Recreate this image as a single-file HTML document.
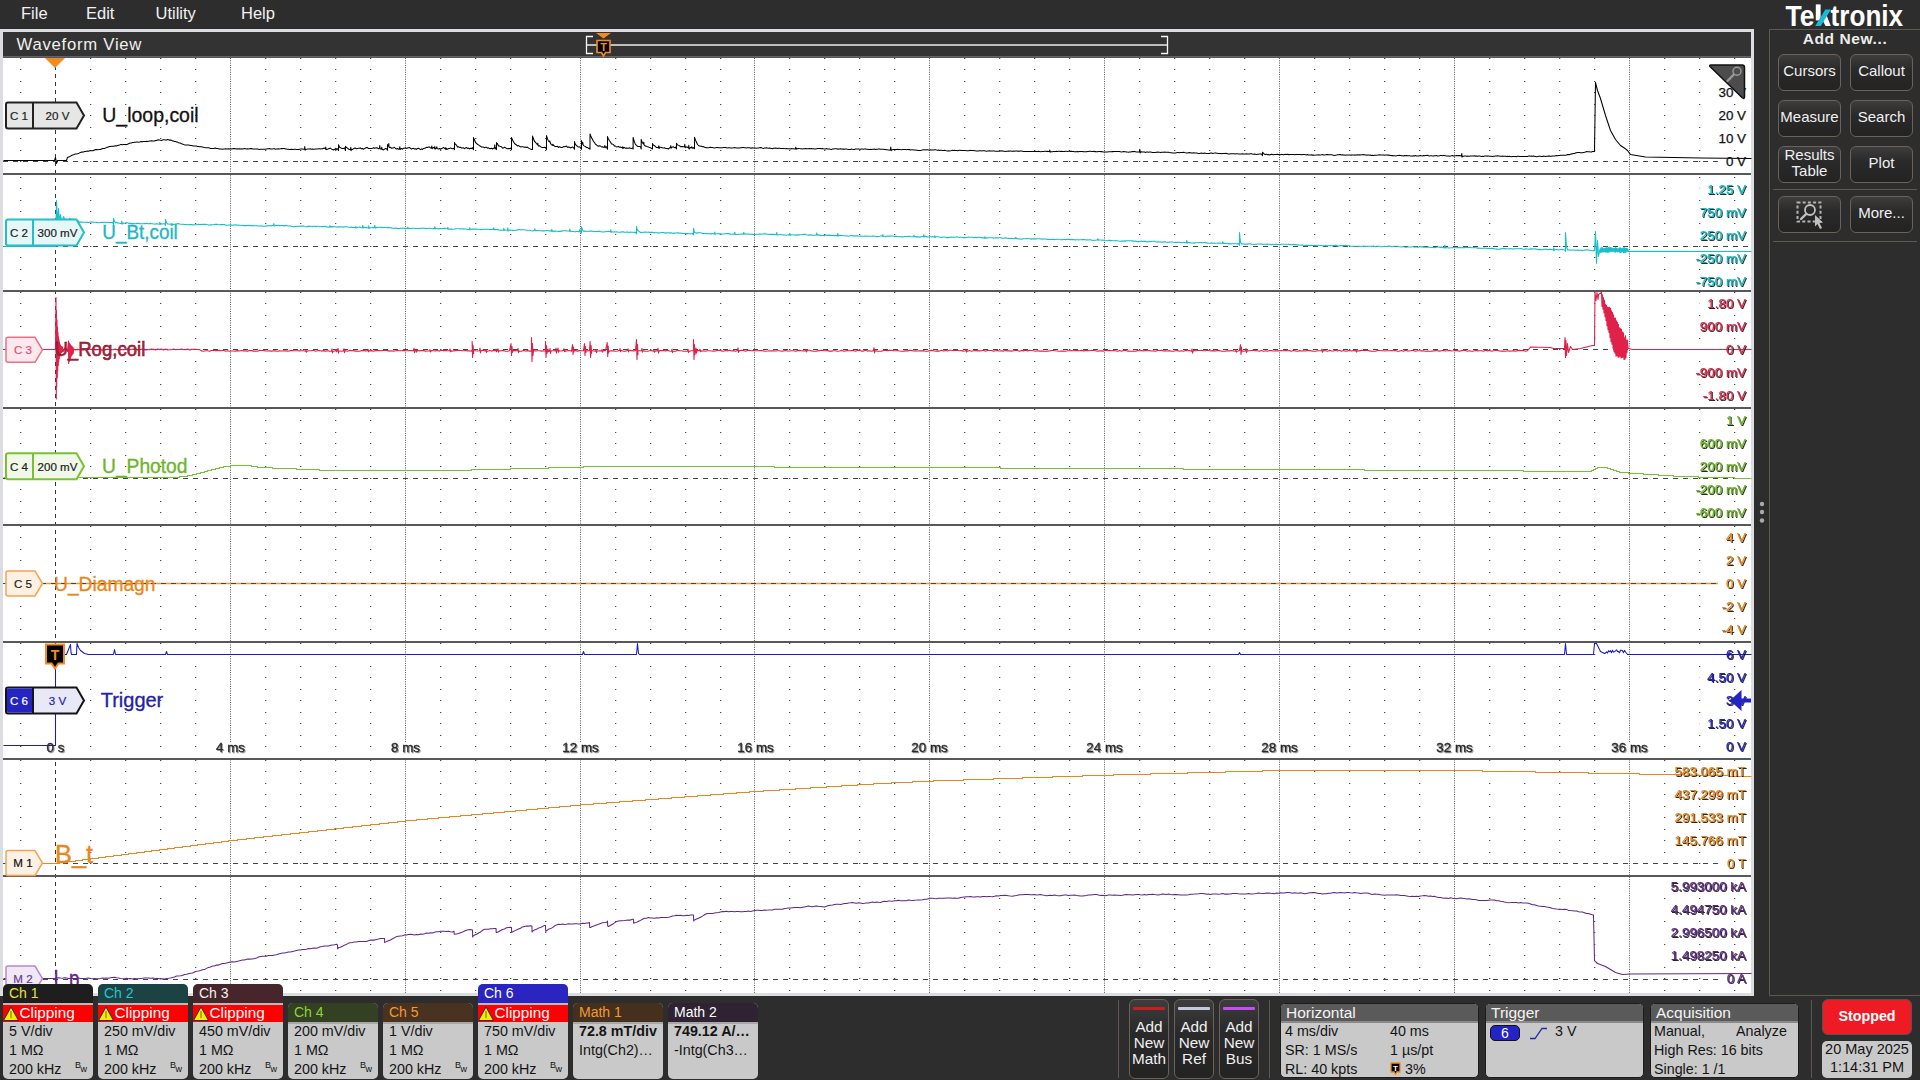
<!DOCTYPE html><html><head><meta charset="utf-8"><style>
*{margin:0;padding:0;box-sizing:border-box}
html,body{width:1920px;height:1080px;overflow:hidden;background:#2d2d2d;font-family:"Liberation Sans", sans-serif}
.a{position:absolute;white-space:pre}
.menu{color:#f2f2f2;font-size:16.5px;top:4px}
.btn{position:absolute;border:1px solid #6c6259;border-radius:6px;background:linear-gradient(#3d3d3d,#2a2a2a 40%,#232323);color:#f0f0f0;font-size:15px;text-align:center;display:flex;align-items:center;justify-content:center;line-height:16px;padding-bottom:3px}
.badge{position:absolute;width:90px;background:#c9c9c9;border-radius:5px 5px 5px 5px;overflow:hidden}
.bh{position:absolute;left:0;width:90px;height:19px;font-size:14px;line-height:19px;padding-left:6px}
.bl{position:absolute;left:6px;font-size:14.3px;color:#141414;line-height:19px}
.panel{position:absolute;background:#c9c9c9;border:1px solid #1c1c1c;border-radius:5px;overflow:hidden}
.ph{position:absolute;left:0;top:0;right:0;height:19px;background:#5a5a5a;border-bottom:2px solid #8a8a8a;color:#f4f4f4;font-size:15.5px;line-height:18px;padding-left:5px}
.pl{position:absolute;font-size:14.3px;color:#141414;line-height:19px}
</style></head><body>

<div class="a" style="left:0;top:0;width:1920px;height:29px;background:#2d2d2d"></div>
<div class="a menu" style="left:21px">File</div>
<div class="a menu" style="left:86px">Edit</div>
<div class="a menu" style="left:155.5px">Utility</div>
<div class="a menu" style="left:241px">Help</div>
<svg class="a" style="left:0;top:0" width="1920" height="30">
<g fill="#fff">
<text x="1785.5" y="26" font-family="Liberation Sans" font-weight="700" font-size="29.5" textLength="29" lengthAdjust="spacingAndGlyphs">Te</text>
<rect x="1815.8" y="4.4" width="4.8" height="16"/>
<polygon points="1822.3,19.5 1826.5,15.3 1830.8,26.1 1825.5,26.1"/>
<text x="1830.6" y="26" font-family="Liberation Sans" font-weight="700" font-size="29.5" textLength="72.5" lengthAdjust="spacingAndGlyphs">tronix</text>
</g>
<polygon points="1815.2,26.1 1820.8,26.1 1830.9,9.5 1825.3,9.5" fill="#1ab8da"/>
</svg>
<div class="a" style="left:0;top:29px;width:1754px;height:967px;background:#dcdde0"></div>
<div class="a" style="left:3px;top:32px;width:1748px;height:24px;background:#333"></div>
<div class="a" style="left:3px;top:56px;width:1748px;height:1px;background:#636467"></div>
<div class="a" style="left:3px;top:57px;width:1748px;height:1px;background:#55565a"></div>
<div class="a" style="left:3px;top:58px;width:1748px;height:935px;background:#fff"></div>
<div class="a" style="left:16.5px;top:35px;color:#f0f0f0;font-size:16.7px;letter-spacing:0.75px">Waveform View</div>
<svg class="a" style="left:0;top:0" width="1760" height="60">
<rect x="586" y="44" width="581" height="2" fill="#bdbdbd"/>
<path d="M593 36.5H586.5V53.5H593" fill="none" stroke="#f4f4f4" stroke-width="1.3"/>
<path d="M1161 36.5H1167.5V53.5H1161" fill="none" stroke="#f4f4f4" stroke-width="1.3"/>
<polygon points="596,33 611,33 603.5,38.5" fill="#f28c22"/>
<path d="M597 40.5H610V52.5H605.5L603.5 56L601.5 52.5H597Z" fill="#000" stroke="#f28c22" stroke-width="1.6"/>
<text x="603.5" y="51" text-anchor="middle" font-family="Liberation Sans" font-weight="700" font-size="11" fill="#f28c22">T</text>
</svg>
<svg class="a" style="left:0;top:0" width="1760" height="1000" font-family="Liberation Sans">
<defs><filter id="sh2" x="-5%" y="-20%" width="110%" height="140%"><feOffset dx="0.6" dy="0.6" in="SourceAlpha" result="o"/><feComponentTransfer in="o" result="o2"><feFuncA type="linear" slope="0.4"/></feComponentTransfer><feMerge><feMergeNode in="o2"/><feMergeNode in="SourceGraphic"/></feMerge></filter></defs>
<defs><filter id="sh" x="-5%" y="-20%" width="110%" height="140%"><feOffset dx="0.8" dy="0.8" in="SourceAlpha" result="o"/><feComponentTransfer in="o" result="o2"><feFuncA type="linear" slope="0.85"/></feComponentTransfer><feMerge><feMergeNode in="o2"/><feMergeNode in="SourceGraphic"/></feMerge></filter></defs>
<path d="M20 58.5h1.3 M90 58.5h1.3 M125 58.5h1.3 M160 58.5h1.3 M195 58.5h1.3 M265 58.5h1.3 M300 58.5h1.3 M335 58.5h1.3 M370 58.5h1.3 M440 58.5h1.3 M475 58.5h1.3 M510 58.5h1.3 M545 58.5h1.3 M615 58.5h1.3 M650 58.5h1.3 M685 58.5h1.3 M720 58.5h1.3 M789 58.5h1.3 M824 58.5h1.3 M859 58.5h1.3 M894 58.5h1.3 M964 58.5h1.3 M999 58.5h1.3 M1034 58.5h1.3 M1069 58.5h1.3 M1139 58.5h1.3 M1174 58.5h1.3 M1209 58.5h1.3 M1244 58.5h1.3 M1314 58.5h1.3 M1349 58.5h1.3 M1384 58.5h1.3 M1419 58.5h1.3 M1489 58.5h1.3 M1524 58.5h1.3 M1559 58.5h1.3 M1594 58.5h1.3 M1664 58.5h1.3 M1699 58.5h1.3 M1734 58.5h1.3 M20 69.5h1.3 M90 69.5h1.3 M125 69.5h1.3 M160 69.5h1.3 M195 69.5h1.3 M265 69.5h1.3 M300 69.5h1.3 M335 69.5h1.3 M370 69.5h1.3 M440 69.5h1.3 M475 69.5h1.3 M510 69.5h1.3 M545 69.5h1.3 M615 69.5h1.3 M650 69.5h1.3 M685 69.5h1.3 M720 69.5h1.3 M789 69.5h1.3 M824 69.5h1.3 M859 69.5h1.3 M894 69.5h1.3 M964 69.5h1.3 M999 69.5h1.3 M1034 69.5h1.3 M1069 69.5h1.3 M1139 69.5h1.3 M1174 69.5h1.3 M1209 69.5h1.3 M1244 69.5h1.3 M1314 69.5h1.3 M1349 69.5h1.3 M1384 69.5h1.3 M1419 69.5h1.3 M1489 69.5h1.3 M1524 69.5h1.3 M1559 69.5h1.3 M1594 69.5h1.3 M1664 69.5h1.3 M1699 69.5h1.3 M1734 69.5h1.3 M20 81.5h1.3 M90 81.5h1.3 M125 81.5h1.3 M160 81.5h1.3 M195 81.5h1.3 M265 81.5h1.3 M300 81.5h1.3 M335 81.5h1.3 M370 81.5h1.3 M440 81.5h1.3 M475 81.5h1.3 M510 81.5h1.3 M545 81.5h1.3 M615 81.5h1.3 M650 81.5h1.3 M685 81.5h1.3 M720 81.5h1.3 M789 81.5h1.3 M824 81.5h1.3 M859 81.5h1.3 M894 81.5h1.3 M964 81.5h1.3 M999 81.5h1.3 M1034 81.5h1.3 M1069 81.5h1.3 M1139 81.5h1.3 M1174 81.5h1.3 M1209 81.5h1.3 M1244 81.5h1.3 M1314 81.5h1.3 M1349 81.5h1.3 M1384 81.5h1.3 M1419 81.5h1.3 M1489 81.5h1.3 M1524 81.5h1.3 M1559 81.5h1.3 M1594 81.5h1.3 M1664 81.5h1.3 M1699 81.5h1.3 M1734 81.5h1.3 M20 92.5h1.3 M90 92.5h1.3 M125 92.5h1.3 M160 92.5h1.3 M195 92.5h1.3 M265 92.5h1.3 M300 92.5h1.3 M335 92.5h1.3 M370 92.5h1.3 M440 92.5h1.3 M475 92.5h1.3 M510 92.5h1.3 M545 92.5h1.3 M615 92.5h1.3 M650 92.5h1.3 M685 92.5h1.3 M720 92.5h1.3 M789 92.5h1.3 M824 92.5h1.3 M859 92.5h1.3 M894 92.5h1.3 M964 92.5h1.3 M999 92.5h1.3 M1034 92.5h1.3 M1069 92.5h1.3 M1139 92.5h1.3 M1174 92.5h1.3 M1209 92.5h1.3 M1244 92.5h1.3 M1314 92.5h1.3 M1349 92.5h1.3 M1384 92.5h1.3 M1419 92.5h1.3 M1489 92.5h1.3 M1524 92.5h1.3 M1559 92.5h1.3 M1594 92.5h1.3 M1664 92.5h1.3 M1699 92.5h1.3 M1734 92.5h1.3 M20 104.5h1.3 M90 104.5h1.3 M125 104.5h1.3 M160 104.5h1.3 M195 104.5h1.3 M265 104.5h1.3 M300 104.5h1.3 M335 104.5h1.3 M370 104.5h1.3 M440 104.5h1.3 M475 104.5h1.3 M510 104.5h1.3 M545 104.5h1.3 M615 104.5h1.3 M650 104.5h1.3 M685 104.5h1.3 M720 104.5h1.3 M789 104.5h1.3 M824 104.5h1.3 M859 104.5h1.3 M894 104.5h1.3 M964 104.5h1.3 M999 104.5h1.3 M1034 104.5h1.3 M1069 104.5h1.3 M1139 104.5h1.3 M1174 104.5h1.3 M1209 104.5h1.3 M1244 104.5h1.3 M1314 104.5h1.3 M1349 104.5h1.3 M1384 104.5h1.3 M1419 104.5h1.3 M1489 104.5h1.3 M1524 104.5h1.3 M1559 104.5h1.3 M1594 104.5h1.3 M1664 104.5h1.3 M1699 104.5h1.3 M1734 104.5h1.3 M20 115.5h1.3 M90 115.5h1.3 M125 115.5h1.3 M160 115.5h1.3 M195 115.5h1.3 M265 115.5h1.3 M300 115.5h1.3 M335 115.5h1.3 M370 115.5h1.3 M440 115.5h1.3 M475 115.5h1.3 M510 115.5h1.3 M545 115.5h1.3 M615 115.5h1.3 M650 115.5h1.3 M685 115.5h1.3 M720 115.5h1.3 M789 115.5h1.3 M824 115.5h1.3 M859 115.5h1.3 M894 115.5h1.3 M964 115.5h1.3 M999 115.5h1.3 M1034 115.5h1.3 M1069 115.5h1.3 M1139 115.5h1.3 M1174 115.5h1.3 M1209 115.5h1.3 M1244 115.5h1.3 M1314 115.5h1.3 M1349 115.5h1.3 M1384 115.5h1.3 M1419 115.5h1.3 M1489 115.5h1.3 M1524 115.5h1.3 M1559 115.5h1.3 M1594 115.5h1.3 M1664 115.5h1.3 M1699 115.5h1.3 M1734 115.5h1.3 M20 127.5h1.3 M90 127.5h1.3 M125 127.5h1.3 M160 127.5h1.3 M195 127.5h1.3 M265 127.5h1.3 M300 127.5h1.3 M335 127.5h1.3 M370 127.5h1.3 M440 127.5h1.3 M475 127.5h1.3 M510 127.5h1.3 M545 127.5h1.3 M615 127.5h1.3 M650 127.5h1.3 M685 127.5h1.3 M720 127.5h1.3 M789 127.5h1.3 M824 127.5h1.3 M859 127.5h1.3 M894 127.5h1.3 M964 127.5h1.3 M999 127.5h1.3 M1034 127.5h1.3 M1069 127.5h1.3 M1139 127.5h1.3 M1174 127.5h1.3 M1209 127.5h1.3 M1244 127.5h1.3 M1314 127.5h1.3 M1349 127.5h1.3 M1384 127.5h1.3 M1419 127.5h1.3 M1489 127.5h1.3 M1524 127.5h1.3 M1559 127.5h1.3 M1594 127.5h1.3 M1664 127.5h1.3 M1699 127.5h1.3 M1734 127.5h1.3 M20 138.5h1.3 M90 138.5h1.3 M125 138.5h1.3 M160 138.5h1.3 M195 138.5h1.3 M265 138.5h1.3 M300 138.5h1.3 M335 138.5h1.3 M370 138.5h1.3 M440 138.5h1.3 M475 138.5h1.3 M510 138.5h1.3 M545 138.5h1.3 M615 138.5h1.3 M650 138.5h1.3 M685 138.5h1.3 M720 138.5h1.3 M789 138.5h1.3 M824 138.5h1.3 M859 138.5h1.3 M894 138.5h1.3 M964 138.5h1.3 M999 138.5h1.3 M1034 138.5h1.3 M1069 138.5h1.3 M1139 138.5h1.3 M1174 138.5h1.3 M1209 138.5h1.3 M1244 138.5h1.3 M1314 138.5h1.3 M1349 138.5h1.3 M1384 138.5h1.3 M1419 138.5h1.3 M1489 138.5h1.3 M1524 138.5h1.3 M1559 138.5h1.3 M1594 138.5h1.3 M1664 138.5h1.3 M1699 138.5h1.3 M1734 138.5h1.3 M20 150.5h1.3 M90 150.5h1.3 M125 150.5h1.3 M160 150.5h1.3 M195 150.5h1.3 M265 150.5h1.3 M300 150.5h1.3 M335 150.5h1.3 M370 150.5h1.3 M440 150.5h1.3 M475 150.5h1.3 M510 150.5h1.3 M545 150.5h1.3 M615 150.5h1.3 M650 150.5h1.3 M685 150.5h1.3 M720 150.5h1.3 M789 150.5h1.3 M824 150.5h1.3 M859 150.5h1.3 M894 150.5h1.3 M964 150.5h1.3 M999 150.5h1.3 M1034 150.5h1.3 M1069 150.5h1.3 M1139 150.5h1.3 M1174 150.5h1.3 M1209 150.5h1.3 M1244 150.5h1.3 M1314 150.5h1.3 M1349 150.5h1.3 M1384 150.5h1.3 M1419 150.5h1.3 M1489 150.5h1.3 M1524 150.5h1.3 M1559 150.5h1.3 M1594 150.5h1.3 M1664 150.5h1.3 M1699 150.5h1.3 M1734 150.5h1.3 M20 161.5h1.3 M90 161.5h1.3 M125 161.5h1.3 M160 161.5h1.3 M195 161.5h1.3 M265 161.5h1.3 M300 161.5h1.3 M335 161.5h1.3 M370 161.5h1.3 M440 161.5h1.3 M475 161.5h1.3 M510 161.5h1.3 M545 161.5h1.3 M615 161.5h1.3 M650 161.5h1.3 M685 161.5h1.3 M720 161.5h1.3 M789 161.5h1.3 M824 161.5h1.3 M859 161.5h1.3 M894 161.5h1.3 M964 161.5h1.3 M999 161.5h1.3 M1034 161.5h1.3 M1069 161.5h1.3 M1139 161.5h1.3 M1174 161.5h1.3 M1209 161.5h1.3 M1244 161.5h1.3 M1314 161.5h1.3 M1349 161.5h1.3 M1384 161.5h1.3 M1419 161.5h1.3 M1489 161.5h1.3 M1524 161.5h1.3 M1559 161.5h1.3 M1594 161.5h1.3 M1664 161.5h1.3 M1699 161.5h1.3 M1734 161.5h1.3 M20 177.5h1.3 M90 177.5h1.3 M125 177.5h1.3 M160 177.5h1.3 M195 177.5h1.3 M265 177.5h1.3 M300 177.5h1.3 M335 177.5h1.3 M370 177.5h1.3 M440 177.5h1.3 M475 177.5h1.3 M510 177.5h1.3 M545 177.5h1.3 M615 177.5h1.3 M650 177.5h1.3 M685 177.5h1.3 M720 177.5h1.3 M789 177.5h1.3 M824 177.5h1.3 M859 177.5h1.3 M894 177.5h1.3 M964 177.5h1.3 M999 177.5h1.3 M1034 177.5h1.3 M1069 177.5h1.3 M1139 177.5h1.3 M1174 177.5h1.3 M1209 177.5h1.3 M1244 177.5h1.3 M1314 177.5h1.3 M1349 177.5h1.3 M1384 177.5h1.3 M1419 177.5h1.3 M1489 177.5h1.3 M1524 177.5h1.3 M1559 177.5h1.3 M1594 177.5h1.3 M1664 177.5h1.3 M1699 177.5h1.3 M1734 177.5h1.3 M20 188.5h1.3 M90 188.5h1.3 M125 188.5h1.3 M160 188.5h1.3 M195 188.5h1.3 M265 188.5h1.3 M300 188.5h1.3 M335 188.5h1.3 M370 188.5h1.3 M440 188.5h1.3 M475 188.5h1.3 M510 188.5h1.3 M545 188.5h1.3 M615 188.5h1.3 M650 188.5h1.3 M685 188.5h1.3 M720 188.5h1.3 M789 188.5h1.3 M824 188.5h1.3 M859 188.5h1.3 M894 188.5h1.3 M964 188.5h1.3 M999 188.5h1.3 M1034 188.5h1.3 M1069 188.5h1.3 M1139 188.5h1.3 M1174 188.5h1.3 M1209 188.5h1.3 M1244 188.5h1.3 M1314 188.5h1.3 M1349 188.5h1.3 M1384 188.5h1.3 M1419 188.5h1.3 M1489 188.5h1.3 M1524 188.5h1.3 M1559 188.5h1.3 M1594 188.5h1.3 M1664 188.5h1.3 M1699 188.5h1.3 M1734 188.5h1.3 M20 200.5h1.3 M90 200.5h1.3 M125 200.5h1.3 M160 200.5h1.3 M195 200.5h1.3 M265 200.5h1.3 M300 200.5h1.3 M335 200.5h1.3 M370 200.5h1.3 M440 200.5h1.3 M475 200.5h1.3 M510 200.5h1.3 M545 200.5h1.3 M615 200.5h1.3 M650 200.5h1.3 M685 200.5h1.3 M720 200.5h1.3 M789 200.5h1.3 M824 200.5h1.3 M859 200.5h1.3 M894 200.5h1.3 M964 200.5h1.3 M999 200.5h1.3 M1034 200.5h1.3 M1069 200.5h1.3 M1139 200.5h1.3 M1174 200.5h1.3 M1209 200.5h1.3 M1244 200.5h1.3 M1314 200.5h1.3 M1349 200.5h1.3 M1384 200.5h1.3 M1419 200.5h1.3 M1489 200.5h1.3 M1524 200.5h1.3 M1559 200.5h1.3 M1594 200.5h1.3 M1664 200.5h1.3 M1699 200.5h1.3 M1734 200.5h1.3 M20 211.5h1.3 M90 211.5h1.3 M125 211.5h1.3 M160 211.5h1.3 M195 211.5h1.3 M265 211.5h1.3 M300 211.5h1.3 M335 211.5h1.3 M370 211.5h1.3 M440 211.5h1.3 M475 211.5h1.3 M510 211.5h1.3 M545 211.5h1.3 M615 211.5h1.3 M650 211.5h1.3 M685 211.5h1.3 M720 211.5h1.3 M789 211.5h1.3 M824 211.5h1.3 M859 211.5h1.3 M894 211.5h1.3 M964 211.5h1.3 M999 211.5h1.3 M1034 211.5h1.3 M1069 211.5h1.3 M1139 211.5h1.3 M1174 211.5h1.3 M1209 211.5h1.3 M1244 211.5h1.3 M1314 211.5h1.3 M1349 211.5h1.3 M1384 211.5h1.3 M1419 211.5h1.3 M1489 211.5h1.3 M1524 211.5h1.3 M1559 211.5h1.3 M1594 211.5h1.3 M1664 211.5h1.3 M1699 211.5h1.3 M1734 211.5h1.3 M20 223.5h1.3 M90 223.5h1.3 M125 223.5h1.3 M160 223.5h1.3 M195 223.5h1.3 M265 223.5h1.3 M300 223.5h1.3 M335 223.5h1.3 M370 223.5h1.3 M440 223.5h1.3 M475 223.5h1.3 M510 223.5h1.3 M545 223.5h1.3 M615 223.5h1.3 M650 223.5h1.3 M685 223.5h1.3 M720 223.5h1.3 M789 223.5h1.3 M824 223.5h1.3 M859 223.5h1.3 M894 223.5h1.3 M964 223.5h1.3 M999 223.5h1.3 M1034 223.5h1.3 M1069 223.5h1.3 M1139 223.5h1.3 M1174 223.5h1.3 M1209 223.5h1.3 M1244 223.5h1.3 M1314 223.5h1.3 M1349 223.5h1.3 M1384 223.5h1.3 M1419 223.5h1.3 M1489 223.5h1.3 M1524 223.5h1.3 M1559 223.5h1.3 M1594 223.5h1.3 M1664 223.5h1.3 M1699 223.5h1.3 M1734 223.5h1.3 M20 234.5h1.3 M90 234.5h1.3 M125 234.5h1.3 M160 234.5h1.3 M195 234.5h1.3 M265 234.5h1.3 M300 234.5h1.3 M335 234.5h1.3 M370 234.5h1.3 M440 234.5h1.3 M475 234.5h1.3 M510 234.5h1.3 M545 234.5h1.3 M615 234.5h1.3 M650 234.5h1.3 M685 234.5h1.3 M720 234.5h1.3 M789 234.5h1.3 M824 234.5h1.3 M859 234.5h1.3 M894 234.5h1.3 M964 234.5h1.3 M999 234.5h1.3 M1034 234.5h1.3 M1069 234.5h1.3 M1139 234.5h1.3 M1174 234.5h1.3 M1209 234.5h1.3 M1244 234.5h1.3 M1314 234.5h1.3 M1349 234.5h1.3 M1384 234.5h1.3 M1419 234.5h1.3 M1489 234.5h1.3 M1524 234.5h1.3 M1559 234.5h1.3 M1594 234.5h1.3 M1664 234.5h1.3 M1699 234.5h1.3 M1734 234.5h1.3 M20 246.5h1.3 M90 246.5h1.3 M125 246.5h1.3 M160 246.5h1.3 M195 246.5h1.3 M265 246.5h1.3 M300 246.5h1.3 M335 246.5h1.3 M370 246.5h1.3 M440 246.5h1.3 M475 246.5h1.3 M510 246.5h1.3 M545 246.5h1.3 M615 246.5h1.3 M650 246.5h1.3 M685 246.5h1.3 M720 246.5h1.3 M789 246.5h1.3 M824 246.5h1.3 M859 246.5h1.3 M894 246.5h1.3 M964 246.5h1.3 M999 246.5h1.3 M1034 246.5h1.3 M1069 246.5h1.3 M1139 246.5h1.3 M1174 246.5h1.3 M1209 246.5h1.3 M1244 246.5h1.3 M1314 246.5h1.3 M1349 246.5h1.3 M1384 246.5h1.3 M1419 246.5h1.3 M1489 246.5h1.3 M1524 246.5h1.3 M1559 246.5h1.3 M1594 246.5h1.3 M1664 246.5h1.3 M1699 246.5h1.3 M1734 246.5h1.3 M20 257.5h1.3 M90 257.5h1.3 M125 257.5h1.3 M160 257.5h1.3 M195 257.5h1.3 M265 257.5h1.3 M300 257.5h1.3 M335 257.5h1.3 M370 257.5h1.3 M440 257.5h1.3 M475 257.5h1.3 M510 257.5h1.3 M545 257.5h1.3 M615 257.5h1.3 M650 257.5h1.3 M685 257.5h1.3 M720 257.5h1.3 M789 257.5h1.3 M824 257.5h1.3 M859 257.5h1.3 M894 257.5h1.3 M964 257.5h1.3 M999 257.5h1.3 M1034 257.5h1.3 M1069 257.5h1.3 M1139 257.5h1.3 M1174 257.5h1.3 M1209 257.5h1.3 M1244 257.5h1.3 M1314 257.5h1.3 M1349 257.5h1.3 M1384 257.5h1.3 M1419 257.5h1.3 M1489 257.5h1.3 M1524 257.5h1.3 M1559 257.5h1.3 M1594 257.5h1.3 M1664 257.5h1.3 M1699 257.5h1.3 M1734 257.5h1.3 M20 269.5h1.3 M90 269.5h1.3 M125 269.5h1.3 M160 269.5h1.3 M195 269.5h1.3 M265 269.5h1.3 M300 269.5h1.3 M335 269.5h1.3 M370 269.5h1.3 M440 269.5h1.3 M475 269.5h1.3 M510 269.5h1.3 M545 269.5h1.3 M615 269.5h1.3 M650 269.5h1.3 M685 269.5h1.3 M720 269.5h1.3 M789 269.5h1.3 M824 269.5h1.3 M859 269.5h1.3 M894 269.5h1.3 M964 269.5h1.3 M999 269.5h1.3 M1034 269.5h1.3 M1069 269.5h1.3 M1139 269.5h1.3 M1174 269.5h1.3 M1209 269.5h1.3 M1244 269.5h1.3 M1314 269.5h1.3 M1349 269.5h1.3 M1384 269.5h1.3 M1419 269.5h1.3 M1489 269.5h1.3 M1524 269.5h1.3 M1559 269.5h1.3 M1594 269.5h1.3 M1664 269.5h1.3 M1699 269.5h1.3 M1734 269.5h1.3 M20 280.5h1.3 M90 280.5h1.3 M125 280.5h1.3 M160 280.5h1.3 M195 280.5h1.3 M265 280.5h1.3 M300 280.5h1.3 M335 280.5h1.3 M370 280.5h1.3 M440 280.5h1.3 M475 280.5h1.3 M510 280.5h1.3 M545 280.5h1.3 M615 280.5h1.3 M650 280.5h1.3 M685 280.5h1.3 M720 280.5h1.3 M789 280.5h1.3 M824 280.5h1.3 M859 280.5h1.3 M894 280.5h1.3 M964 280.5h1.3 M999 280.5h1.3 M1034 280.5h1.3 M1069 280.5h1.3 M1139 280.5h1.3 M1174 280.5h1.3 M1209 280.5h1.3 M1244 280.5h1.3 M1314 280.5h1.3 M1349 280.5h1.3 M1384 280.5h1.3 M1419 280.5h1.3 M1489 280.5h1.3 M1524 280.5h1.3 M1559 280.5h1.3 M1594 280.5h1.3 M1664 280.5h1.3 M1699 280.5h1.3 M1734 280.5h1.3 M20 292.5h1.3 M90 292.5h1.3 M125 292.5h1.3 M160 292.5h1.3 M195 292.5h1.3 M265 292.5h1.3 M300 292.5h1.3 M335 292.5h1.3 M370 292.5h1.3 M440 292.5h1.3 M475 292.5h1.3 M510 292.5h1.3 M545 292.5h1.3 M615 292.5h1.3 M650 292.5h1.3 M685 292.5h1.3 M720 292.5h1.3 M789 292.5h1.3 M824 292.5h1.3 M859 292.5h1.3 M894 292.5h1.3 M964 292.5h1.3 M999 292.5h1.3 M1034 292.5h1.3 M1069 292.5h1.3 M1139 292.5h1.3 M1174 292.5h1.3 M1209 292.5h1.3 M1244 292.5h1.3 M1314 292.5h1.3 M1349 292.5h1.3 M1384 292.5h1.3 M1419 292.5h1.3 M1489 292.5h1.3 M1524 292.5h1.3 M1559 292.5h1.3 M1594 292.5h1.3 M1664 292.5h1.3 M1699 292.5h1.3 M1734 292.5h1.3 M20 303.5h1.3 M90 303.5h1.3 M125 303.5h1.3 M160 303.5h1.3 M195 303.5h1.3 M265 303.5h1.3 M300 303.5h1.3 M335 303.5h1.3 M370 303.5h1.3 M440 303.5h1.3 M475 303.5h1.3 M510 303.5h1.3 M545 303.5h1.3 M615 303.5h1.3 M650 303.5h1.3 M685 303.5h1.3 M720 303.5h1.3 M789 303.5h1.3 M824 303.5h1.3 M859 303.5h1.3 M894 303.5h1.3 M964 303.5h1.3 M999 303.5h1.3 M1034 303.5h1.3 M1069 303.5h1.3 M1139 303.5h1.3 M1174 303.5h1.3 M1209 303.5h1.3 M1244 303.5h1.3 M1314 303.5h1.3 M1349 303.5h1.3 M1384 303.5h1.3 M1419 303.5h1.3 M1489 303.5h1.3 M1524 303.5h1.3 M1559 303.5h1.3 M1594 303.5h1.3 M1664 303.5h1.3 M1699 303.5h1.3 M1734 303.5h1.3 M20 315.5h1.3 M90 315.5h1.3 M125 315.5h1.3 M160 315.5h1.3 M195 315.5h1.3 M265 315.5h1.3 M300 315.5h1.3 M335 315.5h1.3 M370 315.5h1.3 M440 315.5h1.3 M475 315.5h1.3 M510 315.5h1.3 M545 315.5h1.3 M615 315.5h1.3 M650 315.5h1.3 M685 315.5h1.3 M720 315.5h1.3 M789 315.5h1.3 M824 315.5h1.3 M859 315.5h1.3 M894 315.5h1.3 M964 315.5h1.3 M999 315.5h1.3 M1034 315.5h1.3 M1069 315.5h1.3 M1139 315.5h1.3 M1174 315.5h1.3 M1209 315.5h1.3 M1244 315.5h1.3 M1314 315.5h1.3 M1349 315.5h1.3 M1384 315.5h1.3 M1419 315.5h1.3 M1489 315.5h1.3 M1524 315.5h1.3 M1559 315.5h1.3 M1594 315.5h1.3 M1664 315.5h1.3 M1699 315.5h1.3 M1734 315.5h1.3 M20 326.5h1.3 M90 326.5h1.3 M125 326.5h1.3 M160 326.5h1.3 M195 326.5h1.3 M265 326.5h1.3 M300 326.5h1.3 M335 326.5h1.3 M370 326.5h1.3 M440 326.5h1.3 M475 326.5h1.3 M510 326.5h1.3 M545 326.5h1.3 M615 326.5h1.3 M650 326.5h1.3 M685 326.5h1.3 M720 326.5h1.3 M789 326.5h1.3 M824 326.5h1.3 M859 326.5h1.3 M894 326.5h1.3 M964 326.5h1.3 M999 326.5h1.3 M1034 326.5h1.3 M1069 326.5h1.3 M1139 326.5h1.3 M1174 326.5h1.3 M1209 326.5h1.3 M1244 326.5h1.3 M1314 326.5h1.3 M1349 326.5h1.3 M1384 326.5h1.3 M1419 326.5h1.3 M1489 326.5h1.3 M1524 326.5h1.3 M1559 326.5h1.3 M1594 326.5h1.3 M1664 326.5h1.3 M1699 326.5h1.3 M1734 326.5h1.3 M20 338.5h1.3 M90 338.5h1.3 M125 338.5h1.3 M160 338.5h1.3 M195 338.5h1.3 M265 338.5h1.3 M300 338.5h1.3 M335 338.5h1.3 M370 338.5h1.3 M440 338.5h1.3 M475 338.5h1.3 M510 338.5h1.3 M545 338.5h1.3 M615 338.5h1.3 M650 338.5h1.3 M685 338.5h1.3 M720 338.5h1.3 M789 338.5h1.3 M824 338.5h1.3 M859 338.5h1.3 M894 338.5h1.3 M964 338.5h1.3 M999 338.5h1.3 M1034 338.5h1.3 M1069 338.5h1.3 M1139 338.5h1.3 M1174 338.5h1.3 M1209 338.5h1.3 M1244 338.5h1.3 M1314 338.5h1.3 M1349 338.5h1.3 M1384 338.5h1.3 M1419 338.5h1.3 M1489 338.5h1.3 M1524 338.5h1.3 M1559 338.5h1.3 M1594 338.5h1.3 M1664 338.5h1.3 M1699 338.5h1.3 M1734 338.5h1.3 M20 349.5h1.3 M90 349.5h1.3 M125 349.5h1.3 M160 349.5h1.3 M195 349.5h1.3 M265 349.5h1.3 M300 349.5h1.3 M335 349.5h1.3 M370 349.5h1.3 M440 349.5h1.3 M475 349.5h1.3 M510 349.5h1.3 M545 349.5h1.3 M615 349.5h1.3 M650 349.5h1.3 M685 349.5h1.3 M720 349.5h1.3 M789 349.5h1.3 M824 349.5h1.3 M859 349.5h1.3 M894 349.5h1.3 M964 349.5h1.3 M999 349.5h1.3 M1034 349.5h1.3 M1069 349.5h1.3 M1139 349.5h1.3 M1174 349.5h1.3 M1209 349.5h1.3 M1244 349.5h1.3 M1314 349.5h1.3 M1349 349.5h1.3 M1384 349.5h1.3 M1419 349.5h1.3 M1489 349.5h1.3 M1524 349.5h1.3 M1559 349.5h1.3 M1594 349.5h1.3 M1664 349.5h1.3 M1699 349.5h1.3 M1734 349.5h1.3 M20 361.5h1.3 M90 361.5h1.3 M125 361.5h1.3 M160 361.5h1.3 M195 361.5h1.3 M265 361.5h1.3 M300 361.5h1.3 M335 361.5h1.3 M370 361.5h1.3 M440 361.5h1.3 M475 361.5h1.3 M510 361.5h1.3 M545 361.5h1.3 M615 361.5h1.3 M650 361.5h1.3 M685 361.5h1.3 M720 361.5h1.3 M789 361.5h1.3 M824 361.5h1.3 M859 361.5h1.3 M894 361.5h1.3 M964 361.5h1.3 M999 361.5h1.3 M1034 361.5h1.3 M1069 361.5h1.3 M1139 361.5h1.3 M1174 361.5h1.3 M1209 361.5h1.3 M1244 361.5h1.3 M1314 361.5h1.3 M1349 361.5h1.3 M1384 361.5h1.3 M1419 361.5h1.3 M1489 361.5h1.3 M1524 361.5h1.3 M1559 361.5h1.3 M1594 361.5h1.3 M1664 361.5h1.3 M1699 361.5h1.3 M1734 361.5h1.3 M20 372.5h1.3 M90 372.5h1.3 M125 372.5h1.3 M160 372.5h1.3 M195 372.5h1.3 M265 372.5h1.3 M300 372.5h1.3 M335 372.5h1.3 M370 372.5h1.3 M440 372.5h1.3 M475 372.5h1.3 M510 372.5h1.3 M545 372.5h1.3 M615 372.5h1.3 M650 372.5h1.3 M685 372.5h1.3 M720 372.5h1.3 M789 372.5h1.3 M824 372.5h1.3 M859 372.5h1.3 M894 372.5h1.3 M964 372.5h1.3 M999 372.5h1.3 M1034 372.5h1.3 M1069 372.5h1.3 M1139 372.5h1.3 M1174 372.5h1.3 M1209 372.5h1.3 M1244 372.5h1.3 M1314 372.5h1.3 M1349 372.5h1.3 M1384 372.5h1.3 M1419 372.5h1.3 M1489 372.5h1.3 M1524 372.5h1.3 M1559 372.5h1.3 M1594 372.5h1.3 M1664 372.5h1.3 M1699 372.5h1.3 M1734 372.5h1.3 M20 384.5h1.3 M90 384.5h1.3 M125 384.5h1.3 M160 384.5h1.3 M195 384.5h1.3 M265 384.5h1.3 M300 384.5h1.3 M335 384.5h1.3 M370 384.5h1.3 M440 384.5h1.3 M475 384.5h1.3 M510 384.5h1.3 M545 384.5h1.3 M615 384.5h1.3 M650 384.5h1.3 M685 384.5h1.3 M720 384.5h1.3 M789 384.5h1.3 M824 384.5h1.3 M859 384.5h1.3 M894 384.5h1.3 M964 384.5h1.3 M999 384.5h1.3 M1034 384.5h1.3 M1069 384.5h1.3 M1139 384.5h1.3 M1174 384.5h1.3 M1209 384.5h1.3 M1244 384.5h1.3 M1314 384.5h1.3 M1349 384.5h1.3 M1384 384.5h1.3 M1419 384.5h1.3 M1489 384.5h1.3 M1524 384.5h1.3 M1559 384.5h1.3 M1594 384.5h1.3 M1664 384.5h1.3 M1699 384.5h1.3 M1734 384.5h1.3 M20 395.5h1.3 M90 395.5h1.3 M125 395.5h1.3 M160 395.5h1.3 M195 395.5h1.3 M265 395.5h1.3 M300 395.5h1.3 M335 395.5h1.3 M370 395.5h1.3 M440 395.5h1.3 M475 395.5h1.3 M510 395.5h1.3 M545 395.5h1.3 M615 395.5h1.3 M650 395.5h1.3 M685 395.5h1.3 M720 395.5h1.3 M789 395.5h1.3 M824 395.5h1.3 M859 395.5h1.3 M894 395.5h1.3 M964 395.5h1.3 M999 395.5h1.3 M1034 395.5h1.3 M1069 395.5h1.3 M1139 395.5h1.3 M1174 395.5h1.3 M1209 395.5h1.3 M1244 395.5h1.3 M1314 395.5h1.3 M1349 395.5h1.3 M1384 395.5h1.3 M1419 395.5h1.3 M1489 395.5h1.3 M1524 395.5h1.3 M1559 395.5h1.3 M1594 395.5h1.3 M1664 395.5h1.3 M1699 395.5h1.3 M1734 395.5h1.3 M20 409.5h1.3 M90 409.5h1.3 M125 409.5h1.3 M160 409.5h1.3 M195 409.5h1.3 M265 409.5h1.3 M300 409.5h1.3 M335 409.5h1.3 M370 409.5h1.3 M440 409.5h1.3 M475 409.5h1.3 M510 409.5h1.3 M545 409.5h1.3 M615 409.5h1.3 M650 409.5h1.3 M685 409.5h1.3 M720 409.5h1.3 M789 409.5h1.3 M824 409.5h1.3 M859 409.5h1.3 M894 409.5h1.3 M964 409.5h1.3 M999 409.5h1.3 M1034 409.5h1.3 M1069 409.5h1.3 M1139 409.5h1.3 M1174 409.5h1.3 M1209 409.5h1.3 M1244 409.5h1.3 M1314 409.5h1.3 M1349 409.5h1.3 M1384 409.5h1.3 M1419 409.5h1.3 M1489 409.5h1.3 M1524 409.5h1.3 M1559 409.5h1.3 M1594 409.5h1.3 M1664 409.5h1.3 M1699 409.5h1.3 M1734 409.5h1.3 M20 420.5h1.3 M90 420.5h1.3 M125 420.5h1.3 M160 420.5h1.3 M195 420.5h1.3 M265 420.5h1.3 M300 420.5h1.3 M335 420.5h1.3 M370 420.5h1.3 M440 420.5h1.3 M475 420.5h1.3 M510 420.5h1.3 M545 420.5h1.3 M615 420.5h1.3 M650 420.5h1.3 M685 420.5h1.3 M720 420.5h1.3 M789 420.5h1.3 M824 420.5h1.3 M859 420.5h1.3 M894 420.5h1.3 M964 420.5h1.3 M999 420.5h1.3 M1034 420.5h1.3 M1069 420.5h1.3 M1139 420.5h1.3 M1174 420.5h1.3 M1209 420.5h1.3 M1244 420.5h1.3 M1314 420.5h1.3 M1349 420.5h1.3 M1384 420.5h1.3 M1419 420.5h1.3 M1489 420.5h1.3 M1524 420.5h1.3 M1559 420.5h1.3 M1594 420.5h1.3 M1664 420.5h1.3 M1699 420.5h1.3 M1734 420.5h1.3 M20 432.5h1.3 M90 432.5h1.3 M125 432.5h1.3 M160 432.5h1.3 M195 432.5h1.3 M265 432.5h1.3 M300 432.5h1.3 M335 432.5h1.3 M370 432.5h1.3 M440 432.5h1.3 M475 432.5h1.3 M510 432.5h1.3 M545 432.5h1.3 M615 432.5h1.3 M650 432.5h1.3 M685 432.5h1.3 M720 432.5h1.3 M789 432.5h1.3 M824 432.5h1.3 M859 432.5h1.3 M894 432.5h1.3 M964 432.5h1.3 M999 432.5h1.3 M1034 432.5h1.3 M1069 432.5h1.3 M1139 432.5h1.3 M1174 432.5h1.3 M1209 432.5h1.3 M1244 432.5h1.3 M1314 432.5h1.3 M1349 432.5h1.3 M1384 432.5h1.3 M1419 432.5h1.3 M1489 432.5h1.3 M1524 432.5h1.3 M1559 432.5h1.3 M1594 432.5h1.3 M1664 432.5h1.3 M1699 432.5h1.3 M1734 432.5h1.3 M20 443.5h1.3 M90 443.5h1.3 M125 443.5h1.3 M160 443.5h1.3 M195 443.5h1.3 M265 443.5h1.3 M300 443.5h1.3 M335 443.5h1.3 M370 443.5h1.3 M440 443.5h1.3 M475 443.5h1.3 M510 443.5h1.3 M545 443.5h1.3 M615 443.5h1.3 M650 443.5h1.3 M685 443.5h1.3 M720 443.5h1.3 M789 443.5h1.3 M824 443.5h1.3 M859 443.5h1.3 M894 443.5h1.3 M964 443.5h1.3 M999 443.5h1.3 M1034 443.5h1.3 M1069 443.5h1.3 M1139 443.5h1.3 M1174 443.5h1.3 M1209 443.5h1.3 M1244 443.5h1.3 M1314 443.5h1.3 M1349 443.5h1.3 M1384 443.5h1.3 M1419 443.5h1.3 M1489 443.5h1.3 M1524 443.5h1.3 M1559 443.5h1.3 M1594 443.5h1.3 M1664 443.5h1.3 M1699 443.5h1.3 M1734 443.5h1.3 M20 455.5h1.3 M90 455.5h1.3 M125 455.5h1.3 M160 455.5h1.3 M195 455.5h1.3 M265 455.5h1.3 M300 455.5h1.3 M335 455.5h1.3 M370 455.5h1.3 M440 455.5h1.3 M475 455.5h1.3 M510 455.5h1.3 M545 455.5h1.3 M615 455.5h1.3 M650 455.5h1.3 M685 455.5h1.3 M720 455.5h1.3 M789 455.5h1.3 M824 455.5h1.3 M859 455.5h1.3 M894 455.5h1.3 M964 455.5h1.3 M999 455.5h1.3 M1034 455.5h1.3 M1069 455.5h1.3 M1139 455.5h1.3 M1174 455.5h1.3 M1209 455.5h1.3 M1244 455.5h1.3 M1314 455.5h1.3 M1349 455.5h1.3 M1384 455.5h1.3 M1419 455.5h1.3 M1489 455.5h1.3 M1524 455.5h1.3 M1559 455.5h1.3 M1594 455.5h1.3 M1664 455.5h1.3 M1699 455.5h1.3 M1734 455.5h1.3 M20 466.5h1.3 M90 466.5h1.3 M125 466.5h1.3 M160 466.5h1.3 M195 466.5h1.3 M265 466.5h1.3 M300 466.5h1.3 M335 466.5h1.3 M370 466.5h1.3 M440 466.5h1.3 M475 466.5h1.3 M510 466.5h1.3 M545 466.5h1.3 M615 466.5h1.3 M650 466.5h1.3 M685 466.5h1.3 M720 466.5h1.3 M789 466.5h1.3 M824 466.5h1.3 M859 466.5h1.3 M894 466.5h1.3 M964 466.5h1.3 M999 466.5h1.3 M1034 466.5h1.3 M1069 466.5h1.3 M1139 466.5h1.3 M1174 466.5h1.3 M1209 466.5h1.3 M1244 466.5h1.3 M1314 466.5h1.3 M1349 466.5h1.3 M1384 466.5h1.3 M1419 466.5h1.3 M1489 466.5h1.3 M1524 466.5h1.3 M1559 466.5h1.3 M1594 466.5h1.3 M1664 466.5h1.3 M1699 466.5h1.3 M1734 466.5h1.3 M20 478.5h1.3 M90 478.5h1.3 M125 478.5h1.3 M160 478.5h1.3 M195 478.5h1.3 M265 478.5h1.3 M300 478.5h1.3 M335 478.5h1.3 M370 478.5h1.3 M440 478.5h1.3 M475 478.5h1.3 M510 478.5h1.3 M545 478.5h1.3 M615 478.5h1.3 M650 478.5h1.3 M685 478.5h1.3 M720 478.5h1.3 M789 478.5h1.3 M824 478.5h1.3 M859 478.5h1.3 M894 478.5h1.3 M964 478.5h1.3 M999 478.5h1.3 M1034 478.5h1.3 M1069 478.5h1.3 M1139 478.5h1.3 M1174 478.5h1.3 M1209 478.5h1.3 M1244 478.5h1.3 M1314 478.5h1.3 M1349 478.5h1.3 M1384 478.5h1.3 M1419 478.5h1.3 M1489 478.5h1.3 M1524 478.5h1.3 M1559 478.5h1.3 M1594 478.5h1.3 M1664 478.5h1.3 M1699 478.5h1.3 M1734 478.5h1.3 M20 489.5h1.3 M90 489.5h1.3 M125 489.5h1.3 M160 489.5h1.3 M195 489.5h1.3 M265 489.5h1.3 M300 489.5h1.3 M335 489.5h1.3 M370 489.5h1.3 M440 489.5h1.3 M475 489.5h1.3 M510 489.5h1.3 M545 489.5h1.3 M615 489.5h1.3 M650 489.5h1.3 M685 489.5h1.3 M720 489.5h1.3 M789 489.5h1.3 M824 489.5h1.3 M859 489.5h1.3 M894 489.5h1.3 M964 489.5h1.3 M999 489.5h1.3 M1034 489.5h1.3 M1069 489.5h1.3 M1139 489.5h1.3 M1174 489.5h1.3 M1209 489.5h1.3 M1244 489.5h1.3 M1314 489.5h1.3 M1349 489.5h1.3 M1384 489.5h1.3 M1419 489.5h1.3 M1489 489.5h1.3 M1524 489.5h1.3 M1559 489.5h1.3 M1594 489.5h1.3 M1664 489.5h1.3 M1699 489.5h1.3 M1734 489.5h1.3 M20 501.5h1.3 M90 501.5h1.3 M125 501.5h1.3 M160 501.5h1.3 M195 501.5h1.3 M265 501.5h1.3 M300 501.5h1.3 M335 501.5h1.3 M370 501.5h1.3 M440 501.5h1.3 M475 501.5h1.3 M510 501.5h1.3 M545 501.5h1.3 M615 501.5h1.3 M650 501.5h1.3 M685 501.5h1.3 M720 501.5h1.3 M789 501.5h1.3 M824 501.5h1.3 M859 501.5h1.3 M894 501.5h1.3 M964 501.5h1.3 M999 501.5h1.3 M1034 501.5h1.3 M1069 501.5h1.3 M1139 501.5h1.3 M1174 501.5h1.3 M1209 501.5h1.3 M1244 501.5h1.3 M1314 501.5h1.3 M1349 501.5h1.3 M1384 501.5h1.3 M1419 501.5h1.3 M1489 501.5h1.3 M1524 501.5h1.3 M1559 501.5h1.3 M1594 501.5h1.3 M1664 501.5h1.3 M1699 501.5h1.3 M1734 501.5h1.3 M20 512.5h1.3 M90 512.5h1.3 M125 512.5h1.3 M160 512.5h1.3 M195 512.5h1.3 M265 512.5h1.3 M300 512.5h1.3 M335 512.5h1.3 M370 512.5h1.3 M440 512.5h1.3 M475 512.5h1.3 M510 512.5h1.3 M545 512.5h1.3 M615 512.5h1.3 M650 512.5h1.3 M685 512.5h1.3 M720 512.5h1.3 M789 512.5h1.3 M824 512.5h1.3 M859 512.5h1.3 M894 512.5h1.3 M964 512.5h1.3 M999 512.5h1.3 M1034 512.5h1.3 M1069 512.5h1.3 M1139 512.5h1.3 M1174 512.5h1.3 M1209 512.5h1.3 M1244 512.5h1.3 M1314 512.5h1.3 M1349 512.5h1.3 M1384 512.5h1.3 M1419 512.5h1.3 M1489 512.5h1.3 M1524 512.5h1.3 M1559 512.5h1.3 M1594 512.5h1.3 M1664 512.5h1.3 M1699 512.5h1.3 M1734 512.5h1.3 M20 526.5h1.3 M90 526.5h1.3 M125 526.5h1.3 M160 526.5h1.3 M195 526.5h1.3 M265 526.5h1.3 M300 526.5h1.3 M335 526.5h1.3 M370 526.5h1.3 M440 526.5h1.3 M475 526.5h1.3 M510 526.5h1.3 M545 526.5h1.3 M615 526.5h1.3 M650 526.5h1.3 M685 526.5h1.3 M720 526.5h1.3 M789 526.5h1.3 M824 526.5h1.3 M859 526.5h1.3 M894 526.5h1.3 M964 526.5h1.3 M999 526.5h1.3 M1034 526.5h1.3 M1069 526.5h1.3 M1139 526.5h1.3 M1174 526.5h1.3 M1209 526.5h1.3 M1244 526.5h1.3 M1314 526.5h1.3 M1349 526.5h1.3 M1384 526.5h1.3 M1419 526.5h1.3 M1489 526.5h1.3 M1524 526.5h1.3 M1559 526.5h1.3 M1594 526.5h1.3 M1664 526.5h1.3 M1699 526.5h1.3 M1734 526.5h1.3 M20 537.5h1.3 M90 537.5h1.3 M125 537.5h1.3 M160 537.5h1.3 M195 537.5h1.3 M265 537.5h1.3 M300 537.5h1.3 M335 537.5h1.3 M370 537.5h1.3 M440 537.5h1.3 M475 537.5h1.3 M510 537.5h1.3 M545 537.5h1.3 M615 537.5h1.3 M650 537.5h1.3 M685 537.5h1.3 M720 537.5h1.3 M789 537.5h1.3 M824 537.5h1.3 M859 537.5h1.3 M894 537.5h1.3 M964 537.5h1.3 M999 537.5h1.3 M1034 537.5h1.3 M1069 537.5h1.3 M1139 537.5h1.3 M1174 537.5h1.3 M1209 537.5h1.3 M1244 537.5h1.3 M1314 537.5h1.3 M1349 537.5h1.3 M1384 537.5h1.3 M1419 537.5h1.3 M1489 537.5h1.3 M1524 537.5h1.3 M1559 537.5h1.3 M1594 537.5h1.3 M1664 537.5h1.3 M1699 537.5h1.3 M1734 537.5h1.3 M20 549.5h1.3 M90 549.5h1.3 M125 549.5h1.3 M160 549.5h1.3 M195 549.5h1.3 M265 549.5h1.3 M300 549.5h1.3 M335 549.5h1.3 M370 549.5h1.3 M440 549.5h1.3 M475 549.5h1.3 M510 549.5h1.3 M545 549.5h1.3 M615 549.5h1.3 M650 549.5h1.3 M685 549.5h1.3 M720 549.5h1.3 M789 549.5h1.3 M824 549.5h1.3 M859 549.5h1.3 M894 549.5h1.3 M964 549.5h1.3 M999 549.5h1.3 M1034 549.5h1.3 M1069 549.5h1.3 M1139 549.5h1.3 M1174 549.5h1.3 M1209 549.5h1.3 M1244 549.5h1.3 M1314 549.5h1.3 M1349 549.5h1.3 M1384 549.5h1.3 M1419 549.5h1.3 M1489 549.5h1.3 M1524 549.5h1.3 M1559 549.5h1.3 M1594 549.5h1.3 M1664 549.5h1.3 M1699 549.5h1.3 M1734 549.5h1.3 M20 560.5h1.3 M90 560.5h1.3 M125 560.5h1.3 M160 560.5h1.3 M195 560.5h1.3 M265 560.5h1.3 M300 560.5h1.3 M335 560.5h1.3 M370 560.5h1.3 M440 560.5h1.3 M475 560.5h1.3 M510 560.5h1.3 M545 560.5h1.3 M615 560.5h1.3 M650 560.5h1.3 M685 560.5h1.3 M720 560.5h1.3 M789 560.5h1.3 M824 560.5h1.3 M859 560.5h1.3 M894 560.5h1.3 M964 560.5h1.3 M999 560.5h1.3 M1034 560.5h1.3 M1069 560.5h1.3 M1139 560.5h1.3 M1174 560.5h1.3 M1209 560.5h1.3 M1244 560.5h1.3 M1314 560.5h1.3 M1349 560.5h1.3 M1384 560.5h1.3 M1419 560.5h1.3 M1489 560.5h1.3 M1524 560.5h1.3 M1559 560.5h1.3 M1594 560.5h1.3 M1664 560.5h1.3 M1699 560.5h1.3 M1734 560.5h1.3 M20 572.5h1.3 M90 572.5h1.3 M125 572.5h1.3 M160 572.5h1.3 M195 572.5h1.3 M265 572.5h1.3 M300 572.5h1.3 M335 572.5h1.3 M370 572.5h1.3 M440 572.5h1.3 M475 572.5h1.3 M510 572.5h1.3 M545 572.5h1.3 M615 572.5h1.3 M650 572.5h1.3 M685 572.5h1.3 M720 572.5h1.3 M789 572.5h1.3 M824 572.5h1.3 M859 572.5h1.3 M894 572.5h1.3 M964 572.5h1.3 M999 572.5h1.3 M1034 572.5h1.3 M1069 572.5h1.3 M1139 572.5h1.3 M1174 572.5h1.3 M1209 572.5h1.3 M1244 572.5h1.3 M1314 572.5h1.3 M1349 572.5h1.3 M1384 572.5h1.3 M1419 572.5h1.3 M1489 572.5h1.3 M1524 572.5h1.3 M1559 572.5h1.3 M1594 572.5h1.3 M1664 572.5h1.3 M1699 572.5h1.3 M1734 572.5h1.3 M20 583.5h1.3 M90 583.5h1.3 M125 583.5h1.3 M160 583.5h1.3 M195 583.5h1.3 M265 583.5h1.3 M300 583.5h1.3 M335 583.5h1.3 M370 583.5h1.3 M440 583.5h1.3 M475 583.5h1.3 M510 583.5h1.3 M545 583.5h1.3 M615 583.5h1.3 M650 583.5h1.3 M685 583.5h1.3 M720 583.5h1.3 M789 583.5h1.3 M824 583.5h1.3 M859 583.5h1.3 M894 583.5h1.3 M964 583.5h1.3 M999 583.5h1.3 M1034 583.5h1.3 M1069 583.5h1.3 M1139 583.5h1.3 M1174 583.5h1.3 M1209 583.5h1.3 M1244 583.5h1.3 M1314 583.5h1.3 M1349 583.5h1.3 M1384 583.5h1.3 M1419 583.5h1.3 M1489 583.5h1.3 M1524 583.5h1.3 M1559 583.5h1.3 M1594 583.5h1.3 M1664 583.5h1.3 M1699 583.5h1.3 M1734 583.5h1.3 M20 595.5h1.3 M90 595.5h1.3 M125 595.5h1.3 M160 595.5h1.3 M195 595.5h1.3 M265 595.5h1.3 M300 595.5h1.3 M335 595.5h1.3 M370 595.5h1.3 M440 595.5h1.3 M475 595.5h1.3 M510 595.5h1.3 M545 595.5h1.3 M615 595.5h1.3 M650 595.5h1.3 M685 595.5h1.3 M720 595.5h1.3 M789 595.5h1.3 M824 595.5h1.3 M859 595.5h1.3 M894 595.5h1.3 M964 595.5h1.3 M999 595.5h1.3 M1034 595.5h1.3 M1069 595.5h1.3 M1139 595.5h1.3 M1174 595.5h1.3 M1209 595.5h1.3 M1244 595.5h1.3 M1314 595.5h1.3 M1349 595.5h1.3 M1384 595.5h1.3 M1419 595.5h1.3 M1489 595.5h1.3 M1524 595.5h1.3 M1559 595.5h1.3 M1594 595.5h1.3 M1664 595.5h1.3 M1699 595.5h1.3 M1734 595.5h1.3 M20 606.5h1.3 M90 606.5h1.3 M125 606.5h1.3 M160 606.5h1.3 M195 606.5h1.3 M265 606.5h1.3 M300 606.5h1.3 M335 606.5h1.3 M370 606.5h1.3 M440 606.5h1.3 M475 606.5h1.3 M510 606.5h1.3 M545 606.5h1.3 M615 606.5h1.3 M650 606.5h1.3 M685 606.5h1.3 M720 606.5h1.3 M789 606.5h1.3 M824 606.5h1.3 M859 606.5h1.3 M894 606.5h1.3 M964 606.5h1.3 M999 606.5h1.3 M1034 606.5h1.3 M1069 606.5h1.3 M1139 606.5h1.3 M1174 606.5h1.3 M1209 606.5h1.3 M1244 606.5h1.3 M1314 606.5h1.3 M1349 606.5h1.3 M1384 606.5h1.3 M1419 606.5h1.3 M1489 606.5h1.3 M1524 606.5h1.3 M1559 606.5h1.3 M1594 606.5h1.3 M1664 606.5h1.3 M1699 606.5h1.3 M1734 606.5h1.3 M20 618.5h1.3 M90 618.5h1.3 M125 618.5h1.3 M160 618.5h1.3 M195 618.5h1.3 M265 618.5h1.3 M300 618.5h1.3 M335 618.5h1.3 M370 618.5h1.3 M440 618.5h1.3 M475 618.5h1.3 M510 618.5h1.3 M545 618.5h1.3 M615 618.5h1.3 M650 618.5h1.3 M685 618.5h1.3 M720 618.5h1.3 M789 618.5h1.3 M824 618.5h1.3 M859 618.5h1.3 M894 618.5h1.3 M964 618.5h1.3 M999 618.5h1.3 M1034 618.5h1.3 M1069 618.5h1.3 M1139 618.5h1.3 M1174 618.5h1.3 M1209 618.5h1.3 M1244 618.5h1.3 M1314 618.5h1.3 M1349 618.5h1.3 M1384 618.5h1.3 M1419 618.5h1.3 M1489 618.5h1.3 M1524 618.5h1.3 M1559 618.5h1.3 M1594 618.5h1.3 M1664 618.5h1.3 M1699 618.5h1.3 M1734 618.5h1.3 M20 629.5h1.3 M90 629.5h1.3 M125 629.5h1.3 M160 629.5h1.3 M195 629.5h1.3 M265 629.5h1.3 M300 629.5h1.3 M335 629.5h1.3 M370 629.5h1.3 M440 629.5h1.3 M475 629.5h1.3 M510 629.5h1.3 M545 629.5h1.3 M615 629.5h1.3 M650 629.5h1.3 M685 629.5h1.3 M720 629.5h1.3 M789 629.5h1.3 M824 629.5h1.3 M859 629.5h1.3 M894 629.5h1.3 M964 629.5h1.3 M999 629.5h1.3 M1034 629.5h1.3 M1069 629.5h1.3 M1139 629.5h1.3 M1174 629.5h1.3 M1209 629.5h1.3 M1244 629.5h1.3 M1314 629.5h1.3 M1349 629.5h1.3 M1384 629.5h1.3 M1419 629.5h1.3 M1489 629.5h1.3 M1524 629.5h1.3 M1559 629.5h1.3 M1594 629.5h1.3 M1664 629.5h1.3 M1699 629.5h1.3 M1734 629.5h1.3 M20 643.5h1.3 M90 643.5h1.3 M125 643.5h1.3 M160 643.5h1.3 M195 643.5h1.3 M265 643.5h1.3 M300 643.5h1.3 M335 643.5h1.3 M370 643.5h1.3 M440 643.5h1.3 M475 643.5h1.3 M510 643.5h1.3 M545 643.5h1.3 M615 643.5h1.3 M650 643.5h1.3 M685 643.5h1.3 M720 643.5h1.3 M789 643.5h1.3 M824 643.5h1.3 M859 643.5h1.3 M894 643.5h1.3 M964 643.5h1.3 M999 643.5h1.3 M1034 643.5h1.3 M1069 643.5h1.3 M1139 643.5h1.3 M1174 643.5h1.3 M1209 643.5h1.3 M1244 643.5h1.3 M1314 643.5h1.3 M1349 643.5h1.3 M1384 643.5h1.3 M1419 643.5h1.3 M1489 643.5h1.3 M1524 643.5h1.3 M1559 643.5h1.3 M1594 643.5h1.3 M1664 643.5h1.3 M1699 643.5h1.3 M1734 643.5h1.3 M20 654.5h1.3 M90 654.5h1.3 M125 654.5h1.3 M160 654.5h1.3 M195 654.5h1.3 M265 654.5h1.3 M300 654.5h1.3 M335 654.5h1.3 M370 654.5h1.3 M440 654.5h1.3 M475 654.5h1.3 M510 654.5h1.3 M545 654.5h1.3 M615 654.5h1.3 M650 654.5h1.3 M685 654.5h1.3 M720 654.5h1.3 M789 654.5h1.3 M824 654.5h1.3 M859 654.5h1.3 M894 654.5h1.3 M964 654.5h1.3 M999 654.5h1.3 M1034 654.5h1.3 M1069 654.5h1.3 M1139 654.5h1.3 M1174 654.5h1.3 M1209 654.5h1.3 M1244 654.5h1.3 M1314 654.5h1.3 M1349 654.5h1.3 M1384 654.5h1.3 M1419 654.5h1.3 M1489 654.5h1.3 M1524 654.5h1.3 M1559 654.5h1.3 M1594 654.5h1.3 M1664 654.5h1.3 M1699 654.5h1.3 M1734 654.5h1.3 M20 666.5h1.3 M90 666.5h1.3 M125 666.5h1.3 M160 666.5h1.3 M195 666.5h1.3 M265 666.5h1.3 M300 666.5h1.3 M335 666.5h1.3 M370 666.5h1.3 M440 666.5h1.3 M475 666.5h1.3 M510 666.5h1.3 M545 666.5h1.3 M615 666.5h1.3 M650 666.5h1.3 M685 666.5h1.3 M720 666.5h1.3 M789 666.5h1.3 M824 666.5h1.3 M859 666.5h1.3 M894 666.5h1.3 M964 666.5h1.3 M999 666.5h1.3 M1034 666.5h1.3 M1069 666.5h1.3 M1139 666.5h1.3 M1174 666.5h1.3 M1209 666.5h1.3 M1244 666.5h1.3 M1314 666.5h1.3 M1349 666.5h1.3 M1384 666.5h1.3 M1419 666.5h1.3 M1489 666.5h1.3 M1524 666.5h1.3 M1559 666.5h1.3 M1594 666.5h1.3 M1664 666.5h1.3 M1699 666.5h1.3 M1734 666.5h1.3 M20 677.5h1.3 M90 677.5h1.3 M125 677.5h1.3 M160 677.5h1.3 M195 677.5h1.3 M265 677.5h1.3 M300 677.5h1.3 M335 677.5h1.3 M370 677.5h1.3 M440 677.5h1.3 M475 677.5h1.3 M510 677.5h1.3 M545 677.5h1.3 M615 677.5h1.3 M650 677.5h1.3 M685 677.5h1.3 M720 677.5h1.3 M789 677.5h1.3 M824 677.5h1.3 M859 677.5h1.3 M894 677.5h1.3 M964 677.5h1.3 M999 677.5h1.3 M1034 677.5h1.3 M1069 677.5h1.3 M1139 677.5h1.3 M1174 677.5h1.3 M1209 677.5h1.3 M1244 677.5h1.3 M1314 677.5h1.3 M1349 677.5h1.3 M1384 677.5h1.3 M1419 677.5h1.3 M1489 677.5h1.3 M1524 677.5h1.3 M1559 677.5h1.3 M1594 677.5h1.3 M1664 677.5h1.3 M1699 677.5h1.3 M1734 677.5h1.3 M20 689.5h1.3 M90 689.5h1.3 M125 689.5h1.3 M160 689.5h1.3 M195 689.5h1.3 M265 689.5h1.3 M300 689.5h1.3 M335 689.5h1.3 M370 689.5h1.3 M440 689.5h1.3 M475 689.5h1.3 M510 689.5h1.3 M545 689.5h1.3 M615 689.5h1.3 M650 689.5h1.3 M685 689.5h1.3 M720 689.5h1.3 M789 689.5h1.3 M824 689.5h1.3 M859 689.5h1.3 M894 689.5h1.3 M964 689.5h1.3 M999 689.5h1.3 M1034 689.5h1.3 M1069 689.5h1.3 M1139 689.5h1.3 M1174 689.5h1.3 M1209 689.5h1.3 M1244 689.5h1.3 M1314 689.5h1.3 M1349 689.5h1.3 M1384 689.5h1.3 M1419 689.5h1.3 M1489 689.5h1.3 M1524 689.5h1.3 M1559 689.5h1.3 M1594 689.5h1.3 M1664 689.5h1.3 M1699 689.5h1.3 M1734 689.5h1.3 M20 700.5h1.3 M90 700.5h1.3 M125 700.5h1.3 M160 700.5h1.3 M195 700.5h1.3 M265 700.5h1.3 M300 700.5h1.3 M335 700.5h1.3 M370 700.5h1.3 M440 700.5h1.3 M475 700.5h1.3 M510 700.5h1.3 M545 700.5h1.3 M615 700.5h1.3 M650 700.5h1.3 M685 700.5h1.3 M720 700.5h1.3 M789 700.5h1.3 M824 700.5h1.3 M859 700.5h1.3 M894 700.5h1.3 M964 700.5h1.3 M999 700.5h1.3 M1034 700.5h1.3 M1069 700.5h1.3 M1139 700.5h1.3 M1174 700.5h1.3 M1209 700.5h1.3 M1244 700.5h1.3 M1314 700.5h1.3 M1349 700.5h1.3 M1384 700.5h1.3 M1419 700.5h1.3 M1489 700.5h1.3 M1524 700.5h1.3 M1559 700.5h1.3 M1594 700.5h1.3 M1664 700.5h1.3 M1699 700.5h1.3 M1734 700.5h1.3 M20 712.5h1.3 M90 712.5h1.3 M125 712.5h1.3 M160 712.5h1.3 M195 712.5h1.3 M265 712.5h1.3 M300 712.5h1.3 M335 712.5h1.3 M370 712.5h1.3 M440 712.5h1.3 M475 712.5h1.3 M510 712.5h1.3 M545 712.5h1.3 M615 712.5h1.3 M650 712.5h1.3 M685 712.5h1.3 M720 712.5h1.3 M789 712.5h1.3 M824 712.5h1.3 M859 712.5h1.3 M894 712.5h1.3 M964 712.5h1.3 M999 712.5h1.3 M1034 712.5h1.3 M1069 712.5h1.3 M1139 712.5h1.3 M1174 712.5h1.3 M1209 712.5h1.3 M1244 712.5h1.3 M1314 712.5h1.3 M1349 712.5h1.3 M1384 712.5h1.3 M1419 712.5h1.3 M1489 712.5h1.3 M1524 712.5h1.3 M1559 712.5h1.3 M1594 712.5h1.3 M1664 712.5h1.3 M1699 712.5h1.3 M1734 712.5h1.3 M20 723.5h1.3 M90 723.5h1.3 M125 723.5h1.3 M160 723.5h1.3 M195 723.5h1.3 M265 723.5h1.3 M300 723.5h1.3 M335 723.5h1.3 M370 723.5h1.3 M440 723.5h1.3 M475 723.5h1.3 M510 723.5h1.3 M545 723.5h1.3 M615 723.5h1.3 M650 723.5h1.3 M685 723.5h1.3 M720 723.5h1.3 M789 723.5h1.3 M824 723.5h1.3 M859 723.5h1.3 M894 723.5h1.3 M964 723.5h1.3 M999 723.5h1.3 M1034 723.5h1.3 M1069 723.5h1.3 M1139 723.5h1.3 M1174 723.5h1.3 M1209 723.5h1.3 M1244 723.5h1.3 M1314 723.5h1.3 M1349 723.5h1.3 M1384 723.5h1.3 M1419 723.5h1.3 M1489 723.5h1.3 M1524 723.5h1.3 M1559 723.5h1.3 M1594 723.5h1.3 M1664 723.5h1.3 M1699 723.5h1.3 M1734 723.5h1.3 M20 735.5h1.3 M90 735.5h1.3 M125 735.5h1.3 M160 735.5h1.3 M195 735.5h1.3 M265 735.5h1.3 M300 735.5h1.3 M335 735.5h1.3 M370 735.5h1.3 M440 735.5h1.3 M475 735.5h1.3 M510 735.5h1.3 M545 735.5h1.3 M615 735.5h1.3 M650 735.5h1.3 M685 735.5h1.3 M720 735.5h1.3 M789 735.5h1.3 M824 735.5h1.3 M859 735.5h1.3 M894 735.5h1.3 M964 735.5h1.3 M999 735.5h1.3 M1034 735.5h1.3 M1069 735.5h1.3 M1139 735.5h1.3 M1174 735.5h1.3 M1209 735.5h1.3 M1244 735.5h1.3 M1314 735.5h1.3 M1349 735.5h1.3 M1384 735.5h1.3 M1419 735.5h1.3 M1489 735.5h1.3 M1524 735.5h1.3 M1559 735.5h1.3 M1594 735.5h1.3 M1664 735.5h1.3 M1699 735.5h1.3 M1734 735.5h1.3 M20 746.5h1.3 M90 746.5h1.3 M125 746.5h1.3 M160 746.5h1.3 M195 746.5h1.3 M265 746.5h1.3 M300 746.5h1.3 M335 746.5h1.3 M370 746.5h1.3 M440 746.5h1.3 M475 746.5h1.3 M510 746.5h1.3 M545 746.5h1.3 M615 746.5h1.3 M650 746.5h1.3 M685 746.5h1.3 M720 746.5h1.3 M789 746.5h1.3 M824 746.5h1.3 M859 746.5h1.3 M894 746.5h1.3 M964 746.5h1.3 M999 746.5h1.3 M1034 746.5h1.3 M1069 746.5h1.3 M1139 746.5h1.3 M1174 746.5h1.3 M1209 746.5h1.3 M1244 746.5h1.3 M1314 746.5h1.3 M1349 746.5h1.3 M1384 746.5h1.3 M1419 746.5h1.3 M1489 746.5h1.3 M1524 746.5h1.3 M1559 746.5h1.3 M1594 746.5h1.3 M1664 746.5h1.3 M1699 746.5h1.3 M1734 746.5h1.3 M20 760.5h1.3 M90 760.5h1.3 M125 760.5h1.3 M160 760.5h1.3 M195 760.5h1.3 M265 760.5h1.3 M300 760.5h1.3 M335 760.5h1.3 M370 760.5h1.3 M440 760.5h1.3 M475 760.5h1.3 M510 760.5h1.3 M545 760.5h1.3 M615 760.5h1.3 M650 760.5h1.3 M685 760.5h1.3 M720 760.5h1.3 M789 760.5h1.3 M824 760.5h1.3 M859 760.5h1.3 M894 760.5h1.3 M964 760.5h1.3 M999 760.5h1.3 M1034 760.5h1.3 M1069 760.5h1.3 M1139 760.5h1.3 M1174 760.5h1.3 M1209 760.5h1.3 M1244 760.5h1.3 M1314 760.5h1.3 M1349 760.5h1.3 M1384 760.5h1.3 M1419 760.5h1.3 M1489 760.5h1.3 M1524 760.5h1.3 M1559 760.5h1.3 M1594 760.5h1.3 M1664 760.5h1.3 M1699 760.5h1.3 M1734 760.5h1.3 M20 771.5h1.3 M90 771.5h1.3 M125 771.5h1.3 M160 771.5h1.3 M195 771.5h1.3 M265 771.5h1.3 M300 771.5h1.3 M335 771.5h1.3 M370 771.5h1.3 M440 771.5h1.3 M475 771.5h1.3 M510 771.5h1.3 M545 771.5h1.3 M615 771.5h1.3 M650 771.5h1.3 M685 771.5h1.3 M720 771.5h1.3 M789 771.5h1.3 M824 771.5h1.3 M859 771.5h1.3 M894 771.5h1.3 M964 771.5h1.3 M999 771.5h1.3 M1034 771.5h1.3 M1069 771.5h1.3 M1139 771.5h1.3 M1174 771.5h1.3 M1209 771.5h1.3 M1244 771.5h1.3 M1314 771.5h1.3 M1349 771.5h1.3 M1384 771.5h1.3 M1419 771.5h1.3 M1489 771.5h1.3 M1524 771.5h1.3 M1559 771.5h1.3 M1594 771.5h1.3 M1664 771.5h1.3 M1699 771.5h1.3 M1734 771.5h1.3 M20 783.5h1.3 M90 783.5h1.3 M125 783.5h1.3 M160 783.5h1.3 M195 783.5h1.3 M265 783.5h1.3 M300 783.5h1.3 M335 783.5h1.3 M370 783.5h1.3 M440 783.5h1.3 M475 783.5h1.3 M510 783.5h1.3 M545 783.5h1.3 M615 783.5h1.3 M650 783.5h1.3 M685 783.5h1.3 M720 783.5h1.3 M789 783.5h1.3 M824 783.5h1.3 M859 783.5h1.3 M894 783.5h1.3 M964 783.5h1.3 M999 783.5h1.3 M1034 783.5h1.3 M1069 783.5h1.3 M1139 783.5h1.3 M1174 783.5h1.3 M1209 783.5h1.3 M1244 783.5h1.3 M1314 783.5h1.3 M1349 783.5h1.3 M1384 783.5h1.3 M1419 783.5h1.3 M1489 783.5h1.3 M1524 783.5h1.3 M1559 783.5h1.3 M1594 783.5h1.3 M1664 783.5h1.3 M1699 783.5h1.3 M1734 783.5h1.3 M20 794.5h1.3 M90 794.5h1.3 M125 794.5h1.3 M160 794.5h1.3 M195 794.5h1.3 M265 794.5h1.3 M300 794.5h1.3 M335 794.5h1.3 M370 794.5h1.3 M440 794.5h1.3 M475 794.5h1.3 M510 794.5h1.3 M545 794.5h1.3 M615 794.5h1.3 M650 794.5h1.3 M685 794.5h1.3 M720 794.5h1.3 M789 794.5h1.3 M824 794.5h1.3 M859 794.5h1.3 M894 794.5h1.3 M964 794.5h1.3 M999 794.5h1.3 M1034 794.5h1.3 M1069 794.5h1.3 M1139 794.5h1.3 M1174 794.5h1.3 M1209 794.5h1.3 M1244 794.5h1.3 M1314 794.5h1.3 M1349 794.5h1.3 M1384 794.5h1.3 M1419 794.5h1.3 M1489 794.5h1.3 M1524 794.5h1.3 M1559 794.5h1.3 M1594 794.5h1.3 M1664 794.5h1.3 M1699 794.5h1.3 M1734 794.5h1.3 M20 806.5h1.3 M90 806.5h1.3 M125 806.5h1.3 M160 806.5h1.3 M195 806.5h1.3 M265 806.5h1.3 M300 806.5h1.3 M335 806.5h1.3 M370 806.5h1.3 M440 806.5h1.3 M475 806.5h1.3 M510 806.5h1.3 M545 806.5h1.3 M615 806.5h1.3 M650 806.5h1.3 M685 806.5h1.3 M720 806.5h1.3 M789 806.5h1.3 M824 806.5h1.3 M859 806.5h1.3 M894 806.5h1.3 M964 806.5h1.3 M999 806.5h1.3 M1034 806.5h1.3 M1069 806.5h1.3 M1139 806.5h1.3 M1174 806.5h1.3 M1209 806.5h1.3 M1244 806.5h1.3 M1314 806.5h1.3 M1349 806.5h1.3 M1384 806.5h1.3 M1419 806.5h1.3 M1489 806.5h1.3 M1524 806.5h1.3 M1559 806.5h1.3 M1594 806.5h1.3 M1664 806.5h1.3 M1699 806.5h1.3 M1734 806.5h1.3 M20 817.5h1.3 M90 817.5h1.3 M125 817.5h1.3 M160 817.5h1.3 M195 817.5h1.3 M265 817.5h1.3 M300 817.5h1.3 M335 817.5h1.3 M370 817.5h1.3 M440 817.5h1.3 M475 817.5h1.3 M510 817.5h1.3 M545 817.5h1.3 M615 817.5h1.3 M650 817.5h1.3 M685 817.5h1.3 M720 817.5h1.3 M789 817.5h1.3 M824 817.5h1.3 M859 817.5h1.3 M894 817.5h1.3 M964 817.5h1.3 M999 817.5h1.3 M1034 817.5h1.3 M1069 817.5h1.3 M1139 817.5h1.3 M1174 817.5h1.3 M1209 817.5h1.3 M1244 817.5h1.3 M1314 817.5h1.3 M1349 817.5h1.3 M1384 817.5h1.3 M1419 817.5h1.3 M1489 817.5h1.3 M1524 817.5h1.3 M1559 817.5h1.3 M1594 817.5h1.3 M1664 817.5h1.3 M1699 817.5h1.3 M1734 817.5h1.3 M20 829.5h1.3 M90 829.5h1.3 M125 829.5h1.3 M160 829.5h1.3 M195 829.5h1.3 M265 829.5h1.3 M300 829.5h1.3 M335 829.5h1.3 M370 829.5h1.3 M440 829.5h1.3 M475 829.5h1.3 M510 829.5h1.3 M545 829.5h1.3 M615 829.5h1.3 M650 829.5h1.3 M685 829.5h1.3 M720 829.5h1.3 M789 829.5h1.3 M824 829.5h1.3 M859 829.5h1.3 M894 829.5h1.3 M964 829.5h1.3 M999 829.5h1.3 M1034 829.5h1.3 M1069 829.5h1.3 M1139 829.5h1.3 M1174 829.5h1.3 M1209 829.5h1.3 M1244 829.5h1.3 M1314 829.5h1.3 M1349 829.5h1.3 M1384 829.5h1.3 M1419 829.5h1.3 M1489 829.5h1.3 M1524 829.5h1.3 M1559 829.5h1.3 M1594 829.5h1.3 M1664 829.5h1.3 M1699 829.5h1.3 M1734 829.5h1.3 M20 840.5h1.3 M90 840.5h1.3 M125 840.5h1.3 M160 840.5h1.3 M195 840.5h1.3 M265 840.5h1.3 M300 840.5h1.3 M335 840.5h1.3 M370 840.5h1.3 M440 840.5h1.3 M475 840.5h1.3 M510 840.5h1.3 M545 840.5h1.3 M615 840.5h1.3 M650 840.5h1.3 M685 840.5h1.3 M720 840.5h1.3 M789 840.5h1.3 M824 840.5h1.3 M859 840.5h1.3 M894 840.5h1.3 M964 840.5h1.3 M999 840.5h1.3 M1034 840.5h1.3 M1069 840.5h1.3 M1139 840.5h1.3 M1174 840.5h1.3 M1209 840.5h1.3 M1244 840.5h1.3 M1314 840.5h1.3 M1349 840.5h1.3 M1384 840.5h1.3 M1419 840.5h1.3 M1489 840.5h1.3 M1524 840.5h1.3 M1559 840.5h1.3 M1594 840.5h1.3 M1664 840.5h1.3 M1699 840.5h1.3 M1734 840.5h1.3 M20 852.5h1.3 M90 852.5h1.3 M125 852.5h1.3 M160 852.5h1.3 M195 852.5h1.3 M265 852.5h1.3 M300 852.5h1.3 M335 852.5h1.3 M370 852.5h1.3 M440 852.5h1.3 M475 852.5h1.3 M510 852.5h1.3 M545 852.5h1.3 M615 852.5h1.3 M650 852.5h1.3 M685 852.5h1.3 M720 852.5h1.3 M789 852.5h1.3 M824 852.5h1.3 M859 852.5h1.3 M894 852.5h1.3 M964 852.5h1.3 M999 852.5h1.3 M1034 852.5h1.3 M1069 852.5h1.3 M1139 852.5h1.3 M1174 852.5h1.3 M1209 852.5h1.3 M1244 852.5h1.3 M1314 852.5h1.3 M1349 852.5h1.3 M1384 852.5h1.3 M1419 852.5h1.3 M1489 852.5h1.3 M1524 852.5h1.3 M1559 852.5h1.3 M1594 852.5h1.3 M1664 852.5h1.3 M1699 852.5h1.3 M1734 852.5h1.3 M20 863.5h1.3 M90 863.5h1.3 M125 863.5h1.3 M160 863.5h1.3 M195 863.5h1.3 M265 863.5h1.3 M300 863.5h1.3 M335 863.5h1.3 M370 863.5h1.3 M440 863.5h1.3 M475 863.5h1.3 M510 863.5h1.3 M545 863.5h1.3 M615 863.5h1.3 M650 863.5h1.3 M685 863.5h1.3 M720 863.5h1.3 M789 863.5h1.3 M824 863.5h1.3 M859 863.5h1.3 M894 863.5h1.3 M964 863.5h1.3 M999 863.5h1.3 M1034 863.5h1.3 M1069 863.5h1.3 M1139 863.5h1.3 M1174 863.5h1.3 M1209 863.5h1.3 M1244 863.5h1.3 M1314 863.5h1.3 M1349 863.5h1.3 M1384 863.5h1.3 M1419 863.5h1.3 M1489 863.5h1.3 M1524 863.5h1.3 M1559 863.5h1.3 M1594 863.5h1.3 M1664 863.5h1.3 M1699 863.5h1.3 M1734 863.5h1.3 M20 886.5h1.3 M90 886.5h1.3 M125 886.5h1.3 M160 886.5h1.3 M195 886.5h1.3 M265 886.5h1.3 M300 886.5h1.3 M335 886.5h1.3 M370 886.5h1.3 M440 886.5h1.3 M475 886.5h1.3 M510 886.5h1.3 M545 886.5h1.3 M615 886.5h1.3 M650 886.5h1.3 M685 886.5h1.3 M720 886.5h1.3 M789 886.5h1.3 M824 886.5h1.3 M859 886.5h1.3 M894 886.5h1.3 M964 886.5h1.3 M999 886.5h1.3 M1034 886.5h1.3 M1069 886.5h1.3 M1139 886.5h1.3 M1174 886.5h1.3 M1209 886.5h1.3 M1244 886.5h1.3 M1314 886.5h1.3 M1349 886.5h1.3 M1384 886.5h1.3 M1419 886.5h1.3 M1489 886.5h1.3 M1524 886.5h1.3 M1559 886.5h1.3 M1594 886.5h1.3 M1664 886.5h1.3 M1699 886.5h1.3 M1734 886.5h1.3 M20 898.5h1.3 M90 898.5h1.3 M125 898.5h1.3 M160 898.5h1.3 M195 898.5h1.3 M265 898.5h1.3 M300 898.5h1.3 M335 898.5h1.3 M370 898.5h1.3 M440 898.5h1.3 M475 898.5h1.3 M510 898.5h1.3 M545 898.5h1.3 M615 898.5h1.3 M650 898.5h1.3 M685 898.5h1.3 M720 898.5h1.3 M789 898.5h1.3 M824 898.5h1.3 M859 898.5h1.3 M894 898.5h1.3 M964 898.5h1.3 M999 898.5h1.3 M1034 898.5h1.3 M1069 898.5h1.3 M1139 898.5h1.3 M1174 898.5h1.3 M1209 898.5h1.3 M1244 898.5h1.3 M1314 898.5h1.3 M1349 898.5h1.3 M1384 898.5h1.3 M1419 898.5h1.3 M1489 898.5h1.3 M1524 898.5h1.3 M1559 898.5h1.3 M1594 898.5h1.3 M1664 898.5h1.3 M1699 898.5h1.3 M1734 898.5h1.3 M20 909.5h1.3 M90 909.5h1.3 M125 909.5h1.3 M160 909.5h1.3 M195 909.5h1.3 M265 909.5h1.3 M300 909.5h1.3 M335 909.5h1.3 M370 909.5h1.3 M440 909.5h1.3 M475 909.5h1.3 M510 909.5h1.3 M545 909.5h1.3 M615 909.5h1.3 M650 909.5h1.3 M685 909.5h1.3 M720 909.5h1.3 M789 909.5h1.3 M824 909.5h1.3 M859 909.5h1.3 M894 909.5h1.3 M964 909.5h1.3 M999 909.5h1.3 M1034 909.5h1.3 M1069 909.5h1.3 M1139 909.5h1.3 M1174 909.5h1.3 M1209 909.5h1.3 M1244 909.5h1.3 M1314 909.5h1.3 M1349 909.5h1.3 M1384 909.5h1.3 M1419 909.5h1.3 M1489 909.5h1.3 M1524 909.5h1.3 M1559 909.5h1.3 M1594 909.5h1.3 M1664 909.5h1.3 M1699 909.5h1.3 M1734 909.5h1.3 M20 921.5h1.3 M90 921.5h1.3 M125 921.5h1.3 M160 921.5h1.3 M195 921.5h1.3 M265 921.5h1.3 M300 921.5h1.3 M335 921.5h1.3 M370 921.5h1.3 M440 921.5h1.3 M475 921.5h1.3 M510 921.5h1.3 M545 921.5h1.3 M615 921.5h1.3 M650 921.5h1.3 M685 921.5h1.3 M720 921.5h1.3 M789 921.5h1.3 M824 921.5h1.3 M859 921.5h1.3 M894 921.5h1.3 M964 921.5h1.3 M999 921.5h1.3 M1034 921.5h1.3 M1069 921.5h1.3 M1139 921.5h1.3 M1174 921.5h1.3 M1209 921.5h1.3 M1244 921.5h1.3 M1314 921.5h1.3 M1349 921.5h1.3 M1384 921.5h1.3 M1419 921.5h1.3 M1489 921.5h1.3 M1524 921.5h1.3 M1559 921.5h1.3 M1594 921.5h1.3 M1664 921.5h1.3 M1699 921.5h1.3 M1734 921.5h1.3 M20 932.5h1.3 M90 932.5h1.3 M125 932.5h1.3 M160 932.5h1.3 M195 932.5h1.3 M265 932.5h1.3 M300 932.5h1.3 M335 932.5h1.3 M370 932.5h1.3 M440 932.5h1.3 M475 932.5h1.3 M510 932.5h1.3 M545 932.5h1.3 M615 932.5h1.3 M650 932.5h1.3 M685 932.5h1.3 M720 932.5h1.3 M789 932.5h1.3 M824 932.5h1.3 M859 932.5h1.3 M894 932.5h1.3 M964 932.5h1.3 M999 932.5h1.3 M1034 932.5h1.3 M1069 932.5h1.3 M1139 932.5h1.3 M1174 932.5h1.3 M1209 932.5h1.3 M1244 932.5h1.3 M1314 932.5h1.3 M1349 932.5h1.3 M1384 932.5h1.3 M1419 932.5h1.3 M1489 932.5h1.3 M1524 932.5h1.3 M1559 932.5h1.3 M1594 932.5h1.3 M1664 932.5h1.3 M1699 932.5h1.3 M1734 932.5h1.3 M20 944.5h1.3 M90 944.5h1.3 M125 944.5h1.3 M160 944.5h1.3 M195 944.5h1.3 M265 944.5h1.3 M300 944.5h1.3 M335 944.5h1.3 M370 944.5h1.3 M440 944.5h1.3 M475 944.5h1.3 M510 944.5h1.3 M545 944.5h1.3 M615 944.5h1.3 M650 944.5h1.3 M685 944.5h1.3 M720 944.5h1.3 M789 944.5h1.3 M824 944.5h1.3 M859 944.5h1.3 M894 944.5h1.3 M964 944.5h1.3 M999 944.5h1.3 M1034 944.5h1.3 M1069 944.5h1.3 M1139 944.5h1.3 M1174 944.5h1.3 M1209 944.5h1.3 M1244 944.5h1.3 M1314 944.5h1.3 M1349 944.5h1.3 M1384 944.5h1.3 M1419 944.5h1.3 M1489 944.5h1.3 M1524 944.5h1.3 M1559 944.5h1.3 M1594 944.5h1.3 M1664 944.5h1.3 M1699 944.5h1.3 M1734 944.5h1.3 M20 955.5h1.3 M90 955.5h1.3 M125 955.5h1.3 M160 955.5h1.3 M195 955.5h1.3 M265 955.5h1.3 M300 955.5h1.3 M335 955.5h1.3 M370 955.5h1.3 M440 955.5h1.3 M475 955.5h1.3 M510 955.5h1.3 M545 955.5h1.3 M615 955.5h1.3 M650 955.5h1.3 M685 955.5h1.3 M720 955.5h1.3 M789 955.5h1.3 M824 955.5h1.3 M859 955.5h1.3 M894 955.5h1.3 M964 955.5h1.3 M999 955.5h1.3 M1034 955.5h1.3 M1069 955.5h1.3 M1139 955.5h1.3 M1174 955.5h1.3 M1209 955.5h1.3 M1244 955.5h1.3 M1314 955.5h1.3 M1349 955.5h1.3 M1384 955.5h1.3 M1419 955.5h1.3 M1489 955.5h1.3 M1524 955.5h1.3 M1559 955.5h1.3 M1594 955.5h1.3 M1664 955.5h1.3 M1699 955.5h1.3 M1734 955.5h1.3 M20 967.5h1.3 M90 967.5h1.3 M125 967.5h1.3 M160 967.5h1.3 M195 967.5h1.3 M265 967.5h1.3 M300 967.5h1.3 M335 967.5h1.3 M370 967.5h1.3 M440 967.5h1.3 M475 967.5h1.3 M510 967.5h1.3 M545 967.5h1.3 M615 967.5h1.3 M650 967.5h1.3 M685 967.5h1.3 M720 967.5h1.3 M789 967.5h1.3 M824 967.5h1.3 M859 967.5h1.3 M894 967.5h1.3 M964 967.5h1.3 M999 967.5h1.3 M1034 967.5h1.3 M1069 967.5h1.3 M1139 967.5h1.3 M1174 967.5h1.3 M1209 967.5h1.3 M1244 967.5h1.3 M1314 967.5h1.3 M1349 967.5h1.3 M1384 967.5h1.3 M1419 967.5h1.3 M1489 967.5h1.3 M1524 967.5h1.3 M1559 967.5h1.3 M1594 967.5h1.3 M1664 967.5h1.3 M1699 967.5h1.3 M1734 967.5h1.3 M20 978.5h1.3 M90 978.5h1.3 M125 978.5h1.3 M160 978.5h1.3 M195 978.5h1.3 M265 978.5h1.3 M300 978.5h1.3 M335 978.5h1.3 M370 978.5h1.3 M440 978.5h1.3 M475 978.5h1.3 M510 978.5h1.3 M545 978.5h1.3 M615 978.5h1.3 M650 978.5h1.3 M685 978.5h1.3 M720 978.5h1.3 M789 978.5h1.3 M824 978.5h1.3 M859 978.5h1.3 M894 978.5h1.3 M964 978.5h1.3 M999 978.5h1.3 M1034 978.5h1.3 M1069 978.5h1.3 M1139 978.5h1.3 M1174 978.5h1.3 M1209 978.5h1.3 M1244 978.5h1.3 M1314 978.5h1.3 M1349 978.5h1.3 M1384 978.5h1.3 M1419 978.5h1.3 M1489 978.5h1.3 M1524 978.5h1.3 M1559 978.5h1.3 M1594 978.5h1.3 M1664 978.5h1.3 M1699 978.5h1.3 M1734 978.5h1.3 M20 990.5h1.3 M90 990.5h1.3 M125 990.5h1.3 M160 990.5h1.3 M195 990.5h1.3 M265 990.5h1.3 M300 990.5h1.3 M335 990.5h1.3 M370 990.5h1.3 M440 990.5h1.3 M475 990.5h1.3 M510 990.5h1.3 M545 990.5h1.3 M615 990.5h1.3 M650 990.5h1.3 M685 990.5h1.3 M720 990.5h1.3 M789 990.5h1.3 M824 990.5h1.3 M859 990.5h1.3 M894 990.5h1.3 M964 990.5h1.3 M999 990.5h1.3 M1034 990.5h1.3 M1069 990.5h1.3 M1139 990.5h1.3 M1174 990.5h1.3 M1209 990.5h1.3 M1244 990.5h1.3 M1314 990.5h1.3 M1349 990.5h1.3 M1384 990.5h1.3 M1419 990.5h1.3 M1489 990.5h1.3 M1524 990.5h1.3 M1559 990.5h1.3 M1594 990.5h1.3 M1664 990.5h1.3 M1699 990.5h1.3 M1734 990.5h1.3" stroke="#4a4a4a" stroke-width="1.1"/>
<line x1="230.5" y1="58" x2="230.5" y2="993" stroke="#555" stroke-width="1" stroke-dasharray="1 1.3"/>
<line x1="405.5" y1="58" x2="405.5" y2="993" stroke="#555" stroke-width="1" stroke-dasharray="1 1.3"/>
<line x1="580.5" y1="58" x2="580.5" y2="993" stroke="#555" stroke-width="1" stroke-dasharray="1 1.3"/>
<line x1="754.5" y1="58" x2="754.5" y2="993" stroke="#555" stroke-width="1" stroke-dasharray="1 1.3"/>
<line x1="929.5" y1="58" x2="929.5" y2="993" stroke="#555" stroke-width="1" stroke-dasharray="1 1.3"/>
<line x1="1104.5" y1="58" x2="1104.5" y2="993" stroke="#555" stroke-width="1" stroke-dasharray="1 1.3"/>
<line x1="1279.5" y1="58" x2="1279.5" y2="993" stroke="#555" stroke-width="1" stroke-dasharray="1 1.3"/>
<line x1="1454.5" y1="58" x2="1454.5" y2="993" stroke="#555" stroke-width="1" stroke-dasharray="1 1.3"/>
<line x1="1629.5" y1="58" x2="1629.5" y2="993" stroke="#555" stroke-width="1" stroke-dasharray="1 1.3"/>
<line x1="55.5" y1="58" x2="55.5" y2="993" stroke="#333" stroke-width="1" stroke-dasharray="4 4"/>
<line x1="3" y1="161.5" x2="1751" y2="161.5" stroke="#444" stroke-width="1" stroke-dasharray="5 5"/>
<line x1="3" y1="246.5" x2="1751" y2="246.5" stroke="#444" stroke-width="1" stroke-dasharray="5 5"/>
<line x1="3" y1="349.5" x2="1751" y2="349.5" stroke="#444" stroke-width="1" stroke-dasharray="5 5"/>
<line x1="3" y1="478.5" x2="1751" y2="478.5" stroke="#444" stroke-width="1" stroke-dasharray="5 5"/>
<line x1="3" y1="863.5" x2="1751" y2="863.5" stroke="#444" stroke-width="1" stroke-dasharray="5 5"/>
<line x1="3" y1="979.5" x2="1751" y2="979.5" stroke="#444" stroke-width="1" stroke-dasharray="5 5"/>
<line x1="42" y1="583.5" x2="1751" y2="583.5" stroke="#f0962a" stroke-width="1.3"/>
<line x1="3" y1="583.5" x2="1751" y2="583.5" stroke="#444" stroke-width="1" stroke-dasharray="5 5" stroke-dashoffset="2"/>
<rect x="3" y="173" width="1748" height="2" fill="#585858"/>
<rect x="3" y="290" width="1748" height="2" fill="#585858"/>
<rect x="3" y="407" width="1748" height="2" fill="#585858"/>
<rect x="3" y="524" width="1748" height="2" fill="#585858"/>
<rect x="3" y="641" width="1748" height="2" fill="#585858"/>
<rect x="3" y="758" width="1748" height="2" fill="#585858"/>
<rect x="3" y="875" width="1748" height="2" fill="#585858"/>
<rect x="1710.4" y="86" width="40.6" height="13" fill="#fff"/>
<rect x="1710.4" y="109" width="40.6" height="13" fill="#fff"/>
<rect x="1710.4" y="132" width="40.6" height="13" fill="#fff"/>
<rect x="1717.9" y="155" width="33.1" height="13" fill="#fff"/>
<rect x="1699.3" y="183" width="51.7" height="13" fill="#fff"/>
<rect x="1691.8" y="206" width="59.2" height="13" fill="#fff"/>
<rect x="1691.8" y="229" width="59.2" height="13" fill="#fff"/>
<rect x="1687.4" y="252" width="63.6" height="13" fill="#fff"/>
<rect x="1687.4" y="275" width="63.6" height="13" fill="#fff"/>
<rect x="1699.3" y="297" width="51.7" height="13" fill="#fff"/>
<rect x="1691.8" y="320" width="59.2" height="13" fill="#fff"/>
<rect x="1717.9" y="343" width="33.1" height="13" fill="#fff"/>
<rect x="1687.4" y="366" width="63.6" height="13" fill="#fff"/>
<rect x="1694.8" y="389" width="56.2" height="13" fill="#fff"/>
<rect x="1717.9" y="414" width="33.1" height="13" fill="#fff"/>
<rect x="1691.8" y="437" width="59.2" height="13" fill="#fff"/>
<rect x="1691.8" y="460" width="59.2" height="13" fill="#fff"/>
<rect x="1687.4" y="483" width="63.6" height="13" fill="#fff"/>
<rect x="1687.4" y="506" width="63.6" height="13" fill="#fff"/>
<rect x="1717.9" y="531" width="33.1" height="13" fill="#fff"/>
<rect x="1717.9" y="554" width="33.1" height="13" fill="#fff"/>
<rect x="1717.9" y="577" width="33.1" height="13" fill="#fff"/>
<rect x="1713.4" y="600" width="37.6" height="13" fill="#fff"/>
<rect x="1713.4" y="623" width="37.6" height="13" fill="#fff"/>
<rect x="1717.9" y="648" width="33.1" height="13" fill="#fff"/>
<rect x="1699.3" y="671" width="51.7" height="13" fill="#fff"/>
<rect x="1717.9" y="694" width="33.1" height="13" fill="#fff"/>
<rect x="1699.3" y="717" width="51.7" height="13" fill="#fff"/>
<rect x="1717.9" y="740" width="33.1" height="13" fill="#fff"/>
<rect x="1666.5" y="765" width="84.5" height="13" fill="#fff"/>
<rect x="1666.5" y="788" width="84.5" height="13" fill="#fff"/>
<rect x="1666.5" y="811" width="84.5" height="13" fill="#fff"/>
<rect x="1666.5" y="834" width="84.5" height="13" fill="#fff"/>
<rect x="1718.9" y="857" width="32.1" height="13" fill="#fff"/>
<rect x="1662.8" y="880" width="88.2" height="13" fill="#fff"/>
<rect x="1662.8" y="903" width="88.2" height="13" fill="#fff"/>
<rect x="1662.8" y="926" width="88.2" height="13" fill="#fff"/>
<rect x="1662.8" y="949" width="88.2" height="13" fill="#fff"/>
<rect x="1718.6" y="972" width="32.4" height="13" fill="#fff"/>
<rect x="45.6" y="743" width="19.9" height="15" fill="#fff"/>
<rect x="215.0" y="743" width="31.0" height="15" fill="#fff"/>
<rect x="390.0" y="743" width="31.0" height="15" fill="#fff"/>
<rect x="561.3" y="743" width="38.5" height="15" fill="#fff"/>
<rect x="736.3" y="743" width="38.5" height="15" fill="#fff"/>
<rect x="910.3" y="743" width="38.5" height="15" fill="#fff"/>
<rect x="1085.3" y="743" width="38.5" height="15" fill="#fff"/>
<rect x="1260.3" y="743" width="38.5" height="15" fill="#fff"/>
<rect x="1435.3" y="743" width="38.5" height="15" fill="#fff"/>
<rect x="1610.3" y="743" width="38.5" height="15" fill="#fff"/>
<polyline points="3,160 54,160 55,157 56,163 57,160 66,160 67,156.9 68,156.6 69,156.3 70,155.6 71,155 72,154.5 73,154.2 74,153.8 75,153.6 76,153.4 77,153.3 78,153.1 79,152.4 80,151.9 81,151.6 82,151.6 83,151.4 84,151 85,151 86,150.8 87,150.6 88,150.7 89,150.3 90,150.2 91,150.2 92,150.3 93,149.9 94,149.5 95,149.1 96,149.1 97,149.2 98,149.1 99,148.9 100,148.9 101,148.5 102,148 103,147.9 104,147.9 105,147.6 106,147.1 107,146.7 108,146.4 109,146.1 110,146 111,145.7 112,145.7 113,145.8 114,145.5 115,145.3 116,145.4 117,145 118,144.7 119,144.6 120,144.1 121,144 122,144.2 123,144.1 124,144 125,144.1 126,144.1 127,143.7 128,143.2 129,142.8 130,142.6 131,142.5 132,142.1 133,141.9 134,141.7 135,141.8 136,141.6 137,141.5 138,141.7 139,141.6 140,141.2 141,141.1 142,141.3 143,140.9 144,140.9 145,140.9 146,140.8 147,141 148,140.7 149,140.4 150,140.4 151,140.2 152,140.4 153,140.4 154,140.5 155,140.1 156,139.9 157,139.5 158,139.3 159,139.6 160,139.8 161,139.9 162,139.5 163,139.2 164,139.3 165,139.4 166,139.4 167,139 168,139.2 169,139.6 170,139.6 171,139.8 172,140.4 173,140.5 174,140.9 175,140.9 176,141.5 177,141.6 178,142.3 179,142.5 180,142.6 181,143.3 182,143.6 183,143.9 184,144.4 185,144.5 186,144.5 187,144.5 188,144.5 189,144.7 190,145 191,145.1 192,145.3 193,145.5 194,145.6 195,145.5 196,145.5 197,145.9 198,146 199,146.2 200,146.2 201,146.2 202,146.6 203,146.8 204,147.1 205,147.2 206,147.3 207,147.3 208,147.3 209,147.6 210,147.9 211,147.9 212,148.1 213,147.9 214,147.7 215,147.6 216,148 217,147.9 218,148.2 219,148.6 220,148.4 221,148.4 222,148.7 223,148.5 224,148.5 225,148.3 226,148.5 227,148.6 228,148.3 229,148.4 230,148.2 231,148.5 232,148.3 233,148.1 234,148.1 235,148.2 236,148.5 237,148.3 238,148.4 239,148.2 240,148.4 241,148.2 242,148.4 243,148.2 244,148.1 245,148.2 246,148.4 247,148.3 248,148.4 249,148.2 250,148.1 251,148.1 252,148.4 253,148.5 254,148.4 255,148.4 256,148.6 257,148.4 258,148.7 259,148.9 260,148.8 261,148.7 262,148.8 263,148.7 264,148.8 265,148.7 266,148.4 267,148.2 268,148.2 269,148.1 270,148.5 271,148.4 272,148.4 273,148.3 274,148.3 275,148.7 276,148.5 277,148.5 278,148.3 279,148.4 280,148.3 281,148.1 282,148.1 283,148 284,148.1 285,148.4 286,148.6 287,148.8 288,148.7 289,149 290,149.1 291,148.7 292,149 293,149.1 294,148.8 295,148.8 296,149 297,149 298,149 299,148.8 300,148.6 301,148.4 302,148.5 303,148.7 304,148.7 304.3,146.1 304.6,149.7 305,148.9 306,148.8 307,148.6 308,148.5 309,148.4 310,148.3 311,148.7 312,148.6 313,148.8 314,148.8 315,148.5 316,148.4 317,148.4 318,148.2 319,148.2 320,148.4 321,148.2 322,148.2 323,147.7 324,147.5 325,148.5 325.3,146.6 325.6,149.3 326,149.1 327,148.8 328,148.3 329,147.9 330,147.5 331,148.6 332,149.1 333,149.5 334,148.8 335,148.7 335.3,147.7 335.6,149.1 336,148.6 337,148.3 338,150 338,144.5 338,144.3 339,146.7 340,147.1 341,147.7 342,148.1 343,148 344,147.4 345,150 345,146 345,145.7 346,147 347,147.6 348,148.5 349,148.9 350,149.3 350.3,146.8 350.6,150.2 351,148.9 352,149 353,148.1 354,147.6 355,147.6 356,148.2 357,147.9 358,147.7 359,147.7 360,147.4 361,148.3 362,147.9 363,148.8 364,148.1 365,147.5 366,147.1 367,147.1 368,148.1 369,148 370,148.1 371,147.9 372,147.7 373,147.2 374,147.8 375,147.4 376,147.3 377,147.5 378,148.3 379,147.5 379.3,145.1 379.6,148.5 380,148.3 381,148.4 381.3,146.7 381.6,149.1 382,149 383,149.4 384,148.6 385,147.9 386,148.3 387,149.7 387,144 387,144.2 388,145.6 388.3,143.1 388.6,146.7 389,147.1 390,146.7 391,147.8 392,147.4 393,147.4 394,146.8 395,148 396,148.6 397,148 398,148.8 399,148.3 399.3,146.3 399.6,149.1 400,148.5 401,148 402,148.7 403,147.7 404,147.7 405,147.3 406,147.9 407,147.5 408,147.3 409,147.1 410,147.8 411,148.6 412,147.9 413,147.8 414,148.6 415,148.2 416,148.9 417,147.9 418,147.7 419,148.4 420,149.1 421,148.4 422,149 423,147.9 424,147.7 425,147.5 426,146.8 427,146.9 428,146.6 429,146.5 430,147.4 431,147.4 431.3,145.5 431.6,148.2 432,147.4 433,147 434,147.9 434.3,146.1 434.6,148.6 435,148.4 436,147.5 436.3,146.3 436.6,147.9 437,148.2 438,148.5 439,148 440,148.7 441,148 442,147.7 443,146.9 444,147.8 445,148.5 445.3,147.1 445.6,149.1 446,148.3 447,148.8 448,148.1 449,148 450,147.4 451,147.9 452,148.3 453,147.8 454,149.2 454,142 454,142.3 455,144.1 456,144.5 457,146.5 458,146.2 459,146.9 460,146.8 461,147.5 462,147.6 463,147.3 464,148.1 465,147.5 466,147.1 467,147.9 468,147.6 469,148.4 470,147.7 471,148 472,147.2 473,149.2 473,137 473,137.4 474,139.3 475,142 476,142.8 477,143.8 478,144.4 479,145.2 480,145.7 481,146.6 482,146.5 483,146.6 484,147.2 485,146.8 486,146.8 487,147.7 488,147.3 489,148.1 490,148.1 491,147.8 492,148.5 493,147.8 494,147.2 494.3,144.4 494.6,148.4 495,147.2 496,149.1 496,142 496,142.5 497,143.2 498,145.5 499,145.6 500,146.1 501,146.3 502,147.6 503,147.4 504,146.8 505,147.3 506,147.9 507,148.2 508,147.9 509,148.3 510,147.6 511,149 511,137 511,136.9 512,139.6 513,141.3 514,143 515,143.8 516,144.5 517,145.4 518,145.1 519,145.8 520,146.4 521,146.2 522,146.3 523,146.4 524,146.8 525,146.6 526,146.9 527,146.5 528,147.6 529,148.1 530,148.6 531,149 532,148.9 532,135.5 532,135.8 533,138.2 534,141 535,141.7 536,143.1 537,144.1 537.3,142.8 537.6,144.7 538,145.6 539,145.2 540,146.1 541,146.8 542,147.1 543,147 544,146.7 545,146.9 546,148.9 546,135.5 546,135.1 547,138.4 548,140.6 549,141.3 549.3,140.3 549.6,141.8 550,142.9 551,144.2 552,144.7 552.3,143.7 552.6,145.1 553,144.6 554,145.7 555,146.1 556,146 557,145.8 558,146.9 559,146.2 560,146.7 561,147 562,146.7 563,146.1 564,146.3 565,145.9 566,145.6 567,146.8 568,146.5 569,146.7 570,147.4 571,147.1 572,146.4 573,147.1 574,148.8 574,141 574,141.4 575,144.2 576,145 577,145.9 578,146.6 579,146.4 580,147.1 581,148.8 581,140 581,140.2 582,143.5 582.3,142 582.6,144.1 583,145.1 584,145.6 585,146.1 586,147 587,146.9 588,148 589,147.7 589.5,148.7 589.5,133.5 590,134.8 591,137.1 592,139.1 593,141.1 594,141.9 595,143.7 596,144.4 597,145.3 598,145.8 599,145.3 600,145.5 601,146.5 602,146.2 603,146.8 604,146.6 604.3,145.1 604.6,147.2 605,146.4 606,146.3 607,148.7 607,136 607,136.4 608,138.4 609,140.2 610,141.6 611,143.5 612,143.6 613,144.1 614,145.6 615,145.5 616,146.5 617,146.3 618,145.9 619,146.8 620,146.5 621,146.9 622,147.6 622.3,146.2 622.6,148.1 623,147.1 624,147.1 625,147.7 626,147.4 627,147.7 628,147.8 629,147.3 630,147.8 631,147.9 632,147.6 632.6,148.6 632.6,137 633,138.3 634,141.6 635,144.1 636,144.6 637,145.8 638,145.9 639,146.1 640,146.3 640.7,148.5 640.7,139 641,140.1 642,142.3 643,143.5 643.3,141.7 643.6,144.3 644,145 645,145.4 646,145.8 647,146.2 648,146.4 649,147.1 650,147.2 651,148 652,148.5 652,143 652,143.2 653,144.8 654,145.1 655,146.2 656,146.9 657,146.9 658,147.3 658.3,145.2 658.6,148.1 659,146.7 660,146.8 661,146.9 662,147.3 663,147.4 664,147.3 665,147.9 666,147.9 667,148 668,148.5 669,147.3 670,147 670.3,145.2 670.6,147.8 671,146.9 672,146.6 673,146.3 674,147.2 675,146.6 676,148.4 676,143 676,142.7 677,144.4 678,144.9 679,145.2 680,146.2 681,146.1 682,146.1 683,146.3 684,146.2 684.3,143.7 684.6,147.2 685,146.3 686,146.6 687,146.6 688,147.5 688.3,144.8 688.6,148.5 689,147.9 690,147 691,147.2 691.3,146.2 691.6,147.6 692,147.8 693,147.1 694,148.3 694,137 694,136.7 695,139.7 696,141.8 697,144 698,145 699,145.6 700,145.7 701,145.8 702,146.3 703,146.1 704,146.8 705,147 706,147.2 707,147.2 708,147.3 709,147.1 710,146.8 711,146.9 712,147 713,147.3 714,147.5 715,147.3 716,147 717,147.1 718,147.3 719,147.2 720,147.3 721,147.2 722,147.2 723,147.1 724,147 725,146.9 726,147.3 727,147.4 728,147.2 729,147.3 730,147.4 731,147.5 732,147.4 733,147.3 734,147.1 735,147.2 736,147.4 737,147.4 738,147.5 739,147.5 740,147.3 741,147.3 742,147 743,146.9 744,147.3 745,147.2 746,147.4 747,147.3 748,147.3 749,147.3 750,147.6 751,147.6 752,147.3 753,147.4 754,147.4 755,147.4 756,147.7 757,147.6 758,147.4 759,147.2 760,147 761,147.3 762,147.7 763,147.9 764,147.5 765,147.4 766,147.3 767,147.6 768,147.8 769,147.5 770,147.7 771,147.9 772,148.2 773,147.7 774,147.8 775,147.5 776,147.7 777,148 778,147.7 779,147.7 780,147.9 781,148 782,148.1 783,147.9 784,148.1 785,148.2 786,148 787,148.2 788,148.3 789,148.3 790,148.4 791,148.1 792,148.3 793,148.3 794,148.5 795,148.2 795.3,146.7 795.6,148.8 796,148.1 797,148.3 798,147.9 799,148.1 800,148.2 801,148.3 802,148.4 803,148.2 804,148.2 805,148 806,148.3 807,148.3 808,148.2 809,148.1 810,148.3 811,148 812,148.2 813,148.3 814,148.5 815,148.4 816,148.2 817,148 818,148 819,148 820,147.9 821,148.3 822,148.1 823,148.3 824,148.4 825,148.4 826,148.1 827,148.4 828,148.4 829,148.6 830,148.8 831,148.9 832,148.6 833,148.4 834,148.2 835,148.3 836,148.3 837,148.6 838,148.6 839,148.4 840,148.3 841,148.4 842,148.6 843,148.6 844,148.8 845,148.6 846,148.5 847,148.8 848,148.9 849,149 850,149 851,148.6 852,148.8 853,148.9 854,148.9 855,148.6 856,148.5 857,148.6 858,148.5 859,148.7 860,148.8 861,148.5 862,148.5 863,148.8 864,148.6 865,148.4 866,148.8 867,148.8 868,149 869,149 870,148.8 871,149 872,148.8 873,148.7 874,148.6 875,148.9 876,148.7 877,148.7 878,148.5 879,148.4 880,148.7 881,148.8 882,148.7 883,148.7 884,149.1 885,148.9 886,149.2 887,149.3 888,149.5 889,149.6 890,149.3 890.3,146.6 890.6,150.3 891,149.3 892,149.2 893,149 894,148.9 895,149.1 896,149 897,148.8 898,149 899,148.9 900,149.1 901,149.2 902,149 903,149 904,148.9 905,148.9 906,149.3 907,149 908,149.1 909,149.1 910,149.4 911,149.2 912,149.3 913,149.4 914,149.4 915,149.6 916,149.8 917,149.8 918,149.9 919,150 920,149.9 921,149.8 922,149.5 923,149.3 924,149.2 925,149.5 926,149.3 927,149.2 928,149.4 929,149.5 930,149.3 931,149.6 932,149.4 933,149.5 934,149.3 935,149.3 936,149.6 937,149.7 938,149.5 939,149.9 940,149.8 941,149.8 942,150.1 943,149.9 944,149.8 945,150.1 946,150.3 947,150.4 948,150.3 949,150.4 950,150.3 951,150.1 952,149.8 953,149.9 954,149.7 955,150 956,150.1 957,150.3 958,149.9 959,149.8 960,149.8 961,150.1 962,150 963,150 964,149.9 965,150.1 966,150.2 967,150.2 968,150.2 969,150 970,149.8 971,149.9 972,149.9 973,150 974,150.2 975,150.3 976,150.4 977,150.4 978,150.4 979,150.2 980,150.3 981,150.4 982,150.3 983,150.2 984,150.2 985,150.6 986,150.7 987,150.4 988,150.4 989,150.3 990,150.5 991,150.4 992,150.5 993,150.4 994,150.6 995,150.8 996,150.7 997,150.8 998,150.8 999,150.8 1000,150.6 1001,150.3 1002,150.4 1003,150.8 1004,150.7 1005,150.9 1006,150.8 1007,150.7 1008,150.6 1009,150.6 1010,150.5 1011,150.8 1012,150.7 1013,150.6 1014,150.7 1015,150.4 1016,150.4 1017,150.7 1018,150.5 1019,150.8 1020,150.5 1021,150.6 1022,150.8 1023,151.1 1024,151 1025,150.9 1026,150.9 1027,151.1 1028,151 1029,150.9 1030,150.9 1031,151.1 1032,151 1033,151 1034,150.9 1035,151.1 1036,150.9 1037,151.1 1038,150.8 1039,150.9 1040,151.2 1041,151.1 1042,150.9 1043,150.9 1044,150.7 1045,150.8 1046,151.1 1047,150.8 1048,151 1049,151.1 1049.3,149.5 1049.6,151.7 1050,151.3 1051,151.3 1052,151.2 1053,151 1054,151 1055,151 1056,150.8 1057,151 1058,150.8 1059,150.8 1060,151 1061,150.7 1062,151 1063,151.1 1064,150.9 1065,150.7 1066,150.8 1067,150.9 1068,150.7 1069,150.8 1070,150.9 1071,150.8 1072,151.1 1073,151 1074,151.2 1075,151.2 1076,151.2 1077,151 1078,151.2 1079,151 1080,151.1 1081,150.9 1082,150.9 1083,151.3 1084,151.3 1085,151.3 1086,151.2 1087,150.9 1088,150.9 1089,150.8 1090,150.8 1091,151 1092,150.9 1093,150.7 1094,151.1 1095,151.1 1096,151.3 1097,151.2 1098,151.1 1099,151 1100,151.1 1101,151.1 1102,151.3 1103,151.5 1104,151.4 1105,151.4 1106,151.6 1107,151.5 1108,151.3 1109,151.2 1110,151.3 1111,151.3 1112,151.1 1113,151.1 1114,150.9 1115,151 1116,151 1117,151 1118,150.9 1119,150.9 1120,151.3 1121,151.5 1122,151.3 1123,151 1124,151.2 1125,151.2 1126,151.4 1127,151.6 1128,151.7 1129,151.4 1130,151.5 1131,151.2 1132,151.1 1133,151.1 1134,150.9 1135,151.2 1136,151.5 1137,151.6 1138,151.5 1139,151.4 1139.3,148.8 1139.6,152.5 1140,151.6 1141,151.3 1142,151.5 1143,151.4 1144,151.6 1145,151.9 1146,151.6 1147,151.5 1148,151.8 1149,151.5 1150,151.5 1151,151.7 1152,151.9 1153,151.9 1154,152 1155,151.9 1156,151.7 1157,151.5 1158,151.8 1159,151.8 1160,152 1161,151.8 1162,151.8 1163,151.7 1164,151.5 1165,151.8 1166,151.7 1167,151.8 1168,151.8 1169,152.1 1170,152.2 1171,152.3 1172,152.4 1173,152.5 1174,152.4 1175,152.5 1176,152.3 1177,152.1 1178,152 1179,152.2 1180,152 1181,152.1 1182,152 1183,151.8 1184,152.1 1185,152.3 1186,152.4 1187,152.4 1188,152.2 1189,152 1190,152.3 1191,152.6 1192,152.4 1193,152.3 1194,152.5 1195,152.4 1196,152.6 1197,152.8 1198,153 1199,153 1200,152.7 1201,152.6 1202,152.7 1203,152.9 1204,152.6 1205,152.7 1206,152.9 1207,153.1 1208,153 1209,152.9 1210,152.6 1211,152.5 1212,152.9 1213,152.7 1214,152.6 1215,152.4 1216,152.8 1217,152.8 1218,153 1219,153 1220,153 1221,153.2 1222,153 1223,153 1224,152.9 1225,152.8 1226,152.9 1227,153.2 1228,153.5 1229,153.5 1230,153.2 1231,153.3 1232,153.3 1233,153.3 1234,153.2 1235,153.5 1236,153.3 1237,153.3 1238,153.4 1239,153.5 1240,153.5 1241,153.4 1242,153.3 1243,153.4 1244,153.6 1245,153.4 1246,153.3 1247,153.4 1248,153.5 1249,153.6 1250,153.3 1251,153.2 1252,153.6 1253,153.7 1254,153.5 1255,153.7 1256,153.9 1257,153.7 1258,153.8 1259,153.6 1260,153.4 1261,153.5 1262,155.3 1262,152 1262,151.7 1263,152.8 1264,153.8 1265,154.1 1266,153.6 1267,154.3 1268,154.1 1269,154.4 1270,154 1271,153.8 1272,154 1273,154.3 1274,154.1 1275,154 1276,154.1 1277,153.8 1278,154.1 1279,154.1 1280,154.2 1281,154 1282,154 1283,154.2 1284,153.9 1285,153.8 1286,154.1 1287,153.8 1288,154.1 1289,154.1 1290,153.9 1291,153.9 1292,154.1 1293,154 1294,154.3 1295,154 1296,154 1297,154.1 1298,154 1299,154.1 1300,153.9 1301,154.3 1302,154.1 1303,154 1304,154.1 1305,154.2 1306,154.5 1307,154.1 1308,154.4 1309,154.5 1310,154.5 1311,154.3 1312,154.6 1313,154.6 1314,154.7 1315,154.6 1316,154.4 1317,154.4 1318,154.3 1319,154.6 1320,154.4 1321,154.3 1322,154.1 1323,154.4 1324,154.4 1325,154.3 1326,154.1 1327,154.1 1328,154.2 1329,154.2 1330,154.3 1331,154.2 1332,154.6 1333,154.7 1334,154.9 1335,154.7 1336,154.5 1337,154.2 1338,154.2 1339,154.1 1340,154.1 1341,154.4 1342,154.3 1343,154.6 1344,154.4 1345,154.7 1346,154.4 1347,154.5 1348,154.6 1349,154.4 1350,154.6 1351,154.6 1352,154.5 1353,154.5 1354,154.6 1355,154.6 1356,154.5 1357,154.2 1358,154.4 1359,154.2 1360,154.5 1361,154.3 1362,154.2 1363,154.1 1364,154.2 1365,154.4 1366,154.6 1367,154.6 1368,154.5 1369,154.7 1370,154.6 1371,154.9 1372,154.8 1373,155 1374,154.7 1375,154.8 1376,154.7 1377,154.6 1378,154.4 1379,154.3 1380,154.5 1381,154.4 1382,154.4 1383,154.4 1384,154.8 1385,154.5 1386,154.5 1387,154.6 1388,154.6 1389,154.7 1390,155 1391,155.1 1392,155.1 1393,155.3 1394,155.2 1395,155.4 1396,155.3 1397,155.1 1398,155 1399,154.8 1400,154.9 1401,155.3 1402,155.2 1403,155.4 1404,155.1 1405,155.3 1406,155.1 1407,155.3 1408,155.3 1409,155.2 1410,155.4 1411,155.5 1412,155.6 1413,155.2 1414,155.5 1415,155.1 1416,155.4 1417,155.5 1418,155.6 1419,155.2 1420,154.9 1421,155.3 1422,155.5 1423,155.1 1424,155.3 1425,155 1426,154.9 1427,154.7 1428,155.2 1429,155.4 1430,155.3 1431,155.3 1432,155.4 1433,155.5 1434,155.2 1435,155.2 1436,155.1 1437,155.4 1438,155.5 1439,155.3 1440,155 1441,155.1 1442,155.2 1443,154.9 1444,155.1 1445,155.2 1446,155.5 1447,155.6 1448,155.4 1449,155.7 1450,155.5 1451,155.3 1452,155 1453,155.4 1454,155.4 1455,155.3 1456,155.1 1457,155.3 1458,155.1 1459,155.1 1460,155.2 1461,155.6 1461.3,153.1 1461.6,156.6 1462,155.7 1463,155.7 1464,155.5 1465,155.6 1466,155.7 1467,155.6 1468,155.7 1469,155.7 1470,155.5 1471,155.4 1472,155.4 1473,155.4 1474,155.3 1475,155.6 1476,155.6 1477,155.8 1478,155.5 1479,155.5 1480,155.7 1481,155.9 1482,155.7 1483,155.9 1484,155.6 1485,155.4 1486,155.6 1487,155.6 1488,155.5 1489,155.7 1490,155.7 1491,155.8 1492,155.9 1493,155.8 1494,155.7 1495,155.6 1496,155.5 1497,155.3 1498,155.5 1499,155.5 1500,155.8 1501,155.8 1502,155.6 1503,155.8 1504,155.7 1505,155.7 1506,155.9 1507,155.8 1508,156 1509,155.8 1510,156.1 1511,156.3 1512,156.1 1513,155.9 1514,156 1515,156 1516,156.2 1517,155.8 1518,155.8 1519,156 1520,156 1521,155.9 1522,155.9 1523,156 1524,155.9 1525,156 1526,156.1 1527,155.9 1528,155.6 1529,155.5 1530,155.8 1531,155.6 1532,155.8 1533,155.6 1534,155.7 1535,156 1536,156.3 1537,156.1 1538,155.8 1539,155.7 1540,155.7 1541,155.9 1542,155.9 1543,155.6 1544,155.8 1545,156 1546,155.7 1547,155.7 1548,155.6 1549,155.6 1550,155.7 1551,155.8 1552,155.4 1553,155.4 1554,155.4 1555,155.2 1556,155 1557,155.2 1558,155.1 1559,155 1560,154.7 1561,154.7 1562,154.8 1563,154.7 1564,154.8 1565,154.7 1566,154.5 1567,154.1 1568,154.1 1569,154.1 1570,153.6 1571,153.6 1572,153.3 1573,153 1574,153 1575,152.5 1576,152.2 1577,152 1578,152.1 1579,152 1580,152.2 1581,152.2 1582,152.2 1583,151.9 1584,151.7 1585,151.4 1586,151.1 1587,151.2 1588,151.2 1589,151.3 1590,151.4 1591,151.5 1592,151.1 1593,151 1594,151.1 1594,150.6 1595,82 1597,90 1600,98 1605,115 1610,130 1615,139 1620,145 1625,148.3 1627,150 1630,154 1645,156.6 1700,157.4 1751,158" fill="none" stroke="#000" stroke-width="1.05" stroke-linejoin="round" transform="translate(0.5 0.5)" />
<polyline points="3,246 54,246 55,246 56,200 57,224 58,208 59,222 60,214 61,222 62,218.6 63,216.2 64,218.2 65,218.7 66,221.5 67,221.2 68,220.6 69,217.7 70,218.2 71,221.1 72,218.5 73,221.9 74,220.1 75,219.2 76,221.1 77,219.9 78,220.7 79,221.9 80,221.6 81,221.6 82,221.8 83,221.8 84,221.8 85,221.7 86,221.9 87,221.9 88,222 89,221.7 90,221.6 91,221.5 92,221.6 93,221.8 94,221.7 95,221.7 96,222.1 97,221.9 98,222.2 99,222.2 100,222 101,221.9 102,222 103,221.9 104,221.8 105,221.8 106,222 107,221.8 108,222 109,222.1 110,222.1 111,222 112,221.8 113,223.9 113,218 113,217.8 114,220.8 115,222.1 116,221.9 117,222.4 118,222.5 119,222.7 120,222.9 121,223 121.3,220.6 121.6,223.8 122,222.9 123,222.6 124,222.7 125,222.5 126,222.3 127,222.3 128,222.7 129,222.9 130,222.9 131,223.1 132,223.1 133,223.1 134,223.2 135,223.2 136,222.9 137,223 138,222.8 139,223.1 140,223.2 141,223.3 142,223.2 143,223.3 144,223.1 145,223.1 146,222.8 147,223.1 148,223.3 149,223.1 150,222.9 151,223.2 152,223.3 153,223.5 154,223.5 155,223.6 156,223.2 157,223.4 158,223.5 159,223.6 159.3,221.8 159.6,224.1 160,223.2 161,223.4 162,223.5 163,223.3 164,223.3 165,224.9 165,219 165,218.8 166,222.4 167,223.4 168,223.5 169,223.7 170,223.5 171,223.4 172,223.7 173,223.9 174,223.8 175,223.7 176,223.5 177,223.3 178,223.1 179,223.5 180,223.8 181,223.7 182,223.7 183,223.7 184,224 185,224 186,224 187,224.2 188,224.2 189,224 190,224.1 191,224 192,224.3 193,224.4 194,224.3 195,224.3 196,224.3 197,224 198,223.7 199,224.1 200,224.1 201,223.8 202,224 203,223.9 204,223.9 205,223.9 206,224 207,224.2 208,224.5 209,224.5 210,224.2 211,224.4 212,224.3 213,224.3 214,224.1 215,223.9 216,223.8 217,223.9 218,224.3 219,224.2 220,224.1 221,224.1 222,224.1 223,224.1 224,224.1 225,224.5 226,224.7 227,224.8 228,224.5 229,224.5 230,224.6 231,224.5 232,224.8 233,224.6 234,224.5 235,224.3 236,224.4 237,224.8 238,224.6 239,224.7 240,224.8 241,225 242,224.8 243,225.1 244,225.1 245,225 246,225.1 247,225 248,224.9 249,225.1 250,225.1 251,225.3 252,225.1 253,225 254,225.2 255,225.2 256,225.2 257,225.4 258,225.5 259,225.5 260,225.4 261,225.5 262,225.6 263,225.7 264,225.7 265,225.6 266,225.2 267,225.4 268,225.2 269,225 270,225.4 271,225.3 272,225 273,225 273.3,223.1 273.6,225.6 274,224.9 275,224.8 276,225 277,224.9 278,224.8 279,225.1 280,225.1 281,225 282,225 283,225.4 284,225.1 285,225 286,225.1 287,225.3 288,225.5 289,225.5 290,225.4 291,225.8 292,226 293,226.2 294,226.1 295,225.9 296,226 297,225.8 298,225.8 299,225.6 300,225.7 301,225.6 302,225.5 303,225.6 304,226 305,226.2 306,226.3 307,225.9 308,225.7 309,225.9 310,225.8 311,225.7 312,226.1 313,225.8 314,225.8 315,226.1 316,225.9 317,225.7 318,225.8 319,226.2 320,226.2 321,226 322,226.1 323,226 324,225.8 325,226 326,226.4 327,226.5 328,226.7 329,226.3 329.3,225 329.6,226.7 330,226.4 331,226.1 332,226.4 333,226.1 334,226.2 335,226.2 336,226.5 337,226.6 338,226.4 339,226.4 340,226.5 341,226.3 342,226.5 343,226.6 344,226.4 345,226.2 346,226.3 347,226.5 348,226.7 349,226.7 350,226.9 351,226.6 352,227 353,226.8 354,227 355,227.1 355.3,226 355.6,227.5 356,227.3 357,226.9 358,226.7 359,226.6 360,227 361,227.2 362,226.9 362.3,224.8 362.6,227.6 363,226.7 364,226.9 365,227.1 366,227.1 367,227.3 368,227.5 368.3,225.2 368.6,228.1 369,227.4 370,227.3 371,227.3 372,227 373,227.1 374,227 374.3,224.9 374.6,227.7 375,226.8 376,227.1 377,226.9 378,226.8 379,226.7 380,226.9 381,226.8 382,227.2 383,227 384,227 385,226.9 386,227.3 387,227.1 388,226.9 389,227.1 390,227.2 391,227.4 392,227.7 393,227.8 394,227.9 395,227.5 396,227.7 397,227.9 398,228.1 399,228.1 400,227.8 401,227.7 402,227.6 403,227.8 404,227.9 405,228.1 406,227.9 407,227.8 407.3,226.5 407.6,228.2 408,228 409,227.9 410,228 411,228.1 412,227.8 413,227.7 414,227.7 415,228 416,228 417,228 418,228 419,228.1 420,227.8 421,227.7 422,227.5 423,227.8 424,227.7 425,227.9 426,228.1 427,228 428,227.8 429,227.7 430,228.1 431,228.2 432,228.3 433,228.1 434,227.9 434.3,226.4 434.6,228.4 435,227.8 436,228 437,228.2 438,228.4 439,228.1 440,228.1 441,228.2 442,228 443,228 444,227.9 445,227.9 446,228.2 447,228.2 447.3,226.9 447.6,228.6 448,228.5 449,228.6 450,228.7 451,228.4 452,228.8 453,228.8 454,228.6 455,228.3 456,228.2 457,228.3 458,228.2 459,228.2 460,228.4 461,228.3 462,228.3 463,228.6 464,228.5 465,228.5 466,228.7 467,229 468,229 469,228.8 469.3,227.2 469.6,229.3 470,228.6 471,228.8 472,228.6 473,228.5 474,228.6 475,228.5 476,228.6 477,228.8 478,228.7 479,228.8 480,229.2 481,228.9 482,229 483,228.9 484,228.8 485,228.8 486,228.9 487,228.7 488,228.8 489,229 490,228.9 491,229 492,228.8 493,229 493.3,227.2 493.6,229.5 494,229.2 495,229.1 496,229.2 497,229.1 498,229.4 499,229.7 500,229.8 501,229.6 502,229.8 503,229.5 503.3,227.9 503.6,230 504,229.3 505,229.5 506,229.8 507,229.8 507.3,227.4 507.6,230.6 508,229.6 509,229.6 510,229.6 511,229.7 512,229.9 513,230.1 514,229.8 515,229.7 516,229.6 517,229.4 518,229.3 519,229.1 520,229.2 521,229.4 522,229.3 523,229.3 524,229.2 525,229.5 526,229.8 527,229.7 528,229.8 529,229.8 530,230 531,230.3 532,230.5 533,230.1 534,229.8 534.3,228.4 534.6,230.3 535,229.8 536,230.1 537,230.1 538,230.3 539,230.3 540,230.1 541,230.2 542,230.4 543,230.2 544,230.4 545,230.2 546,230.1 547,230.1 548,230.2 549,230.4 550,230.4 551,230.6 551.3,228.8 551.6,231.1 552,230.6 553,230.6 554,230.9 555,230.6 556,230.8 557,230.7 558,230.9 559,230.9 560,230.9 561,230.6 562,230.4 563,230.2 564,230.2 565,230.1 566,230.5 567,230.5 568,230.5 569,230.6 569.3,228.5 569.6,231.2 570,230.4 571,230.8 572,231 573,231 574,231.2 575,231.2 576,231 577,231 578,231.2 579,230.9 579.3,229.1 579.6,231.4 580,231 581,232.4 581,227 581,226.4 582,229.2 583,230.8 584,230.6 585,230.9 586,230.8 587,230.8 588,230.9 589,230.8 590,230.6 591,230.5 592,230.8 593,231.1 594,231 595,230.9 596,231 597,230.9 598,230.9 599,230.8 600,231.1 601,231.2 602,231.4 603,231.5 604,231.2 605,231.3 606,231.1 607,231 608,230.9 609,231 610,231.3 610.3,229.2 610.6,231.9 611,231.2 612,231.4 613,231.5 614,231.3 615,231.5 616,231.3 617,231.5 618,231.7 619,231.8 620,231.7 621,231.4 622,231.2 623,231.4 624,231.7 625,231.7 626,231.5 627,231.6 628,231.8 629,231.9 630,231.6 631,231.7 632,231.8 633,231.7 634,231.9 635,231.8 636,233.4 636,226 636,226.5 637,229.6 638,230.5 639,231.1 640,232.1 641,231.8 642,232 643,231.8 644,231.6 645,231.5 646,231.8 647,231.7 648,231.6 649,232 650,231.8 651,231.9 652,231.8 653,232.2 654,232.1 655,232.3 656,232.3 657,232.4 658,232.3 659,232.5 660,232.2 661,232 662,232 663,232 664,232.4 665,232.6 666,232.4 667,232.3 668,232.3 669,232.6 670,232.2 671,232.4 672,232.7 673,232.9 674,232.6 675,232.5 676,232.5 677,232.3 678,232.4 679,232.7 680,232.5 681,232.7 682,232.9 683,233 684,233 685,233.1 686,233 687,233.1 688,233.2 689,233.3 690,233.4 691,233.3 692,232.9 693,234.3 693,228 693,227.9 694,231.8 695,232.3 696,232.6 697,232.4 698,232.4 699,232.3 700,232.3 701,232.5 702,232.9 703,233 704,233 705,233.1 706,233.3 707,233 708,233.2 709,233.2 710,233.4 711,233.1 712,233 713,233.2 714,233.4 714.3,231.5 714.6,234 715,233.3 716,233.2 717,233.2 718,233.4 719,233.2 720,233.4 721,233.6 722,233.5 723,233.5 724,233.3 725,233.2 726,233.1 727,233.1 728,233 729,233.4 730,233.6 731,233.8 732,233.8 733,233.6 734,233.4 734.3,231.7 734.6,233.9 735,233.7 736,233.9 737,234 738,233.7 739,233.8 740,233.8 741,233.6 742,233.6 743,233.4 743.3,231.8 743.6,233.8 744,233.6 745,233.4 746,233.5 747,233.6 748,233.5 749,233.7 750,233.8 751,233.6 752,233.9 753,234.1 754,233.8 755,234 756,233.7 757,233.8 758,233.7 759,233.6 760,233.5 761,233.7 762,233.5 763,233.4 764,233.4 765,233.4 766,233.5 767,233.7 768,233.7 769,233.9 770,233.7 771,233.9 772,233.9 773,233.9 774,234.1 775,233.9 776,234 776.3,231.7 776.6,234.7 777,234.2 778,234.2 779,234.2 780,234 781,234.2 782,234.5 783,234.3 784,234.5 785,234.5 786,234.7 787,234.5 788,234.2 789,234.4 789.3,232.9 789.6,234.9 790,234.4 791,234.3 792,234.2 793,234.5 794,234.5 795,234.4 796,234.6 797,234.4 798,234.4 799,234.4 800,234.3 801,234.2 802,234 803,233.9 804,233.9 805,233.8 806,234.2 807,234.5 808,234.6 809,234.4 810,234.4 811,234.6 812,234.6 813,234.8 814,234.8 815,234.5 816,234.4 816.3,232.3 816.6,235 817,234.5 818,234.4 819,234.6 820,234.9 821,235.2 822,235 823,234.8 824,235.1 825,234.8 826,234.6 827,234.9 828,234.9 829,234.6 830,234.9 831,234.9 832,235 833,234.9 834,235.1 835,235.1 836,234.9 837,235.1 837.3,232.9 837.6,235.7 838,235.2 839,234.9 840,234.9 841,235 842,235 843,235.3 844,235.3 845,235.2 846,235.4 847,235.5 848,235.7 849,235.5 850,235.3 851,235.1 852,235.1 853,235.4 854,235.6 855,235.3 856,235.4 857,235.4 858,235.7 859,235.7 860,235.5 861,235.7 862,235.8 863,235.8 864,235.5 865,235.6 866,235.7 867,235.5 868,235.8 869,235.7 870,235.8 871,235.7 872,235.6 873,235.6 874,235.7 875,235.8 876,236.1 877,236.1 878,236 879,235.8 880,235.5 881,235.3 882,235.7 882.3,234 882.6,236.2 883,235.7 884,235.8 885,236.1 886,235.8 887,235.6 888,235.6 889,235.5 890,235.6 891,235.5 892,235.5 893,235.7 894,235.9 895,235.9 896,235.9 897,236.2 898,236.2 899,236 900,236.2 901,236.4 902,236.4 903,236.2 904,236 905,236 906,235.9 907,236.2 908,235.9 909,235.9 910,236.3 911,236.3 912,236.2 913,236.1 913.3,234.8 913.6,236.5 914,235.9 915,236.1 916,236.4 917,236.3 918,236.4 919,236.6 920,236.4 921,236.3 922,236.1 923,235.9 923.3,234.1 923.6,236.5 924,235.9 925,235.8 926,236.1 927,236.4 928,236.5 929,236.2 930,236.2 931,236.2 932,236 933,236.4 934,236.6 934.3,235.3 934.6,237 935,236.4 936,236.2 937,236.2 938,236.3 939,236.7 940,236.8 941,236.9 942,236.6 943,236.5 944,236.5 945,236.8 946,237.1 947,237.1 948,237.1 949,236.9 950,236.7 951,236.5 952,236.7 953,236.5 954,236.7 955,236.7 956,236.4 957,236.5 958,236.8 959,237 960,236.7 961,236.7 962,237 963,237.1 964,237 965,237.3 966,237 967,236.8 968,236.6 969,236.7 970,236.8 971,236.7 972,236.7 973,237.1 974,237.1 975,236.8 976,237.1 977,236.9 978,236.8 979,236.8 980,237.1 981,237.1 982,237.3 983,237.4 984,237.6 984.3,236.3 984.6,238 985,237.4 986,237.2 987,237.5 988,237.3 989,237.2 990,237.3 991,237.2 992,237.3 993,237.6 994,237.5 995,237.3 996,237.4 997,237.3 998,237.5 999,237.3 1000,237.2 1001,237.4 1002,237.7 1003,237.8 1004,237.6 1005,237.3 1006,237.6 1007,237.7 1008,237.9 1009,238.1 1010,237.7 1011,237.9 1012,238 1013,238.2 1014,237.9 1015,238 1015.3,236.9 1015.6,238.3 1016,237.9 1017,238.2 1018,238.4 1019,238.5 1020,238.6 1021,238.7 1022,238.4 1023,238.3 1024,238.2 1025,238.2 1026,238.1 1027,238.1 1028,238.3 1029,238.3 1030,238.4 1031,238.6 1032,238.4 1033,238.4 1034,238.2 1035,238.4 1036,238.4 1037,238.3 1038,238.2 1039,238.2 1040,238.5 1041,238.3 1042,238.5 1043,238.6 1044,238.5 1045,238.4 1046,238.8 1047,238.9 1048,239 1049,238.8 1050,239 1051,238.9 1052,238.8 1053,238.9 1054,239.1 1055,239 1056,238.9 1057,238.7 1058,238.7 1059,239 1060,239.2 1061,239.1 1062,239.3 1063,239 1064,239 1065,239.1 1066,238.8 1067,238.9 1068,238.9 1069,238.9 1070,239.1 1071,238.9 1072,239.1 1073,239 1074,239.3 1075,239.4 1076,239.3 1077,239.2 1078,239.4 1079,239.2 1080,239.2 1081,239.2 1082,239.1 1083,239.1 1084,239.1 1085,239.2 1086,239.5 1087,239.4 1088,239.5 1089,239.3 1090,239.3 1091,239.6 1092,239.7 1093,239.9 1094,239.7 1095,239.7 1096,239.5 1097,239.5 1097.3,238.3 1097.6,239.8 1098,239.4 1099,239.5 1100,239.5 1101,239.7 1102,239.6 1103,239.7 1104,240.1 1105,240.3 1106,240.2 1107,240.2 1108,239.9 1109,239.9 1110,240.1 1111,240.1 1112,240.3 1113,240.3 1114,240.2 1115,240.1 1116,240.3 1117,240.2 1118,240.5 1119,240.7 1120,240.8 1121,240.5 1122,240.6 1123,240.6 1124,240.4 1125,240.6 1126,240.4 1127,240.3 1128,240.2 1129,240.2 1130,240.2 1131,240.4 1132,240.4 1133,240.6 1134,240.8 1135,240.6 1136,240.9 1137,241.1 1138,241 1139,241.2 1140,240.9 1141,240.6 1142,241 1143,240.9 1144,240.8 1145,240.9 1146,241.2 1147,241.4 1148,241.3 1149,241.1 1150,241 1151,241 1152,240.8 1153,240.7 1154,240.8 1155,241.2 1156,241.5 1157,241.4 1158,241.3 1159,241.5 1160,241.3 1161,241.6 1162,241.7 1163,241.4 1164,241.4 1165,241.4 1166,241.8 1167,241.9 1168,241.7 1169,241.6 1170,241.5 1171,241.5 1172,241.5 1173,241.8 1174,242 1175,241.8 1176,241.9 1177,241.9 1178,241.7 1179,241.7 1180,242 1181,242.1 1182,242.3 1183,242 1184,242 1185,242.1 1186,242.1 1186.3,239.9 1186.6,242.7 1187,241.9 1188,242 1189,242.1 1190,242.3 1191,242.5 1192,242.5 1193,242.4 1194,242.6 1195,242.3 1196,242.3 1197,242.2 1198,242.2 1199,242 1200,242 1201,242.1 1202,242.2 1203,242 1204,242 1205,242.3 1206,242.4 1207,242.6 1208,242.8 1209,242.8 1210,242.7 1211,242.4 1212,242.6 1213,242.7 1214,242.5 1215,242.8 1216,242.7 1217,242.6 1218,242.6 1219,242.6 1220,242.6 1221,242.8 1222,242.7 1222.3,241.2 1222.6,243.2 1223,242.6 1224,242.9 1225,242.7 1226,243 1227,243.3 1228,243.1 1229,243.4 1230,243.3 1231,243.4 1232,243.3 1233,243.3 1234,243.2 1235,243.3 1236,243.3 1237,243.4 1238,243.1 1239,244.8 1239,232 1239,232.6 1240,241.8 1241,243.4 1242,243.3 1243,243.5 1244,243.6 1245,243.6 1246,243.6 1247,243.6 1248,243.4 1249,243.3 1250,243.3 1251,243.6 1252,243.7 1253,244 1254,244 1255,243.7 1256,243.7 1257,243.5 1258,243.5 1259,243.5 1260,243.4 1261,243.4 1262,243.8 1263,243.9 1264,243.7 1265,243.7 1266,243.6 1267,243.9 1268,243.7 1269,243.7 1270,244.1 1271,244.1 1272,243.8 1273,244.1 1274,244.2 1275,243.9 1276,243.7 1277,244 1278,244 1279,244 1280,243.9 1281,243.7 1282,243.7 1283,243.7 1284,243.8 1285,243.8 1286,243.7 1287,243.7 1288,243.8 1289,244.2 1290,244 1291,244.2 1292,244.1 1293,244.1 1294,244.1 1295,244.1 1296,244.3 1297,244.6 1298,244.4 1299,244.5 1300,244.7 1301,244.6 1302,244.5 1303,244.8 1304,245 1305,245.1 1306,244.8 1307,244.9 1308,244.9 1309,245.1 1310,244.9 1311,244.7 1312,244.9 1313,245 1314,244.9 1315,245.1 1316,244.8 1317,244.8 1318,244.8 1319,245 1320,245 1321,245 1322,245.3 1323,245.4 1324,245.3 1325,245.1 1326,245.2 1327,245.4 1328,245.2 1329,245.2 1330,245.1 1331,245.3 1332,245.4 1333,245.1 1334,245 1335,244.8 1336,245.1 1337,245.4 1338,245.6 1339,245.3 1340,245 1341,245.1 1342,245.4 1343,245.1 1344,245 1345,244.8 1346,245.1 1347,245.2 1348,245.2 1349,245.2 1350,245.5 1351,245.7 1352,245.8 1353,245.8 1354,245.9 1355,245.8 1356,245.7 1357,245.8 1358,245.9 1359,245.9 1360,246 1361,245.8 1362,245.7 1363,245.6 1364,245.9 1365,245.9 1366,246 1367,245.9 1368,245.8 1369,245.8 1370,245.7 1371,245.9 1372,245.7 1373,245.6 1374,246 1375,246.1 1376,245.8 1377,245.7 1378,245.7 1379,245.8 1380,246.1 1381,246.2 1382,246.2 1383,246 1384,245.9 1385,246 1386,246 1387,245.9 1388,245.6 1389,245.5 1390,245.9 1391,246.2 1392,246.2 1393,245.9 1394,245.8 1395,245.7 1396,245.7 1397,245.8 1398,246.1 1399,246.2 1400,246.2 1401,246.5 1402,246.2 1403,246.3 1404,246.5 1405,246.7 1406,246.6 1407,246.4 1408,246.5 1409,246.5 1410,246.5 1411,246.5 1412,246.2 1413,246.3 1414,246.6 1415,246.5 1416,246.5 1417,246.8 1418,246.6 1419,246.3 1420,246.1 1421,246.4 1422,246.4 1423,246.6 1424,246.6 1425,246.7 1426,246.8 1427,246.6 1428,246.5 1429,246.8 1430,246.8 1431,247 1432,246.8 1433,247 1434,247.1 1435,247 1436,246.7 1437,246.5 1438,246.5 1439,246.6 1440,246.9 1441,246.6 1442,246.9 1443,247.1 1444,246.9 1444.3,244.6 1444.6,247.6 1445,247.1 1446,247.2 1447,247.2 1448,247.4 1449,247.5 1450,247.2 1451,247.2 1452,247.2 1453,247 1454,246.8 1455,247.1 1456,247.2 1457,246.9 1458,247.2 1459,246.9 1460,247.1 1461,247.3 1462,247.1 1463,247.3 1464,247.1 1465,246.9 1466,246.8 1467,247 1468,247.1 1469,246.9 1470,246.9 1471,247.2 1472,247.3 1473,247.1 1474,247.1 1475,247.3 1476,247.3 1477,247.6 1478,247.6 1479,247.8 1480,247.7 1481,247.9 1482,247.7 1483,247.7 1484,247.5 1485,247.8 1486,247.7 1487,248 1488,247.7 1489,247.9 1490,248 1491,247.9 1492,247.9 1493,248.1 1494,248.3 1495,248.5 1496,248.6 1497,248.6 1498,248.7 1499,248.7 1500,248.4 1501,248.2 1502,248.1 1503,247.9 1504,248.1 1505,248.4 1506,248.3 1507,248.3 1508,248.5 1509,248.4 1510,248.1 1511,248.2 1512,248.5 1513,248.4 1514,248.2 1515,248.3 1516,248.3 1517,248.2 1518,248.2 1519,248.3 1520,248.1 1521,248.1 1522,248.5 1523,248.7 1524,248.7 1525,248.4 1526,248.5 1527,248.5 1528,248.7 1529,248.5 1530,248.6 1531,248.4 1532,248.2 1533,248.5 1534,248.5 1535,248.4 1536,248.7 1537,248.9 1538,249.1 1539,249.1 1540,249.1 1541,249.3 1542,249.2 1543,248.9 1544,248.8 1545,248.6 1546,248.9 1547,249.1 1548,248.9 1549,248.9 1550,248.9 1551,249 1552,249.3 1553,249.6 1553.3,247.3 1553.6,250.3 1554,249.2 1555,249.2 1556,249.1 1557,249.3 1558,249.5 1559,249.2 1560,249 1561,248.8 1562,249.1 1563,249.3 1564,249.5 1565,250.9 1565,232 1565,232 1566,246.5 1567,249.4 1568,249.3 1569,249.5 1570,249.6 1571,249.8 1572,249.5 1573,249.5 1574,249.8 1575,249.6 1576,249.8 1577,249.6 1578,249.9 1579,249.8 1580,249.6 1581,249.9 1582,250.1 1583,249.7 1584,249.6 1585,249.5 1586,249.4 1587,249.4 1588,249.5 1589,249.7 1590,249.9 1591,250.2 1592,250.2 1593,250 1594,250.3 1595,231 1596,262.7 1597,240 1598,256 1599,250.9 1599.6,248.2 1600.2,252.1 1600.8,246.8 1601.4,251.8 1602,247.1 1602.6,251.6 1603.2,248 1603.8,251.3 1604.4,247.5 1605,251.8 1605.6,247 1606.2,251.7 1606.8,247.4 1607.4,252.3 1608,247 1608.6,251.8 1609.2,246.8 1609.8,251.1 1610.4,246.9 1611,250.9 1611.6,247.5 1612.2,251 1612.8,248 1613.4,250.9 1614,247.7 1614.6,252.1 1615.2,246.9 1615.8,251 1616.4,247.9 1617,251.5 1617.6,248.2 1618.2,251.2 1618.8,247.3 1619.4,252.2 1620,247.3 1620.6,252.2 1621.2,248.1 1621.8,251 1622.4,247.6 1623,252.2 1623.6,246.9 1624.2,252.1 1624.8,247.9 1625.4,251.9 1626,247.7 1626.6,250.9 1627.2,248.2 1627.8,250.9 1630,250.8 1751,251" fill="none" stroke="#18bec8" stroke-width="1.1" stroke-linejoin="round" transform="translate(0.5 0.5)" />
<polyline points="3,349 55,349 55.5,297 55.8,398.4 56,309.7 56.2,386.3 56.5,319.3 56.8,377.2 57,326.6 57.2,370.3 57.5,332 57.8,365.1 58,336.2 58.2,361.2 58.5,339.3 58.8,358.2 59,341.7 59.2,356 59.5,343.5 59.8,354.3 60,344.8 60.2,353 61,345.8 61.2,352 62,346.6 62.2,351.3 62,351.3 63,350.8 64,347.5 65,350.5 66,348.3 67,351 68,340.6 68.2,363 68.5,341.8 68.8,361 69,342.8 69.2,359.4 69.5,343.6 69.8,357.9 70,344.4 70.2,356.7 70.5,345 70.8,355.6 71,345.6 71.2,354.7 71.5,346.1 71.8,353.9 72,346.5 72.2,353.2 72.5,346.8 72.8,352.6 73,348.5 75,349.4 77,348.9 79,349.3 81,349 83,349.3 85,348.8 87,349 89,348.5 91,349 93,348.6 95,349.4 97,349.2 99,348.9 101,349.5 103,349.4 105,349.5 107,348.6 109,349.2 111,349.2 113,349.1 115,348.5 117,349.4 119,348.9 121,349.1 123,349.3 125,348.8 127,348.5 129,349.4 131,348.8 133,348.5 135,348.6 137,349.5 139,349.2 141,348.7 143,348.6 145,349.4 147,349.2 149,349.1 151,348.6 153,348.9 155,349.4 157,348.5 159,348.9 161,348.6 163,349.5 165,348.6 167,349.5 169,349.3 171,349.2 173,348.5 175,349.2 177,349 179,349 181,348.6 183,349 185,349.3 187,348.6 189,349.4 191,348.9 193,348.8 195,348.7 197,349 199,349.1 201,350.4 203,350.7 205,350.3 207,350.3 209,350.8 211,350 213,349.8 215,350.1 217,350.1 219,349.9 221,350.2 223,349.8 225,350.7 227,350.3 229,350.7 231,350.5 233,350.5 235,350.6 237,350.1 239,350.5 241,350 243,350.4 245,350.4 247,350.6 249,350 251,350.1 253,350.6 255,350.6 257,350.8 259,349.9 261,350 263,349.9 265,350.5 267,350.5 269,350.4 271,350.6 273,350.3 275,350.4 277,350.7 279,350.4 281,350.5 283,350.4 285,350.3 287,350.6 289,350.4 291,349.9 293,350.2 295,350.2 297,350.2 299,350.4 301,350.2 303,350.2 305,350.8 305.5,349.5 306,351.8 306.5,350.8 307,350.5 309,350.2 311,350.2 313,349.8 315,350.7 317,350.3 319,349.9 321,350.6 323,350.1 325,350.6 327,350.2 329,350.6 331,350.7 331.5,348.4 332,352.5 332.5,350.7 333,350.8 335,350.3 335.5,349 336,351.3 336.5,350.3 337,350.5 337.5,347.9 338,352.7 338.5,350.5 339,350.5 341,350.7 343,350.4 343.5,348.2 344,352.2 344.5,350.4 345,350.2 347,350.7 349,349.9 351,350.1 353,350.1 355,350.6 357,350.5 359,350.7 361,350.1 363,349.9 365,350.4 367,350.1 367.5,348.7 368,351.3 368.5,350.1 369,350.4 371,350.1 373,350.7 375,350.1 377,350.1 379,350 381,350.2 383,350 385,349.9 387,350.1 389,350.6 391,350.3 393,350.6 395,350.2 397,350.1 399,350.3 401,350.2 403,349.9 405,350.2 407,350.3 409,350 411,350.1 413,350.3 413.5,347.9 414,352.3 414.5,350.3 415,350.2 415.5,348.6 416,351.6 416.5,350.2 417,350 419,350.4 421,350 423,350.1 425,350.6 427,350.5 429,350.5 429.5,349.2 430,351.5 430.5,350.5 431,350 433,350.3 435,350.4 437,350 439,350.6 441,349.8 443,350.1 445,349.9 447,350.2 449,350.1 449.5,348.5 450,351.3 450.5,350.1 451,350.6 453,350.4 455,350.1 457,349.9 459,349.8 461,350.1 463,350.2 465,350 467,350.4 469,350.3 471,350.7 471.5,349.2 472,351.9 472.5,350.7 471.6,341 472.1,357 472.6,345 473.1,353 473,350 475,350.3 477,350.5 479,350.3 479.5,347.6 480,352.4 480.5,350.3 481,349.8 483,349.9 485,350.6 485.5,348.9 486,352 486.5,350.6 487,350.7 489,349.9 491,350.6 493,350 495,350.1 495.5,348.6 496,351.3 496.5,350.1 497,350.2 497.5,348.3 498,351.7 498.5,350.2 499,350.4 501,350.2 503,349.9 505,350.7 507,350.7 509,350.3 510.5,343 511,355 511.5,346 512,352 511,350.4 511.5,348.7 512,351.7 512.5,350.4 513,349.9 515,350.1 517,350.3 517.5,347.9 518,352.3 518.5,350.3 519,350.6 521,350.7 523,349.9 525,350.5 527,350.1 529,350.6 531,350.6 531,337 531.5,361 532,343 532.5,355 533,350.1 535,350.5 537,350.2 539,350.2 541,350.6 543,350.2 545,350.7 545,341 545.5,357 546,345 546.5,353 547,350.1 547.5,348.6 548,351.3 548.5,350.1 549,350.8 549.5,348.1 550,352.9 550.5,350.8 551,350.3 553,350.3 555,350.4 555.5,347.5 556,352.6 556.5,350.4 557,349.9 557.5,347.5 558,351.8 558.5,349.9 559,350.4 561,350.5 563,349.9 563.5,348.2 564,351.2 564.5,349.9 565,350.6 567,350.3 569,350 571,350.7 572,344 572.5,354 573,346.5 573.5,351.5 573,350.2 575,350.1 577,350.6 579,350.1 581,350.3 583,350.2 584,343 584.5,355 585,346 585.5,352 585,350.5 587,350.4 589,350.3 589.6,341 590.1,357 590.6,345 591.1,353 591,349.8 593,350.5 595,350.6 595.5,348.8 596,352.1 596.5,350.6 597,350.5 599,350.2 601,350.4 601.5,349 602,351.6 602.5,350.4 603,349.9 605,350.1 606.7,342 607.2,356 607.7,345.5 608.2,352.5 607,350.2 607.5,347.4 608,352.5 608.5,350.2 609,350.6 611,350.2 613,350.4 615,350.8 617,350.5 619,349.9 619.5,348.1 620,351.3 620.5,349.9 621,349.9 623,350.8 625,350.8 627,350 627.5,348.3 628,351.4 628.5,350 629,349.9 631,350.1 633,350.4 635,350.1 636,339 636.5,359 637,344 637.5,354 637,350.5 639,350.3 641,350.1 641.5,348 642,351.7 642.5,350.1 643,350.4 645,350.7 647,350.7 649,350.3 651,350.1 653,350.8 653.5,349.6 654,351.8 654.5,350.8 655,350.2 657,350.4 657.5,347.7 658,352.6 658.5,350.4 659,350.1 661,350.1 663,350 665,350.4 667,349.9 669,350.5 671,350.7 671.5,348.9 672,352.2 672.5,350.7 673,350.8 675,350.8 677,349.8 679,350.1 681,350.2 683,350.7 685,350.7 687,350.6 687.5,348.7 688,352.2 688.5,350.6 689,350.7 691,350.2 693,350 693,339 693.5,359 694,344 694.5,354 695,350.5 695.5,347.6 696,352.7 696.5,350.5 697,349.9 699,350.1 699.5,348.8 700,351.2 700.5,350.1 701,350.8 703,350.3 705,350.8 707,350.3 709,350.3 711,350.5 713,350.6 715,350.4 717,350 719,349.8 721,350.4 723,350.7 725,350 727,350.4 729,349.8 731,350.5 733,350.1 735,350.7 737,350 737.5,347.4 738,352 738.5,350 739,350.4 741,349.8 743,350 745,350.8 747,349.9 749,349.9 751,350.2 753,350.1 755,350.3 757,350.2 759,350.1 761,350 763,350.4 765,350.7 767,350.5 769,350.2 771,350.4 773,350.3 775,350.5 777,350.2 779,350.3 781,350.7 783,350.4 785,350 787,350.5 789,350.5 791,350.2 793,350.2 795,350.7 797,350.1 799,349.9 801,350.3 803,350.4 805,350.5 805.5,349.1 806,351.5 806.5,350.5 807,349.8 809,349.8 811,350.4 813,350.7 815,350.8 817,350.4 819,350.1 821,349.8 823,350.1 825,350.3 827,350.1 829,350.6 831,350.6 833,350.3 835,350.2 837,350.7 839,350.5 841,349.9 843,350.6 845,350.4 847,350.1 849,350.3 851,350.1 853,349.9 855,350.7 857,349.8 859,349.9 861,350.6 863,350.6 865,349.8 867,350.6 869,350.3 871,350.7 873,350.1 873.5,347.2 874,352.5 874.5,350.1 875,350.2 877,350.6 879,350.8 881,350.7 883,349.9 885,350 887,350.1 889,349.9 891,349.9 893,350.3 895,350.3 897,350.1 899,350.5 901,350.7 903,350.6 905,350.4 907,350.4 909,349.9 911,349.9 913,350.5 915,350.4 917,350.5 919,350.4 921,350.4 923,350.1 925,350.7 927,350.7 929,350.1 931,349.9 933,350.3 935,350.7 937,350.4 939,350.6 941,349.8 943,350.6 945,349.9 947,350.5 949,349.8 951,349.8 953,350.2 955,349.8 957,350 959,350.2 961,350.1 963,350.6 965,350.3 965.5,348.7 966,351.6 966.5,350.3 967,350.7 969,350 971,350.7 973,350.3 975,349.9 977,350.4 979,350.4 981,350.2 983,349.8 985,350.7 987,349.9 989,350 991,350 993,350.6 995,350.2 997,350.1 999,350.5 1001,350.2 1003,350.6 1005,349.9 1007,350.4 1009,350.3 1011,350.6 1013,350.3 1015,350 1017,349.9 1019,350.7 1021,349.9 1023,350.4 1025,349.8 1027,350.4 1029,349.9 1031,350 1033,350.3 1035,350.7 1037,350.2 1039,350.6 1041,350.6 1043,350.5 1045,350.8 1047,350.6 1049,350.4 1051,350 1053,350 1055,350.3 1057,350.5 1059,350.8 1061,350.6 1063,350.5 1065,350.7 1067,350.2 1069,350.3 1071,350.1 1073,350.3 1075,350 1077,350.1 1079,350.3 1081,349.9 1083,350.4 1085,350.1 1087,350.1 1089,350.3 1091,349.8 1093,350 1095,350.2 1097,350.8 1099,350.4 1101,350.4 1103,350.6 1105,349.8 1107,350.3 1109,349.9 1111,350.2 1113,350.1 1115,350.2 1117,350.7 1119,350.1 1121,350.8 1123,350 1125,349.9 1127,350.6 1129,350.6 1131,350.7 1133,350.6 1135,350.7 1137,350.1 1139,350.3 1141,350 1143,350.4 1145,350 1147,350.3 1149,350.1 1151,350.5 1153,350.4 1155,350.8 1157,349.9 1159,350 1161,349.9 1163,350.4 1165,350.3 1167,350.5 1169,350.1 1171,350.7 1173,350.8 1175,350.2 1177,350.1 1179,350.7 1181,350.3 1183,350.7 1185,349.9 1187,350.3 1189,350 1191,350.8 1191.5,348.5 1192,352.6 1192.5,350.8 1193,349.9 1195,350.2 1197,350 1199,350 1201,349.9 1203,350.2 1205,350.2 1207,349.8 1209,350.3 1211,350.4 1213,350.1 1215,350.5 1217,349.9 1219,350.1 1221,350.8 1223,350.7 1225,350.6 1227,350.3 1229,350.4 1231,350 1233,350.4 1235,350.7 1235.5,349.4 1236,351.6 1236.5,350.7 1237,350.8 1239,350.1 1240,344 1240.5,354 1241,346.5 1241.5,351.5 1241,349.9 1243,350.7 1245,350.4 1245.5,348.1 1246,352.2 1246.5,350.4 1247,350.4 1249,350.3 1251,350 1253,349.9 1255,350.1 1257,350.3 1259,350.8 1261,350 1263,350.7 1265,350.2 1267,350.8 1269,350 1271,350.1 1273,350.5 1275,350.3 1277,350.4 1279,350.3 1281,350.1 1283,350.3 1285,350 1287,350.3 1289,350.1 1291,350.7 1293,350 1295,350.4 1297,350.7 1299,350.1 1301,350.5 1303,350.2 1305,350.5 1307,349.9 1309,350.1 1311,350.4 1313,350.7 1315,350.7 1317,350.3 1319,350.3 1321,350.3 1321.5,348.5 1322,351.8 1322.5,350.3 1323,350 1325,350.3 1327,350.7 1329,349.9 1331,350.5 1333,350.5 1335,349.8 1337,350.6 1339,349.8 1341,350.7 1343,350 1345,350.7 1347,350.4 1349,349.9 1351,350.6 1353,349.9 1355,350.5 1355.5,349.2 1356,351.6 1356.5,350.5 1357,350.4 1359,350.4 1361,349.9 1363,350 1365,349.9 1367,349.8 1369,350.4 1371,350.6 1373,350.7 1375,350.7 1377,349.9 1379,350 1381,350.3 1383,350.3 1385,350.5 1387,350.3 1389,350.2 1391,350 1393,350.3 1395,349.9 1397,350.8 1399,350.6 1401,349.9 1403,350.7 1405,349.8 1407,350.4 1409,350.5 1411,350 1413,349.9 1415,350.7 1417,350.3 1419,350.3 1421,350.4 1423,350.2 1425,350.8 1427,350.5 1429,350.7 1431,350.6 1433,350.4 1435,350.1 1437,350.3 1439,350.6 1441,350.2 1443,349.9 1445,350.5 1447,350.3 1449,349.9 1451,350.5 1453,350.3 1455,350 1457,350.1 1459,350.7 1461,350.1 1463,349.9 1465,349.9 1467,350.8 1469,350.2 1471,350.7 1473,350.6 1475,349.9 1477,350.4 1479,350.2 1481,350.3 1483,350.7 1485,349.8 1487,350.4 1489,349.9 1491,350.7 1493,350.3 1495,350 1497,349.9 1499,350.5 1501,350.6 1503,350.6 1505,350.7 1507,350.3 1509,350.6 1511,350.5 1513,350.1 1515,350.7 1517,350.1 1519,349.9 1521,350.1 1523,349.9 1525,350.7 1527,350.2 1528,349 1530,346.5 1550,347 1553,348 1564,348 1564.5,337 1565,357 1565.5,340 1566,355 1567,343 1568,352 1570,346 1572,349 1580,348 1588,346 1592,345 1594,345 1594.5,292 1595.5,300 1596.5,292 1597.5,299 1598,294 1601,292 1601,291.6 1601.5,305.9 1602,294.3 1602.5,308.8 1603,297.2 1603.5,312.4 1604,299.7 1604.5,316.2 1605,303.9 1605.5,320.1 1606,304.8 1606.5,325.3 1607,306.6 1607.5,329.2 1608,307 1608.5,332 1609,306.8 1609.5,337.1 1610,307.8 1610.5,341.2 1611,310.2 1611.5,343.6 1612,312.1 1612.5,347.6 1613,314.2 1613.5,351.1 1614,317.6 1614.5,352.8 1615,317.6 1615.5,355.8 1616,320.4 1616.5,355.1 1617,321.7 1617.5,356.6 1618,324 1618.5,356.7 1619,327.3 1619.5,355.8 1620,328.1 1620.5,357.6 1621,328.7 1621.5,356.9 1622,331.6 1622.5,356.6 1623,332.3 1623.5,359 1624,337.4 1624.5,358.7 1625,335.4 1625.5,357.1 1626,339.5 1626.5,352.1 1627,339.5 1627.5,347.5 1628,348 1632,349 1640,349 1751,349" fill="none" stroke="#e0224a" stroke-width="1.1" stroke-linejoin="round" transform="translate(0.5 0.5)" />
<polyline points="3,477 179,477 179,476 187,476 187,475 192,475 192,474 196,474 196,473 200,473 200,472 204,472 204,471 207,471 207,470 211,470 211,469 215,469 215,468 219,468 219,467 223,467 223,466 230,466 230,465 251,465 251,466 257,466 257,467 272,467 272,468 296,468 296,469 319,469 319,470 471,470 471,469 510,469 510,468 548,468 548,467 583,467 583,466 774,466 774,467 1000,467 1000,468 1183,468 1183,469 1364,469 1364,470 1523,470 1523,471 1591,471 1591,470 1593,470 1593,469 1595,469 1595,468 1597,468 1597,467 1607,467 1607,468 1610,468 1610,469 1613,469 1613,470 1616,470 1616,471 1619,471 1619,472 1628,472 1628,473 1643,473 1643,474 1658,474 1658,475 1673,475 1673,476 1698,476 1698,477 1734,477 1734,478 1751,478" fill="none" stroke="#74c22e" stroke-width="1.05" stroke-linejoin="round" transform="translate(0.5 0.5)" />
<polyline points="3,745 55,745 55,654 66,654 70,644 70.5,652 71,654 76,654 76.5,643 78,647 80,650 84,653 88,654 113,654 114,649 115,654 165,654 166,651 167,654 582,654 583,651 584,654 636,654 637,643 638,653 639,654 1238,654 1239,652 1240,654 1564,654 1565,643 1566,654 1593,654 1594,643 1596,643 1600,651 1604,653 1605,652.5 1606,651.3 1607,652.5 1608,650.2 1609,651.3 1610,650.1 1611,652.3 1612,649.8 1613,651.6 1614,651.2 1615,650.3 1616,649.3 1617,650.9 1618,651.1 1619,652.3 1620,649.8 1621,649.7 1622,650.2 1623,652.2 1624,649.9 1625,651.5 1627,654 1751,654" fill="none" stroke="#1c1cb8" stroke-width="1.05" stroke-linejoin="round" transform="translate(0.5 0.5)" />
<polyline points="42,863 59,863 59,862 67,862 67,861 75,861 75,860 82,860 82,859 90,859 90,858 98,858 98,857 105,857 105,856 113,856 113,855 121,855 121,854 128,854 128,853 136,853 136,852 144,852 144,851 151,851 151,850 159,850 159,849 167,849 167,848 174,848 174,847 182,847 182,846 190,846 190,845 197,845 197,844 205,844 205,843 213,843 213,842 221,842 221,841 228,841 228,840 237,840 237,839 246,839 246,838 254,838 254,837 263,837 263,836 272,836 272,835 281,835 281,834 290,834 290,833 299,833 299,832 308,832 308,831 317,831 317,830 326,830 326,829 334,829 334,828 343,828 343,827 352,827 352,826 361,826 361,825 370,825 370,824 379,824 379,823 388,823 388,822 397,822 397,821 405,821 405,820 416,820 416,819 427,819 427,818 438,818 438,817 449,817 449,816 460,816 460,815 471,815 471,814 482,814 482,813 493,813 493,812 504,812 504,811 515,811 515,810 526,810 526,809 537,809 537,808 548,808 548,807 559,807 559,806 570,806 570,805 580,805 580,804 593,804 593,803 606,803 606,802 619,802 619,801 632,801 632,800 645,800 645,799 658,799 658,798 671,798 671,797 684,797 684,796 697,796 697,795 710,795 710,794 723,794 723,793 736,793 736,792 749,792 749,791 763,791 763,790 779,790 779,789 795,789 795,788 810,788 810,787 826,787 826,786 841,786 841,785 857,785 857,784 873,784 873,783 891,783 891,782 912,782 912,781 933,781 933,780 963,780 963,779 993,779 993,778 1022,778 1022,777 1052,777 1052,776 1082,776 1082,775 1113,775 1113,774 1150,774 1150,773 1187,773 1187,772 1225,772 1225,771 1262,771 1262,770 1482,770 1482,771 1535,771 1535,772 1588,772 1588,773 1639,773 1639,774 1684,774 1684,775 1729,775 1729,776 1751,776" fill="none" stroke="#e8861c" stroke-width="1.05" stroke-linejoin="round" transform="translate(0.5 0.5)" />
<polyline points="3,978 55,978 56,977.5 58,977.2 60,977.6 62,977.7 64,977.3 66,977.4 68,978 70,977.9 72,978 74,977.9 76,977.9 78,977.5 80,978 82,978.1 84,977.9 86,977.7 88,977.4 90,978 92,978.3 94,978.1 96,978.2 98,978.2 100,977.9 102,977.4 104,977.8 106,977.5 108,977.7 110,977.2 112,976.9 114,976.8 116,977.2 118,977.5 120,978.1 122,978.2 124,978.2 126,977.7 128,978.2 130,978.1 132,978.5 134,977.9 136,978.3 138,978.2 140,977.9 142,977.8 144,977.4 146,977.6 148,977.4 150,977.7 152,977.5 154,977.8 156,977.9 158,978.1 160,978.6 162,978.3 164,978.4 166,978 168,977.8 170,977.5 172,977.1 174,976.5 176,975.6 178,975.5 180,975.3 182,975 184,974.1 186,973.7 188,973.2 190,972.8 192,972.4 194,971.6 196,970.8 198,970.5 200,970 202,969.3 204,969.1 206,967.9 208,966.9 210,966.4 212,965.5 214,965.5 216,964.6 218,964.6 220,963.8 222,963 224,962.9 226,962.6 228,962 230,961.6 232,961.3 234,961.4 236,961 238,960.6 240,960.1 242,959.6 244,959.5 246,958.7 248,958.6 250,958.6 252,958.4 254,958 256,957.4 258,956.6 260,955.9 262,955.7 264,955.8 266,955.8 268,955.1 270,955 272,954.9 274,954.4 276,954.3 278,953.5 280,953 282,952.6 284,952.5 286,952.1 288,951.5 290,951.5 292,951 294,950.6 296,949.9 298,949.6 300,949.5 302,949.1 304,949 306,948.7 308,948 310,948.2 312,947.7 314,947.5 316,947.7 318,947.1 320,946.3 322,945.9 324,945.4 326,945.6 328,945.4 330,944.7 332,944.4 334,944.2 336,943.8 337,944.4 337.2,948.4 338,947.1 340,946.7 342,945.8 344,944.6 346,943.9 348,942.6 350,942.2 352,942.1 354,941.5 356,941.4 358,941 360,941.1 362,941 364,941.1 366,940.9 368,940.2 370,939.6 372,939.6 374,939.6 376,938.9 378,938.6 380,938.1 382,937.9 384,938 384.2,942 384,942.1 386,941.1 388,940.3 390,939.5 392,938.2 394,937.3 396,936.1 398,935.7 400,935.4 402,935.2 404,934.5 406,934.6 408,934.1 410,933.8 412,934.1 414,934.4 416,934 418,934.2 420,933.4 422,933.7 424,933.2 426,932.5 428,932.7 430,932.2 432,932.4 434,931.7 436,931.3 438,931.2 440,930.8 442,930.8 444,930.7 446,930.9 448,930.8 450,931.2 452,931.4 453.5,930.8 453.7,933.8 454,933.7 456,933.4 458,933.1 460,932.3 462,931.6 464,930.5 466,929.7 468,929.3 470,928.9 472,929.4 472.2,936.4 472,936 474,934.6 476,933.7 478,932.5 480,931.5 482,929.8 484,928.8 486,928.7 488,928.7 490,928.2 492,928.3 494,928 495.5,927.9 495.7,931.9 496,932 498,931.2 500,930 502,929 504,928.5 506,927.3 508,926.9 510,926.8 511,926.9 511.2,931.9 512,931.5 514,930.4 516,929.4 518,928.5 520,927.8 522,926.4 524,925.9 526,925.6 528,925.6 530,925.3 531.4,925.6 531.6,931.6 532,930.7 534,929.4 536,928.8 538,927.6 540,926.9 542,926 544,924.9 545,924.8 545.2,930.8 546,930.3 548,928.7 550,928.1 552,927.1 554,925.5 556,924.4 558,923.8 560,923.9 562,923.6 564,923.9 566,923.8 568,923.2 570,923.4 572,923.6 574,923.2 576,923.3 578,923.4 580,923.5 582,922.8 584,922.9 586,922.4 588,922.5 589,921.9 589.2,926.9 590,927 592,925.9 594,925.2 596,924.4 598,923.8 600,923 602,922.2 604,922.1 606,921.8 607,920.6 607.2,925.6 608,926 610,924.8 612,923.7 614,922.4 616,921.1 618,920.5 620,920.2 622,920.2 624,920.1 626,919.8 628,919.6 630,919.6 632,918.8 633,918.8 633.2,922.8 634,922.3 636,921.9 638,920.8 640,919.9 642,918.7 644,917.7 646,917.7 648,917.1 650,917.4 652,917.5 654,917.7 656,917.2 658,917.5 660,917.1 662,916.9 664,917.1 666,916.9 668,916.8 670,916.2 672,915.5 674,915.2 676,914.8 678,915.1 680,914.8 682,915.2 684,915.3 686,914.8 688,914.9 690,914.5 692,914.4 693,914.4 693.2,920.4 694,919.4 696,918.6 698,917.8 700,916.7 702,915.6 704,914.3 706,913.2 708,912.9 710,913.1 712,913 714,912.5 716,912.2 718,912.1 720,911.5 722,911.1 724,911.1 726,910.8 728,911.3 730,910.9 732,911.1 734,911.3 736,911 738,911 740,911.3 742,911.2 744,910.9 746,911.1 748,910.6 750,910.9 752,910.4 754,910.1 756,909.7 758,909.7 760,910 762,909.9 764,909.4 766,909.7 768,909.6 770,909.4 772,909.5 774,908.8 776,908.7 778,908.8 780,908.8 782,908.7 784,908 786,907.8 788,907.5 790,907.5 792,907.2 794,907.1 796,907 798,907 800,907.2 802,906.8 804,906.4 806,906 808,905.6 810,905.9 812,906.2 814,905.7 816,905.5 818,905.8 820,906 822,906.2 824,906.4 826,905.8 828,905.1 830,904.7 832,904.6 834,904 836,903.7 838,903.7 840,903.9 842,903.5 844,903.1 846,902.9 848,902.5 850,902.3 852,902 854,902.4 856,902.8 858,902.3 860,902.6 862,902.9 864,902.8 866,902.5 868,902.6 870,902 872,901.5 874,901.9 876,901.5 878,901.8 880,901.9 882,901.2 884,900.7 886,900.9 888,900.4 890,900.6 892,900.7 894,900.3 896,900.2 898,899.8 900,900.2 902,900.2 904,900.2 906,900.2 908,899.5 910,899.8 912,899.9 914,899.7 916,899.6 918,899.4 920,899.5 922,899.3 924,898.8 926,898.7 928,898.2 930,897.7 932,897.7 934,898.1 936,898.2 938,897.8 940,897.7 942,897.7 944,897.7 946,897.6 948,897.5 950,897.6 952,897.8 954,897.6 956,897.7 958,897.7 960,897 962,896.7 964,896.4 966,896.2 968,896.2 970,895.9 972,896.4 974,896.5 976,896.2 978,896.3 980,896.6 982,896 984,896 986,896.3 988,895.9 990,896.1 992,896.2 994,895.8 996,895.2 998,895.4 1000,895.1 1002,894.9 1004,894.7 1006,894.9 1008,895.3 1010,895.6 1012,895.7 1014,895.2 1016,895 1018,894.4 1020,894.2 1022,894.2 1024,894 1026,894.1 1028,893.9 1030,894.2 1032,894.2 1034,894.1 1036,894.4 1038,894.3 1040,894 1042,894.5 1044,894.8 1046,895.2 1048,894.9 1050,894.7 1052,894.9 1054,894.5 1056,895.1 1058,895.2 1060,895.2 1062,894.7 1064,894.5 1066,894.5 1068,895.1 1070,894.7 1072,894.8 1074,894.4 1076,895 1078,895.2 1080,895.5 1082,895.6 1084,895.2 1086,894.9 1088,894.4 1090,894.6 1092,894.3 1094,894.1 1096,893.9 1098,894.6 1100,895 1102,894.8 1104,895.3 1106,894.9 1108,894.5 1110,894.4 1112,894.8 1114,894.4 1116,894.8 1118,894.8 1120,895.1 1122,894.8 1124,894.3 1126,894 1128,894.3 1130,894.3 1132,894.6 1134,894.3 1136,894.1 1138,893.9 1140,894.3 1142,894.5 1144,894.1 1146,894.4 1148,893.9 1150,893.9 1152,893.7 1154,894.1 1156,894.3 1158,894.5 1160,894.1 1162,893.6 1164,893.8 1166,894.1 1168,893.5 1170,894 1172,894.3 1174,894.1 1176,894.1 1178,894.2 1180,894.5 1182,894.5 1184,894.4 1186,894.5 1188,894.3 1190,893.7 1192,893.7 1194,893.6 1196,893.4 1198,893.3 1200,893.1 1202,893 1204,893.3 1206,893.7 1208,893.6 1210,893.9 1212,893.4 1214,893.4 1216,893.6 1218,893.8 1220,893.6 1222,893.1 1224,893.6 1226,893.6 1228,893.6 1230,893.4 1232,892.9 1234,893 1236,892.9 1238,893.3 1240,893.4 1242,893.5 1244,893.4 1246,893.6 1248,893 1250,893.5 1252,893.4 1254,893.3 1256,892.9 1258,892.4 1260,892.7 1262,892.9 1264,893 1266,892.6 1268,892.6 1270,892.8 1272,892.9 1274,893.2 1276,892.6 1278,892.8 1280,892.2 1282,892.4 1284,892.5 1286,892 1288,892.1 1290,892.3 1292,892.7 1294,892.3 1296,892.4 1298,892.7 1300,892.3 1302,892.8 1304,893.2 1306,892.9 1308,892.6 1310,892.3 1312,892.1 1314,892.1 1316,892.5 1318,893 1320,893 1322,893.4 1324,893.2 1326,893.3 1328,892.7 1330,892.7 1332,892.2 1334,892 1336,892.5 1338,892.2 1340,892.1 1342,892.3 1344,892.5 1346,892.1 1348,891.9 1350,892.3 1352,892.4 1354,892.1 1356,892.3 1358,892.4 1360,893.1 1362,892.8 1364,892.6 1366,892.5 1368,892.8 1370,893.5 1372,893.9 1374,893.5 1376,893.7 1378,893.7 1380,894.3 1382,894.5 1384,894.7 1386,894.4 1388,894.4 1390,894.5 1392,894.5 1394,894.6 1396,894.3 1398,894.4 1400,895.1 1402,895 1404,895.1 1406,895.4 1408,895.8 1410,896 1412,895.8 1414,896 1416,895.7 1418,895.9 1420,895.4 1422,895.3 1424,895.1 1426,895.2 1428,895.7 1430,895.4 1432,896 1434,895.7 1436,896.4 1438,896.9 1440,897 1442,897.4 1444,897.8 1446,897.6 1448,897.9 1450,897.3 1452,897.7 1454,897.9 1456,898.2 1458,897.8 1460,897.5 1462,897.7 1464,898 1466,898.4 1468,898.2 1470,898.4 1472,899.1 1474,898.9 1476,899.3 1478,899.9 1480,900 1482,900 1484,899.9 1486,900 1488,899.7 1490,899.4 1492,899.5 1494,899.4 1496,900.2 1498,900.2 1500,900.8 1502,901 1504,901.6 1506,902 1508,902.2 1510,902.1 1512,901.9 1514,902.1 1516,902 1518,902.4 1520,902.1 1522,902.4 1524,902.4 1526,902.5 1528,902.7 1530,903.4 1532,904.2 1534,904.2 1536,904.9 1538,905.6 1540,905.7 1542,906 1544,905.9 1546,906.5 1548,906.7 1550,907.2 1552,907.9 1554,908.2 1556,908.6 1558,908.8 1560,908.7 1562,908.9 1564,908.8 1566,908.9 1568,909.9 1570,910.1 1572,910.2 1574,910.5 1576,910.5 1578,911.2 1580,911.4 1582,911.6 1584,912.2 1586,913.1 1588,913 1590,913.7 1592,914.2 1593,914.4 1594,960.2 1597,963 1605,966 1615,972 1622,974 1630,973.5 1751,973" fill="none" stroke="#62268a" stroke-width="1.05" stroke-linejoin="round" transform="translate(0.5 0.5)" />
<polygon points="45,58 65,58 55,68" fill="#f28c22"/>
<text x="102.3" y="121.5" font-size="19.6" fill="#111" letter-spacing="0" textLength="96.3" lengthAdjust="spacingAndGlyphs" stroke="#111" stroke-width="0.3">U_loop,coil</text>
<text x="102.3" y="238.5" font-size="19.6" fill="#1ab8c2" letter-spacing="0" textLength="75.5" lengthAdjust="spacingAndGlyphs" stroke="#1ab8c2" stroke-width="0.3">U_Bt,coil</text>
<text x="54.4" y="355.5" font-size="19.6" fill="#c8203e" letter-spacing="0" textLength="91" lengthAdjust="spacingAndGlyphs" stroke="#5a1020" stroke-width="0.5">U_Rog,coil</text>
<text x="102" y="473" font-size="19.6" fill="#6cb428" letter-spacing="0" textLength="85.5" lengthAdjust="spacingAndGlyphs" stroke="#6cb428" stroke-width="0.3">U_Photod</text>
<text x="54" y="590.5" font-size="19.6" fill="#e8861c" letter-spacing="0" textLength="101.5" lengthAdjust="spacingAndGlyphs" stroke="#e8861c" stroke-width="0.3">U_Diamagn</text>
<text x="100.7" y="707" font-size="19.6" fill="#2222a8" letter-spacing="0" textLength="62.6" lengthAdjust="spacingAndGlyphs" stroke="#2222a8" stroke-width="0.3">Trigger</text>
<text x="55" y="863" font-size="26.5" fill="#e8861c" letter-spacing="0" textLength="38" lengthAdjust="spacingAndGlyphs" stroke="#e8861c" stroke-width="0.4">B_t</text>
<text x="53.5" y="988" font-size="26.5" fill="#62268a" letter-spacing="0" textLength="26" lengthAdjust="spacingAndGlyphs" stroke="#62268a" stroke-width="0.4">I_p</text>
<path d="M8 102.5H76.5L84 115.5L76.5 128.5H8Q6 128.5 6 126.5V104.5Q6 102.5 8 102.5Z" fill="#e6e6e6" stroke="#222" stroke-width="2"/>
<rect x="32" y="102.5" width="2" height="26" fill="#222"/>
<text x="19" y="119.7" font-size="11.6" text-anchor="middle" fill="#222" stroke="#222" stroke-width="0.2">C 1</text>
<text x="57.5" y="119.7" font-size="11.6" text-anchor="middle" fill="#222" stroke="#222" stroke-width="0.2">20 V</text>
<path d="M8 219.5H76.5L84 232.5L76.5 245.5H8Q6 245.5 6 243.5V221.5Q6 219.5 8 219.5Z" fill="#e6f7f8" stroke="#20c0c8" stroke-width="2"/>
<rect x="32" y="219.5" width="2" height="26" fill="#20c0c8"/>
<text x="19" y="236.7" font-size="11.6" text-anchor="middle" fill="#222" stroke="#222" stroke-width="0.2">C 2</text>
<text x="57.5" y="236.7" font-size="11.6" text-anchor="middle" fill="#222" stroke="#222" stroke-width="0.2">300 mV</text>
<path d="M8 453.3H76.5L84 466.3L76.5 479.3H8Q6 479.3 6 477.3V455.3Q6 453.3 8 453.3Z" fill="#f1f8e9" stroke="#78c232" stroke-width="2"/>
<rect x="32" y="453.3" width="2" height="26" fill="#78c232"/>
<text x="19" y="470.5" font-size="11.6" text-anchor="middle" fill="#222" stroke="#222" stroke-width="0.2">C 4</text>
<text x="57.5" y="470.5" font-size="11.6" text-anchor="middle" fill="#222" stroke="#222" stroke-width="0.2">200 mV</text>
<path d="M8 687.5H76.5L84 700.5L76.5 713.5H8Q6 713.5 6 711.5V689.5Q6 687.5 8 687.5Z" fill="#e8e8f6" stroke="#151515" stroke-width="2"/>
<path d="M8 688.5H32V712.5H8Q7 712.5 7 710.5V690.5Q7 688.5 8 688.5Z" fill="#2424c4"/>
<rect x="32" y="687.5" width="2" height="26" fill="#151515"/>
<text x="19" y="704.7" font-size="11.6" text-anchor="middle" fill="#fff" stroke="#fff" stroke-width="0.2">C 6</text>
<text x="57.5" y="704.7" font-size="11.6" text-anchor="middle" fill="#2424b0" stroke="#2424b0" stroke-width="0.2">3 V</text>
<path d="M8 337.3H35L42.5 349.8L35 362.3H8Q6 362.3 6 360.3V339.3Q6 337.3 8 337.3Z" fill="#fde9ed" stroke="#ea7088" stroke-width="1.5"/><text x="23" y="354.0" font-size="11.6" text-anchor="middle" fill="#e05070" stroke="#e05070" stroke-width="0.2">C 3</text>
<path d="M8 571.0H35L42.5 583.5L35 596.0H8Q6 596.0 6 594.0V573.0Q6 571.0 8 571.0Z" fill="#fff1e2" stroke="#f2a455" stroke-width="1.5"/><text x="23" y="587.7" font-size="11.6" text-anchor="middle" fill="#222" stroke="#222" stroke-width="0.2">C 5</text>
<path d="M8 850.5H35L42.5 863L35 875.5H8Q6 875.5 6 873.5V852.5Q6 850.5 8 850.5Z" fill="#fdf0e4" stroke="#f2a455" stroke-width="1.5"/><text x="23" y="867.2" font-size="11.6" text-anchor="middle" fill="#111" stroke="#111" stroke-width="0.2">M 1</text>
<path d="M8 966.0H35L42.5 978.5L35 991.0H8Q6 991.0 6 989.0V968.0Q6 966.0 8 966.0Z" fill="#f1e8f5" stroke="#b888d0" stroke-width="1.5"/><text x="23" y="982.7" font-size="11.6" text-anchor="middle" fill="#6a3a9a" stroke="#6a3a9a" stroke-width="0.2">M 2</text>
<path d="M46 644.5H64V663.5H58.5L55 668.5L51.5 663.5H46Z" fill="#000" stroke="#f28c22" stroke-width="2"/>
<text x="55" y="660" text-anchor="middle" font-weight="700" font-size="14" fill="#f28c22">T</text>
<text x="1746" y="96.9" font-size="13.4" text-anchor="end" fill="#111" stroke="#111" stroke-width="0.25">30 V</text>
<text x="1746" y="119.9" font-size="13.4" text-anchor="end" fill="#111" stroke="#111" stroke-width="0.25">20 V</text>
<text x="1746" y="142.9" font-size="13.4" text-anchor="end" fill="#111" stroke="#111" stroke-width="0.25">10 V</text>
<text x="1746" y="165.9" font-size="13.4" text-anchor="end" fill="#111" stroke="#111" stroke-width="0.25">0 V</text>
<text x="1746" y="193.9" font-size="13.4" text-anchor="end" fill="#1ab8c2" stroke="#1ab8c2" stroke-width="0.2" filter="url(#sh)">1.25 V</text>
<text x="1746" y="216.9" font-size="13.4" text-anchor="end" fill="#1ab8c2" stroke="#1ab8c2" stroke-width="0.2" filter="url(#sh)">750 mV</text>
<text x="1746" y="239.9" font-size="13.4" text-anchor="end" fill="#1ab8c2" stroke="#1ab8c2" stroke-width="0.2" filter="url(#sh)">250 mV</text>
<text x="1746" y="262.9" font-size="13.4" text-anchor="end" fill="#1ab8c2" stroke="#1ab8c2" stroke-width="0.2" filter="url(#sh)">-250 mV</text>
<text x="1746" y="285.9" font-size="13.4" text-anchor="end" fill="#1ab8c2" stroke="#1ab8c2" stroke-width="0.2" filter="url(#sh)">-750 mV</text>
<text x="1746" y="307.9" font-size="13.4" text-anchor="end" fill="#d42a48" stroke="#d42a48" stroke-width="0.2" filter="url(#sh)">1.80 V</text>
<text x="1746" y="330.9" font-size="13.4" text-anchor="end" fill="#d42a48" stroke="#d42a48" stroke-width="0.2" filter="url(#sh)">900 mV</text>
<text x="1746" y="353.9" font-size="13.4" text-anchor="end" fill="#d42a48" stroke="#d42a48" stroke-width="0.2" filter="url(#sh)">0 V</text>
<text x="1746" y="376.9" font-size="13.4" text-anchor="end" fill="#d42a48" stroke="#d42a48" stroke-width="0.2" filter="url(#sh)">-900 mV</text>
<text x="1746" y="399.9" font-size="13.4" text-anchor="end" fill="#d42a48" stroke="#d42a48" stroke-width="0.2" filter="url(#sh)">-1.80 V</text>
<text x="1746" y="424.9" font-size="13.4" text-anchor="end" fill="#6cb428" stroke="#6cb428" stroke-width="0.2" filter="url(#sh)">1 V</text>
<text x="1746" y="447.9" font-size="13.4" text-anchor="end" fill="#6cb428" stroke="#6cb428" stroke-width="0.2" filter="url(#sh)">600 mV</text>
<text x="1746" y="470.9" font-size="13.4" text-anchor="end" fill="#6cb428" stroke="#6cb428" stroke-width="0.2" filter="url(#sh)">200 mV</text>
<text x="1746" y="493.9" font-size="13.4" text-anchor="end" fill="#6cb428" stroke="#6cb428" stroke-width="0.2" filter="url(#sh)">-200 mV</text>
<text x="1746" y="516.9" font-size="13.4" text-anchor="end" fill="#6cb428" stroke="#6cb428" stroke-width="0.2" filter="url(#sh)">-600 mV</text>
<text x="1746" y="541.9" font-size="13.4" text-anchor="end" fill="#e8861c" stroke="#e8861c" stroke-width="0.2" filter="url(#sh)">4 V</text>
<text x="1746" y="564.9" font-size="13.4" text-anchor="end" fill="#e8861c" stroke="#e8861c" stroke-width="0.2" filter="url(#sh)">2 V</text>
<text x="1746" y="587.9" font-size="13.4" text-anchor="end" fill="#e8861c" stroke="#e8861c" stroke-width="0.2" filter="url(#sh)">0 V</text>
<text x="1746" y="610.9" font-size="13.4" text-anchor="end" fill="#e8861c" stroke="#e8861c" stroke-width="0.2" filter="url(#sh)">-2 V</text>
<text x="1746" y="633.9" font-size="13.4" text-anchor="end" fill="#e8861c" stroke="#e8861c" stroke-width="0.2" filter="url(#sh)">-4 V</text>
<text x="1746" y="658.9" font-size="13.4" text-anchor="end" fill="#2222b4" stroke="#2222b4" stroke-width="0.2" filter="url(#sh)">6 V</text>
<text x="1746" y="681.9" font-size="13.4" text-anchor="end" fill="#2222b4" stroke="#2222b4" stroke-width="0.2" filter="url(#sh)">4.50 V</text>
<text x="1746" y="704.9" font-size="13.4" text-anchor="end" fill="#2222b4" stroke="#2222b4" stroke-width="0.2" filter="url(#sh)">3 V</text>
<text x="1746" y="727.9" font-size="13.4" text-anchor="end" fill="#2222b4" stroke="#2222b4" stroke-width="0.2" filter="url(#sh)">1.50 V</text>
<text x="1746" y="750.9" font-size="13.4" text-anchor="end" fill="#2222b4" stroke="#2222b4" stroke-width="0.2" filter="url(#sh)">0 V</text>
<text x="1746" y="775.9" font-size="13.4" text-anchor="end" fill="#e8861c" stroke="#e8861c" stroke-width="0.2" filter="url(#sh)">583.065 mT</text>
<text x="1746" y="798.9" font-size="13.4" text-anchor="end" fill="#e8861c" stroke="#e8861c" stroke-width="0.2" filter="url(#sh)">437.299 mT</text>
<text x="1746" y="821.9" font-size="13.4" text-anchor="end" fill="#e8861c" stroke="#e8861c" stroke-width="0.2" filter="url(#sh)">291.533 mT</text>
<text x="1746" y="844.9" font-size="13.4" text-anchor="end" fill="#e8861c" stroke="#e8861c" stroke-width="0.2" filter="url(#sh)">145.766 mT</text>
<text x="1746" y="867.9" font-size="13.4" text-anchor="end" fill="#e8861c" stroke="#e8861c" stroke-width="0.2" filter="url(#sh)">0 T</text>
<text x="1746" y="890.9" font-size="13.4" text-anchor="end" fill="#5a2a7a" stroke="#5a2a7a" stroke-width="0.2" filter="url(#sh)">5.993000 kA</text>
<text x="1746" y="913.9" font-size="13.4" text-anchor="end" fill="#5a2a7a" stroke="#5a2a7a" stroke-width="0.2" filter="url(#sh)">4.494750 kA</text>
<text x="1746" y="936.9" font-size="13.4" text-anchor="end" fill="#5a2a7a" stroke="#5a2a7a" stroke-width="0.2" filter="url(#sh)">2.996500 kA</text>
<text x="1746" y="959.9" font-size="13.4" text-anchor="end" fill="#5a2a7a" stroke="#5a2a7a" stroke-width="0.2" filter="url(#sh)">1.498250 kA</text>
<text x="1746" y="982.9" font-size="13.4" text-anchor="end" fill="#5a2a7a" stroke="#5a2a7a" stroke-width="0.2" filter="url(#sh)">0 A</text>
<path d="M1730 700.5L1741.5 690V698.5H1751V702.5H1741.5V711Z" fill="#2424c0"/>
<text x="55.5" y="752" font-size="13.4" text-anchor="middle" fill="#2a2a2a" stroke="#2a2a2a" stroke-width="0.35" filter="url(#sh2)">0 s</text>
<text x="230.5" y="752" font-size="13.4" text-anchor="middle" fill="#2a2a2a" stroke="#2a2a2a" stroke-width="0.35" filter="url(#sh2)">4 ms</text>
<text x="405.5" y="752" font-size="13.4" text-anchor="middle" fill="#2a2a2a" stroke="#2a2a2a" stroke-width="0.35" filter="url(#sh2)">8 ms</text>
<text x="580.5" y="752" font-size="13.4" text-anchor="middle" fill="#2a2a2a" stroke="#2a2a2a" stroke-width="0.35" filter="url(#sh2)">12 ms</text>
<text x="755.5" y="752" font-size="13.4" text-anchor="middle" fill="#2a2a2a" stroke="#2a2a2a" stroke-width="0.35" filter="url(#sh2)">16 ms</text>
<text x="929.5" y="752" font-size="13.4" text-anchor="middle" fill="#2a2a2a" stroke="#2a2a2a" stroke-width="0.35" filter="url(#sh2)">20 ms</text>
<text x="1104.5" y="752" font-size="13.4" text-anchor="middle" fill="#2a2a2a" stroke="#2a2a2a" stroke-width="0.35" filter="url(#sh2)">24 ms</text>
<text x="1279.5" y="752" font-size="13.4" text-anchor="middle" fill="#2a2a2a" stroke="#2a2a2a" stroke-width="0.35" filter="url(#sh2)">28 ms</text>
<text x="1454.5" y="752" font-size="13.4" text-anchor="middle" fill="#2a2a2a" stroke="#2a2a2a" stroke-width="0.35" filter="url(#sh2)">32 ms</text>
<text x="1629.5" y="752" font-size="13.4" text-anchor="middle" fill="#2a2a2a" stroke="#2a2a2a" stroke-width="0.35" filter="url(#sh2)">36 ms</text>
<path d="M1711 65H1742Q1744.5 65 1744.5 67.5V97Q1744.5 99.5 1742 97.5L1710 66.5Q1709 65 1711 65Z" fill="#4c4c4c" stroke="#111" stroke-width="1.5"/>
<circle cx="1737" cy="71.3" r="4" fill="none" stroke="#9a9a9a" stroke-width="1.4"/><line x1="1733.8" y1="74.5" x2="1727.5" y2="81" stroke="#9a9a9a" stroke-width="2.4" stroke-linecap="round"/>
</svg>
<svg class="a" style="left:1755px;top:498px" width="14" height="28"><circle cx="7" cy="6" r="2.2" fill="#aaa"/><circle cx="7" cy="14" r="2.2" fill="#aaa"/><circle cx="7" cy="22.5" r="2.2" fill="#aaa"/></svg>
<div class="a" style="left:1769px;top:29px;width:160px;height:967px;border:1px solid #5f5851"></div>
<div class="a" style="left:1770px;top:30px;width:150px;text-align:center;color:#ececec;font-size:15.5px;font-weight:700;letter-spacing:0.6px">Add New...</div>
<div class="btn" style="left:1778px;top:54px;width:63px;height:37px">Cursors</div>
<div class="btn" style="left:1850px;top:54px;width:63px;height:37px">Callout</div>
<div class="btn" style="left:1778px;top:100px;width:63px;height:37px">Measure</div>
<div class="btn" style="left:1850px;top:100px;width:63px;height:37px">Search</div>
<div class="btn" style="left:1778px;top:146px;width:63px;height:37px">Results<br>Table</div>
<div class="btn" style="left:1850px;top:146px;width:63px;height:37px">Plot</div>
<div class="btn" style="left:1778px;top:196px;width:63px;height:37px"></div>
<div class="btn" style="left:1850px;top:196px;width:63px;height:37px">More...</div>
<div class="a" style="left:1773px;top:189px;width:144px;height:1px;background:#5f5851"></div>
<div class="a" style="left:1773px;top:241px;width:144px;height:1px;background:#5f5851"></div>
<svg class="a" style="left:1790px;top:198px" width="40" height="34">
<rect x="7.5" y="4.5" width="23" height="19" fill="none" stroke="#b4b4b4" stroke-width="2" stroke-dasharray="3 2.2"/>
<circle cx="20" cy="12" r="5" fill="none" stroke="#c0c0c0" stroke-width="1.8"/>
<line x1="16.3" y1="15.8" x2="11" y2="21" stroke="#c0c0c0" stroke-width="2.4" stroke-linecap="round"/>
<path d="M25 17L33 24.5L29.5 25L32 30L30 31L27.5 26L25 28.5Z" fill="#c0c0c0"/>
</svg>
<div class="badge" style="left:3px;top:984px;height:94.6px;border-radius:5px 5px 5px 5px">
<div class="bh" style="top:0;background:#1e1e1e;color:#ece23a">Ch 1</div>
<div class="a" style="left:0;top:19px;width:90px;height:2px;background:#b4bcbc"></div>
<div class="a" style="left:0;top:21px;width:90px;height:17px;background:#ff0000;color:#fff;font-size:15.3px;line-height:15px;padding-left:16.5px">Clipping</div>
</div>
<svg class="a" style="left:3px;top:1006px" width="17" height="16"><path d="M8 1L15.5 14.5H0.5Z" fill="#f2ee00" stroke="#2a2a60" stroke-width="1"/><line x1="8" y1="5" x2="8" y2="12" stroke="#8a8a30" stroke-width="1.3"/></svg>
<div class="bl a" style="left:9px;top:1022px;">5 V/div</div>
<div class="bl a" style="left:9px;top:1041px;">1 MΩ</div>
<div class="bl a" style="left:9px;top:1060px;">200 kHz</div>
<div class="a" style="left:75px;top:1061px;font-size:9px;color:#111;line-height:9px">B</div><div class="a" style="left:80.5px;top:1065px;font-size:9px;color:#111;line-height:9px">w</div>
<div class="badge" style="left:98px;top:984px;height:94.6px;border-radius:5px 5px 5px 5px">
<div class="bh" style="top:0;background:#1c4244;color:#26c6d0">Ch 2</div>
<div class="a" style="left:0;top:19px;width:90px;height:2px;background:#b4bcbc"></div>
<div class="a" style="left:0;top:21px;width:90px;height:17px;background:#ff0000;color:#fff;font-size:15.3px;line-height:15px;padding-left:16.5px">Clipping</div>
</div>
<svg class="a" style="left:98px;top:1006px" width="17" height="16"><path d="M8 1L15.5 14.5H0.5Z" fill="#f2ee00" stroke="#2a2a60" stroke-width="1"/><line x1="8" y1="5" x2="8" y2="12" stroke="#8a8a30" stroke-width="1.3"/></svg>
<div class="bl a" style="left:104px;top:1022px;">250 mV/div</div>
<div class="bl a" style="left:104px;top:1041px;">1 MΩ</div>
<div class="bl a" style="left:104px;top:1060px;">200 kHz</div>
<div class="a" style="left:170px;top:1061px;font-size:9px;color:#111;line-height:9px">B</div><div class="a" style="left:175.5px;top:1065px;font-size:9px;color:#111;line-height:9px">w</div>
<div class="badge" style="left:193px;top:984px;height:94.6px;border-radius:5px 5px 5px 5px">
<div class="bh" style="top:0;background:#47262b;color:#f2f2f2">Ch 3</div>
<div class="a" style="left:0;top:19px;width:90px;height:2px;background:#b4bcbc"></div>
<div class="a" style="left:0;top:21px;width:90px;height:17px;background:#ff0000;color:#fff;font-size:15.3px;line-height:15px;padding-left:16.5px">Clipping</div>
</div>
<svg class="a" style="left:193px;top:1006px" width="17" height="16"><path d="M8 1L15.5 14.5H0.5Z" fill="#f2ee00" stroke="#2a2a60" stroke-width="1"/><line x1="8" y1="5" x2="8" y2="12" stroke="#8a8a30" stroke-width="1.3"/></svg>
<div class="bl a" style="left:199px;top:1022px;">450 mV/div</div>
<div class="bl a" style="left:199px;top:1041px;">1 MΩ</div>
<div class="bl a" style="left:199px;top:1060px;">200 kHz</div>
<div class="a" style="left:265px;top:1061px;font-size:9px;color:#111;line-height:9px">B</div><div class="a" style="left:270.5px;top:1065px;font-size:9px;color:#111;line-height:9px">w</div>
<div class="badge" style="left:288px;top:1003px;height:75.6px;border-radius:5px 5px 5px 5px">
<div class="bh" style="top:0;background:#334021;color:#8cd43c">Ch 4</div>
<div class="a" style="left:0;top:19px;width:90px;height:1.5px;background:#a8a8a8"></div>
</div>
<div class="bl a" style="left:294px;top:1022px;">200 mV/div</div>
<div class="bl a" style="left:294px;top:1041px;">1 MΩ</div>
<div class="bl a" style="left:294px;top:1060px;">200 kHz</div>
<div class="a" style="left:360px;top:1061px;font-size:9px;color:#111;line-height:9px">B</div><div class="a" style="left:365.5px;top:1065px;font-size:9px;color:#111;line-height:9px">w</div>
<div class="badge" style="left:383px;top:1003px;height:75.6px;border-radius:5px 5px 5px 5px">
<div class="bh" style="top:0;background:#4a3220;color:#f49a30">Ch 5</div>
<div class="a" style="left:0;top:19px;width:90px;height:1.5px;background:#a8a8a8"></div>
</div>
<div class="bl a" style="left:389px;top:1022px;">1 V/div</div>
<div class="bl a" style="left:389px;top:1041px;">1 MΩ</div>
<div class="bl a" style="left:389px;top:1060px;">200 kHz</div>
<div class="a" style="left:455px;top:1061px;font-size:9px;color:#111;line-height:9px">B</div><div class="a" style="left:460.5px;top:1065px;font-size:9px;color:#111;line-height:9px">w</div>
<div class="badge" style="left:478px;top:984px;height:94.6px;border-radius:5px 5px 5px 5px">
<div class="bh" style="top:0;background:#2a24c0;color:#ffffff">Ch 6</div>
<div class="a" style="left:0;top:19px;width:90px;height:2px;background:#b4bcbc"></div>
<div class="a" style="left:0;top:21px;width:90px;height:17px;background:#ff0000;color:#fff;font-size:15.3px;line-height:15px;padding-left:16.5px">Clipping</div>
</div>
<svg class="a" style="left:478px;top:1006px" width="17" height="16"><path d="M8 1L15.5 14.5H0.5Z" fill="#f2ee00" stroke="#2a2a60" stroke-width="1"/><line x1="8" y1="5" x2="8" y2="12" stroke="#8a8a30" stroke-width="1.3"/></svg>
<div class="bl a" style="left:484px;top:1022px;">750 mV/div</div>
<div class="bl a" style="left:484px;top:1041px;">1 MΩ</div>
<div class="bl a" style="left:484px;top:1060px;">200 kHz</div>
<div class="a" style="left:550px;top:1061px;font-size:9px;color:#111;line-height:9px">B</div><div class="a" style="left:555.5px;top:1065px;font-size:9px;color:#111;line-height:9px">w</div>
<div class="badge" style="left:573px;top:1003px;height:75.6px;border-radius:5px 5px 5px 5px">
<div class="bh" style="top:0;background:#45301e;color:#f49a30">Math 1</div>
<div class="a" style="left:0;top:19px;width:90px;height:1.5px;background:#a8a8a8"></div>
</div>
<div class="bl a" style="left:579px;top:1022px;font-weight:700;">72.8 mT/div</div>
<div class="bl a" style="left:579px;top:1041px;">Intg(Ch2)…</div>
<div class="badge" style="left:668px;top:1003px;height:75.6px;border-radius:5px 5px 5px 5px">
<div class="bh" style="top:0;background:#2e2233;color:#ffffff">Math 2</div>
<div class="a" style="left:0;top:19px;width:90px;height:1.5px;background:#a8a8a8"></div>
</div>
<div class="bl a" style="left:674px;top:1022px;font-weight:700;">749.12 A/…</div>
<div class="bl a" style="left:674px;top:1041px;">-Intg(Ch3…</div>
<div class="a" style="left:1118px;top:1000px;width:1px;height:78px;background:#5e564f"></div>
<div class="a" style="left:1269px;top:1000px;width:1px;height:78px;background:#5e564f"></div>
<div class="a" style="left:1811px;top:1000px;width:1px;height:78px;background:#5e564f"></div>
<div class="btn" style="left:1129px;top:999px;width:40px;height:80px;align-items:flex-start;padding-top:19px;font-size:15.3px;line-height:16px">Add<br>New<br>Math</div>
<div class="a" style="left:1133px;top:1007px;width:32px;height:2.5px;background:#c42020;border-radius:1px"></div>
<div class="btn" style="left:1174px;top:999px;width:40px;height:80px;align-items:flex-start;padding-top:19px;font-size:15.3px;line-height:16px">Add<br>New<br>Ref</div>
<div class="a" style="left:1178px;top:1007px;width:32px;height:2.5px;background:#c4cadc;border-radius:1px"></div>
<div class="btn" style="left:1219px;top:999px;width:40px;height:80px;align-items:flex-start;padding-top:19px;font-size:15.3px;line-height:16px">Add<br>New<br>Bus</div>
<div class="a" style="left:1223px;top:1007px;width:32px;height:2.5px;background:#c050f0;border-radius:1px"></div>
<div class="panel" style="left:1280px;top:1003px;width:199px;height:75px"><div class="ph">Horizontal</div><div class="pl" style="left:4px;top:18px">4 ms/div</div><div class="pl" style="left:4px;top:37px">SR: 1 MS/s</div><div class="pl" style="left:4px;top:56px">RL: 40 kpts</div><div class="pl" style="left:109px;top:18px">40 ms</div><div class="pl" style="left:109px;top:37px">1 µs/pt</div><div class="pl" style="left:124px;top:56px">3%</div></div>
<svg class="a" style="left:1390px;top:1062px" width="12" height="14"><path d="M1 1H10V10H7L5.5 12.5L4 10H1Z" fill="#000" stroke="#f28c22" stroke-width="1.3"/><text x="5.5" y="8.6" font-family="Liberation Sans" font-weight="700" font-size="8" text-anchor="middle" fill="#fff">T</text></svg>
<div class="panel" style="left:1485px;top:1003px;width:159px;height:75px"><div class="ph">Trigger</div><div class="pl" style="left:69px;top:18px">3 V</div></div>
<div class="a" style="left:1490px;top:1025px;width:30px;height:16px;background:#2424c4;border:1px solid #111;border-radius:5px;color:#fff;font-size:14px;line-height:14px;text-align:center">6</div>
<svg class="a" style="left:1528px;top:1025px" width="22" height="16"><path d="M2 13.5H7L14 3.5H19" fill="none" stroke="#2a2aa0" stroke-width="1.3"/></svg>
<div class="panel" style="left:1650px;top:1003px;width:149px;height:75px"><div class="ph">Acquisition</div><div class="pl" style="left:3px;top:18px">Manual,</div><div class="pl" style="left:85px;top:18px">Analyze</div><div class="pl" style="left:3px;top:37px">High Res: 16 bits</div><div class="pl" style="left:3px;top:56px">Single: 1 /1</div></div>
<div class="a" style="left:1822px;top:999px;width:90px;height:36px;background:#ee1b24;border:1px solid #555;border-radius:6px;color:#fff;font-weight:700;font-size:14.3px;line-height:32px;text-align:center">Stopped</div>
<div class="a" style="left:1822px;top:1041px;width:90px;height:37px;background:#c9c9c9;border-radius:5px;color:#141414;font-size:14.5px;line-height:17.5px;text-align:center;padding-top:0px">20 May 2025<br>1:14:31 PM</div>
</body></html>
